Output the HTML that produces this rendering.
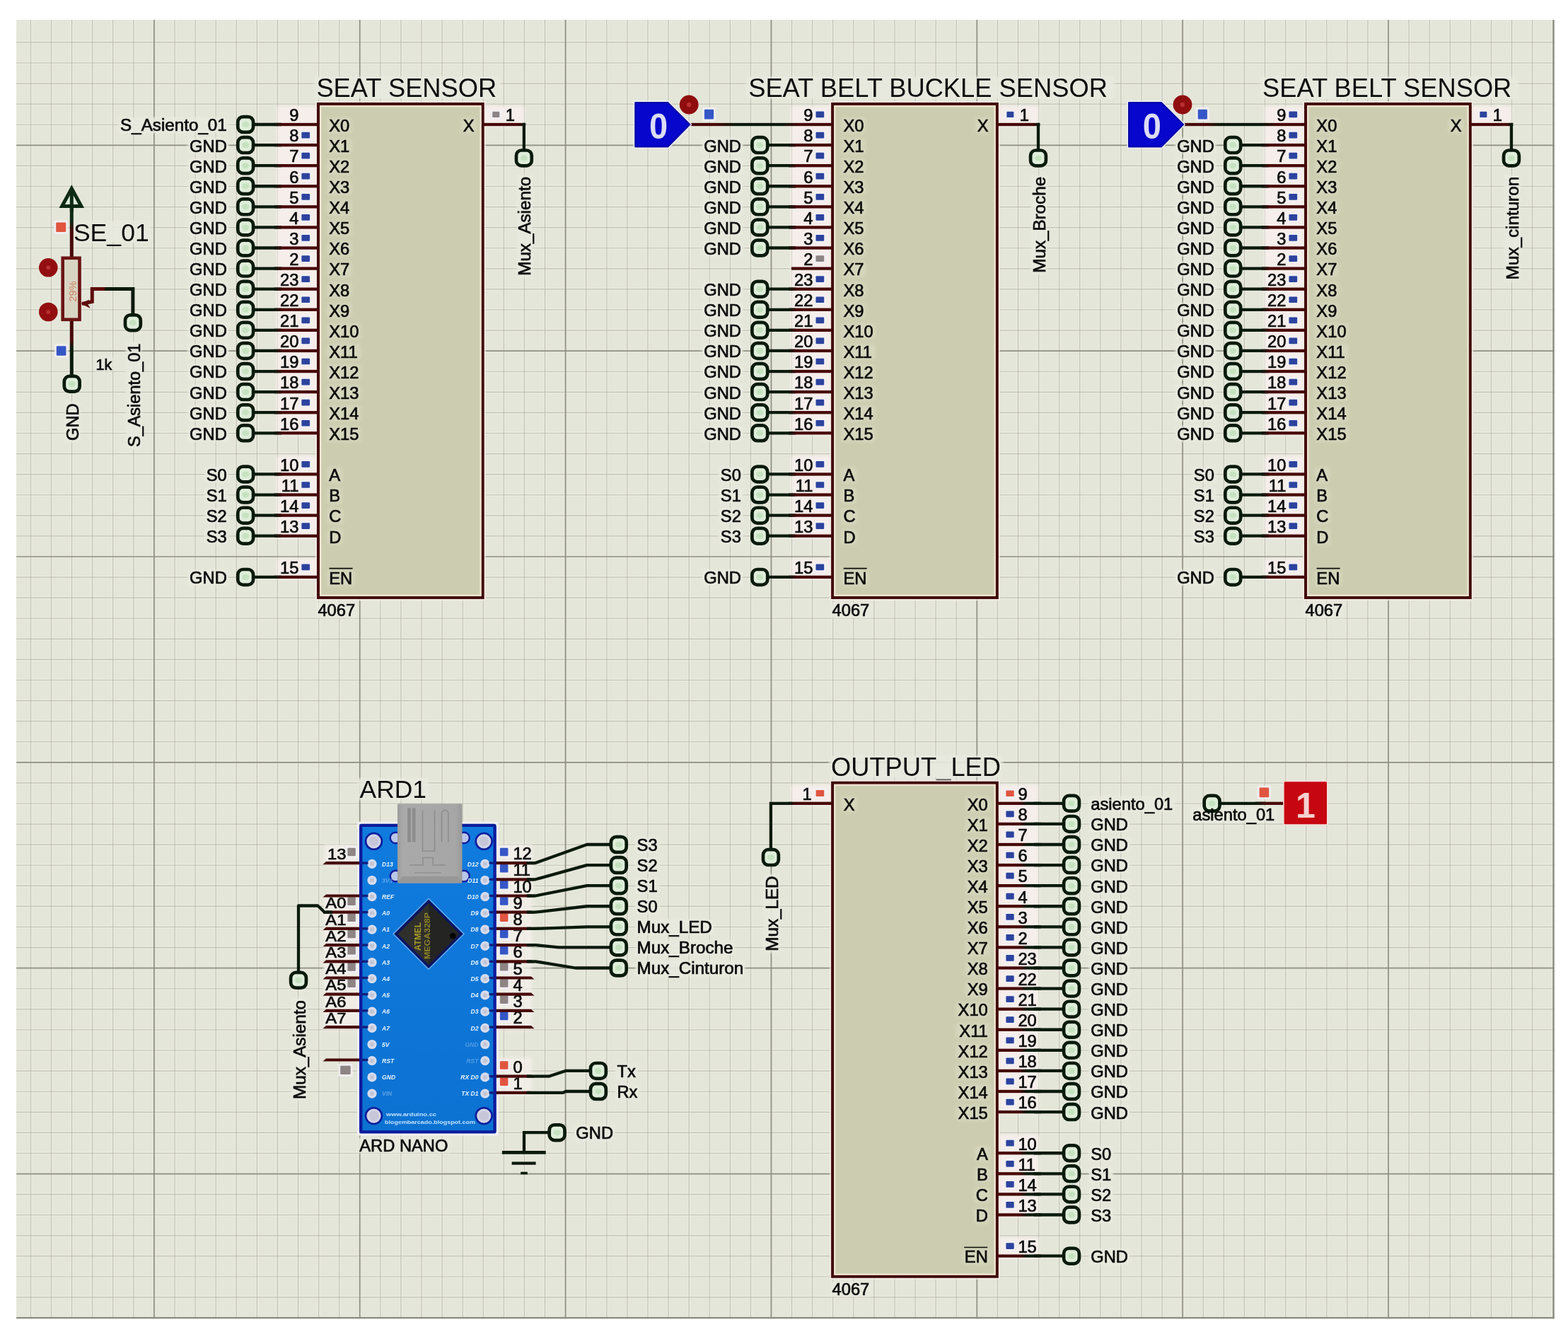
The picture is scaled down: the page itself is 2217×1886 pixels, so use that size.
<!DOCTYPE html>
<html lang="es">
<head>
<meta charset="utf-8">
<title>Esquema 4067 - ARD NANO</title>
<style>
html,body{margin:0;padding:0;background:#fff;}
body{width:2217px;height:1886px;overflow:hidden;}
svg{display:block;position:absolute;left:0;top:0;}
svg text{font-family:"Liberation Sans", Arial, sans-serif;white-space:pre;}
svg text.h{stroke:#0b0b0b;stroke-width:0.7px;}
svg text.t{stroke:none;}
</style>
</head>
<body>
<svg width="2217" height="1886" viewBox="0 0 2217 1886">
<defs>
<filter id="hb2" x="-30%" y="-30%" width="160%" height="160%"><feGaussianBlur stdDeviation="2"/></filter>
<filter id="hb3" x="0" y="0" width="100%" height="100%" filterUnits="userSpaceOnUse"><feGaussianBlur stdDeviation="1.6"/></filter>
<filter id="hb" x="-20%" y="-20%" width="140%" height="140%"><feGaussianBlur stdDeviation="2.2"/></filter>
<filter id="soft" x="0" y="0" width="100%" height="100%" filterUnits="userSpaceOnUse" color-interpolation-filters="sRGB"><feGaussianBlur stdDeviation="0.5"/></filter>
<linearGradient id="gpl" x1="0" x2="1" y1="0" y2="0"><stop offset="0" stop-color="#0a1a0c"/><stop offset="0.18" stop-color="#470909"/><stop offset="1" stop-color="#470909"/></linearGradient>
<linearGradient id="gpr" x1="0" x2="1" y1="0" y2="0"><stop offset="0" stop-color="#470909"/><stop offset="0.82" stop-color="#470909"/><stop offset="1" stop-color="#0a1a0c"/></linearGradient>
<linearGradient id="gpr4" x1="0" x2="1" y1="0" y2="0"><stop offset="0" stop-color="#470909"/><stop offset="0.5" stop-color="#470909"/><stop offset="0.68" stop-color="#0a1a0c"/><stop offset="1" stop-color="#0a1a0c"/></linearGradient>
<linearGradient id="gpl2" x1="0" x2="1" y1="0" y2="0"><stop offset="0" stop-color="#0a1a0c"/><stop offset="0.4" stop-color="#470909"/><stop offset="1" stop-color="#470909"/></linearGradient>
<linearGradient id="gls" x1="0" x2="1" y1="0" y2="0"><stop offset="0" stop-color="#470909"/><stop offset="0.22" stop-color="#470909"/><stop offset="0.34" stop-color="#0a1a0c"/><stop offset="0.66" stop-color="#0a1a0c"/><stop offset="0.78" stop-color="#470909"/><stop offset="1" stop-color="#470909"/></linearGradient>
<linearGradient id="gv1" x1="0" x2="0" y1="0" y2="1"><stop offset="0" stop-color="#0c2a14"/><stop offset="0.45" stop-color="#0c2a14"/><stop offset="0.6" stop-color="#470909"/><stop offset="1" stop-color="#470909"/></linearGradient>
<linearGradient id="gv2" x1="0" x2="0" y1="0" y2="1"><stop offset="0" stop-color="#470909"/><stop offset="0.35" stop-color="#470909"/><stop offset="0.5" stop-color="#0a1a0c"/><stop offset="1" stop-color="#0a1a0c"/></linearGradient>
<linearGradient id="gboard" x1="0" x2="0" y1="0" y2="1"><stop offset="0" stop-color="#107bde"/><stop offset="1" stop-color="#0c72d2"/></linearGradient>
<linearGradient id="gusb" x1="0" x2="1" y1="0" y2="0"><stop offset="0" stop-color="#9c9c9c"/><stop offset="0.08" stop-color="#a9a9a9"/><stop offset="0.9" stop-color="#a6a6a6"/><stop offset="1" stop-color="#999999"/></linearGradient>
</defs>
<g filter="url(#soft)">
<rect x="0" y="0" width="2217" height="1886" fill="#ffffff"/>
<rect x="23.1" y="27.9" width="2174.5" height="1836.3" rx="0" fill="#e5e6da" stroke="none" stroke-width="0" />
<path d="M43.39 27.9V1864.2M72.47 27.9V1864.2M101.56 27.9V1864.2M130.65 27.9V1864.2M159.73 27.9V1864.2M188.81 27.9V1864.2M246.99 27.9V1864.2M276.07 27.9V1864.2M305.16 27.9V1864.2M334.24 27.9V1864.2M363.33 27.9V1864.2M392.41 27.9V1864.2M421.5 27.9V1864.2M450.58 27.9V1864.2M479.67 27.9V1864.2M537.84 27.9V1864.2M566.92 27.9V1864.2M596 27.9V1864.2M625.09 27.9V1864.2M654.18 27.9V1864.2M683.26 27.9V1864.2M712.35 27.9V1864.2M741.43 27.9V1864.2M770.51 27.9V1864.2M828.69 27.9V1864.2M857.77 27.9V1864.2M886.86 27.9V1864.2M915.94 27.9V1864.2M945.02 27.9V1864.2M974.11 27.9V1864.2M1003.2 27.9V1864.2M1032.28 27.9V1864.2M1061.37 27.9V1864.2M1119.53 27.9V1864.2M1148.62 27.9V1864.2M1177.7 27.9V1864.2M1206.79 27.9V1864.2M1235.88 27.9V1864.2M1264.96 27.9V1864.2M1294.04 27.9V1864.2M1323.13 27.9V1864.2M1352.21 27.9V1864.2M1410.38 27.9V1864.2M1439.47 27.9V1864.2M1468.55 27.9V1864.2M1497.64 27.9V1864.2M1526.72 27.9V1864.2M1555.81 27.9V1864.2M1584.89 27.9V1864.2M1613.98 27.9V1864.2M1643.06 27.9V1864.2M1701.23 27.9V1864.2M1730.32 27.9V1864.2M1759.4 27.9V1864.2M1788.49 27.9V1864.2M1817.57 27.9V1864.2M1846.66 27.9V1864.2M1875.74 27.9V1864.2M1904.83 27.9V1864.2M1933.91 27.9V1864.2M1992.08 27.9V1864.2M2021.17 27.9V1864.2M2050.26 27.9V1864.2M2079.34 27.9V1864.2M2108.43 27.9V1864.2M2137.51 27.9V1864.2M2166.6 27.9V1864.2M2195.68 27.9V1864.2M23.1 59.87H2197.6M23.1 88.96H2197.6M23.1 118.05H2197.6M23.1 147.13H2197.6M23.1 176.21H2197.6M23.1 234.38H2197.6M23.1 263.47H2197.6M23.1 292.56H2197.6M23.1 321.64H2197.6M23.1 350.72H2197.6M23.1 379.81H2197.6M23.1 408.89H2197.6M23.1 437.98H2197.6M23.1 467.06H2197.6M23.1 525.24H2197.6M23.1 554.32H2197.6M23.1 583.41H2197.6M23.1 612.49H2197.6M23.1 641.58H2197.6M23.1 670.66H2197.6M23.1 699.75H2197.6M23.1 728.83H2197.6M23.1 757.92H2197.6M23.1 816.09H2197.6M23.1 845.17H2197.6M23.1 874.26H2197.6M23.1 903.34H2197.6M23.1 932.43H2197.6M23.1 961.51H2197.6M23.1 990.6H2197.6M23.1 1019.68H2197.6M23.1 1048.77H2197.6M23.1 1106.93H2197.6M23.1 1136.02H2197.6M23.1 1165.11H2197.6M23.1 1194.19H2197.6M23.1 1223.28H2197.6M23.1 1252.36H2197.6M23.1 1281.44H2197.6M23.1 1310.53H2197.6M23.1 1339.62H2197.6M23.1 1397.79H2197.6M23.1 1426.87H2197.6M23.1 1455.95H2197.6M23.1 1485.04H2197.6M23.1 1514.12H2197.6M23.1 1543.21H2197.6M23.1 1572.3H2197.6M23.1 1601.38H2197.6M23.1 1630.46H2197.6M23.1 1688.63H2197.6M23.1 1717.72H2197.6M23.1 1746.81H2197.6M23.1 1775.89H2197.6M23.1 1804.97H2197.6M23.1 1834.06H2197.6M23.1 1863.14H2197.6" stroke="#eeefe4" stroke-width="4.5" fill="none" opacity="0.45"/>
<path d="M43.39 27.9V1864.2M72.47 27.9V1864.2M101.56 27.9V1864.2M130.65 27.9V1864.2M159.73 27.9V1864.2M188.81 27.9V1864.2M246.99 27.9V1864.2M276.07 27.9V1864.2M305.16 27.9V1864.2M334.24 27.9V1864.2M363.33 27.9V1864.2M392.41 27.9V1864.2M421.5 27.9V1864.2M450.58 27.9V1864.2M479.67 27.9V1864.2M537.84 27.9V1864.2M566.92 27.9V1864.2M596 27.9V1864.2M625.09 27.9V1864.2M654.18 27.9V1864.2M683.26 27.9V1864.2M712.35 27.9V1864.2M741.43 27.9V1864.2M770.51 27.9V1864.2M828.69 27.9V1864.2M857.77 27.9V1864.2M886.86 27.9V1864.2M915.94 27.9V1864.2M945.02 27.9V1864.2M974.11 27.9V1864.2M1003.2 27.9V1864.2M1032.28 27.9V1864.2M1061.37 27.9V1864.2M1119.53 27.9V1864.2M1148.62 27.9V1864.2M1177.7 27.9V1864.2M1206.79 27.9V1864.2M1235.88 27.9V1864.2M1264.96 27.9V1864.2M1294.04 27.9V1864.2M1323.13 27.9V1864.2M1352.21 27.9V1864.2M1410.38 27.9V1864.2M1439.47 27.9V1864.2M1468.55 27.9V1864.2M1497.64 27.9V1864.2M1526.72 27.9V1864.2M1555.81 27.9V1864.2M1584.89 27.9V1864.2M1613.98 27.9V1864.2M1643.06 27.9V1864.2M1701.23 27.9V1864.2M1730.32 27.9V1864.2M1759.4 27.9V1864.2M1788.49 27.9V1864.2M1817.57 27.9V1864.2M1846.66 27.9V1864.2M1875.74 27.9V1864.2M1904.83 27.9V1864.2M1933.91 27.9V1864.2M1992.08 27.9V1864.2M2021.17 27.9V1864.2M2050.26 27.9V1864.2M2079.34 27.9V1864.2M2108.43 27.9V1864.2M2137.51 27.9V1864.2M2166.6 27.9V1864.2M2195.68 27.9V1864.2M23.1 59.87H2197.6M23.1 88.96H2197.6M23.1 118.05H2197.6M23.1 147.13H2197.6M23.1 176.21H2197.6M23.1 234.38H2197.6M23.1 263.47H2197.6M23.1 292.56H2197.6M23.1 321.64H2197.6M23.1 350.72H2197.6M23.1 379.81H2197.6M23.1 408.89H2197.6M23.1 437.98H2197.6M23.1 467.06H2197.6M23.1 525.24H2197.6M23.1 554.32H2197.6M23.1 583.41H2197.6M23.1 612.49H2197.6M23.1 641.58H2197.6M23.1 670.66H2197.6M23.1 699.75H2197.6M23.1 728.83H2197.6M23.1 757.92H2197.6M23.1 816.09H2197.6M23.1 845.17H2197.6M23.1 874.26H2197.6M23.1 903.34H2197.6M23.1 932.43H2197.6M23.1 961.51H2197.6M23.1 990.6H2197.6M23.1 1019.68H2197.6M23.1 1048.77H2197.6M23.1 1106.93H2197.6M23.1 1136.02H2197.6M23.1 1165.11H2197.6M23.1 1194.19H2197.6M23.1 1223.28H2197.6M23.1 1252.36H2197.6M23.1 1281.44H2197.6M23.1 1310.53H2197.6M23.1 1339.62H2197.6M23.1 1397.79H2197.6M23.1 1426.87H2197.6M23.1 1455.95H2197.6M23.1 1485.04H2197.6M23.1 1514.12H2197.6M23.1 1543.21H2197.6M23.1 1572.3H2197.6M23.1 1601.38H2197.6M23.1 1630.46H2197.6M23.1 1688.63H2197.6M23.1 1717.72H2197.6M23.1 1746.81H2197.6M23.1 1775.89H2197.6M23.1 1804.97H2197.6M23.1 1834.06H2197.6M23.1 1863.14H2197.6" stroke="#c0c1b3" stroke-width="1.15" fill="none"/>
<path d="M217.9 27.9V1864.2M508.75 27.9V1864.2M799.6 27.9V1864.2M1090.45 27.9V1864.2M1381.3 27.9V1864.2M1672.15 27.9V1864.2M1963 27.9V1864.2M23.1 205.3H2197.6M23.1 496.15H2197.6M23.1 787H2197.6M23.1 1077.85H2197.6M23.1 1368.7H2197.6M23.1 1659.55H2197.6" stroke="#8e8f82" stroke-width="1.7" fill="none"/>
<g filter="url(#hb3)" opacity="0.9"><rect x="167.87" y="166" width="155.41" height="21.92" rx="3" fill="#e9eadf"/><rect x="406.62" y="151.9" width="18.26" height="21.92" rx="3" fill="#e9eadf"/><rect x="265.28" y="195.08" width="58" height="21.92" rx="3" fill="#e9eadf"/><rect x="406.62" y="180.98" width="18.26" height="21.92" rx="3" fill="#e9eadf"/><rect x="265.28" y="224.17" width="58" height="21.92" rx="3" fill="#e9eadf"/><rect x="406.62" y="210.07" width="18.26" height="21.92" rx="3" fill="#e9eadf"/><rect x="265.28" y="253.25" width="58" height="21.92" rx="3" fill="#e9eadf"/><rect x="406.62" y="239.15" width="18.26" height="21.92" rx="3" fill="#e9eadf"/><rect x="265.28" y="282.33" width="58" height="21.92" rx="3" fill="#e9eadf"/><rect x="406.62" y="268.24" width="18.26" height="21.92" rx="3" fill="#e9eadf"/><rect x="265.28" y="311.42" width="58" height="21.92" rx="3" fill="#e9eadf"/><rect x="406.62" y="297.32" width="18.26" height="21.92" rx="3" fill="#e9eadf"/><rect x="265.28" y="340.5" width="58" height="21.92" rx="3" fill="#e9eadf"/><rect x="406.62" y="326.4" width="18.26" height="21.92" rx="3" fill="#e9eadf"/><rect x="265.28" y="369.59" width="58" height="21.92" rx="3" fill="#e9eadf"/><rect x="406.62" y="355.49" width="18.26" height="21.92" rx="3" fill="#e9eadf"/><rect x="265.28" y="398.67" width="58" height="21.92" rx="3" fill="#e9eadf"/><rect x="393.36" y="384.57" width="31.52" height="21.92" rx="3" fill="#e9eadf"/><rect x="265.28" y="427.76" width="58" height="21.92" rx="3" fill="#e9eadf"/><rect x="393.36" y="413.66" width="31.52" height="21.92" rx="3" fill="#e9eadf"/><rect x="265.28" y="456.84" width="58" height="21.92" rx="3" fill="#e9eadf"/><rect x="393.36" y="442.75" width="31.52" height="21.92" rx="3" fill="#e9eadf"/><rect x="265.28" y="485.93" width="58" height="21.92" rx="3" fill="#e9eadf"/><rect x="393.36" y="471.83" width="31.52" height="21.92" rx="3" fill="#e9eadf"/><rect x="265.28" y="515.01" width="58" height="21.92" rx="3" fill="#e9eadf"/><rect x="393.36" y="500.91" width="31.52" height="21.92" rx="3" fill="#e9eadf"/><rect x="265.28" y="544.1" width="58" height="21.92" rx="3" fill="#e9eadf"/><rect x="393.36" y="530" width="31.52" height="21.92" rx="3" fill="#e9eadf"/><rect x="265.28" y="573.19" width="58" height="21.92" rx="3" fill="#e9eadf"/><rect x="393.36" y="559.09" width="31.52" height="21.92" rx="3" fill="#e9eadf"/><rect x="265.28" y="602.27" width="58" height="21.92" rx="3" fill="#e9eadf"/><rect x="393.36" y="588.17" width="31.52" height="21.92" rx="3" fill="#e9eadf"/><rect x="289.11" y="660.44" width="34.17" height="21.92" rx="3" fill="#e9eadf"/><rect x="393.36" y="646.34" width="31.52" height="21.92" rx="3" fill="#e9eadf"/><rect x="289.11" y="689.52" width="34.17" height="21.92" rx="3" fill="#e9eadf"/><rect x="393.36" y="675.42" width="31.52" height="21.92" rx="3" fill="#e9eadf"/><rect x="289.11" y="718.61" width="34.17" height="21.92" rx="3" fill="#e9eadf"/><rect x="393.36" y="704.51" width="31.52" height="21.92" rx="3" fill="#e9eadf"/><rect x="289.11" y="747.7" width="34.17" height="21.92" rx="3" fill="#e9eadf"/><rect x="393.36" y="733.6" width="31.52" height="21.92" rx="3" fill="#e9eadf"/><rect x="265.28" y="805.87" width="58" height="21.92" rx="3" fill="#e9eadf"/><rect x="393.36" y="791.76" width="31.52" height="21.92" rx="3" fill="#e9eadf"/><rect x="712.16" y="151.9" width="18.26" height="21.92" rx="3" fill="#e9eadf"/><rect x="731.04" y="247.41" width="21.92" height="144.63" rx="3" fill="#e9eadf"/><rect x="444.9" y="108.59" width="263.2" height="31.14" rx="3" fill="#e9eadf"/><rect x="446.88" y="851.85" width="58.05" height="21.92" rx="3" fill="#e9eadf"/><rect x="1133.74" y="151.9" width="18.26" height="21.92" rx="3" fill="#e9eadf"/><rect x="992.4" y="195.08" width="58" height="21.92" rx="3" fill="#e9eadf"/><rect x="1133.74" y="180.98" width="18.26" height="21.92" rx="3" fill="#e9eadf"/><rect x="992.4" y="224.17" width="58" height="21.92" rx="3" fill="#e9eadf"/><rect x="1133.74" y="210.07" width="18.26" height="21.92" rx="3" fill="#e9eadf"/><rect x="992.4" y="253.25" width="58" height="21.92" rx="3" fill="#e9eadf"/><rect x="1133.74" y="239.15" width="18.26" height="21.92" rx="3" fill="#e9eadf"/><rect x="992.4" y="282.33" width="58" height="21.92" rx="3" fill="#e9eadf"/><rect x="1133.74" y="268.24" width="18.26" height="21.92" rx="3" fill="#e9eadf"/><rect x="992.4" y="311.42" width="58" height="21.92" rx="3" fill="#e9eadf"/><rect x="1133.74" y="297.32" width="18.26" height="21.92" rx="3" fill="#e9eadf"/><rect x="992.4" y="340.5" width="58" height="21.92" rx="3" fill="#e9eadf"/><rect x="1133.74" y="326.4" width="18.26" height="21.92" rx="3" fill="#e9eadf"/><rect x="1133.74" y="355.49" width="18.26" height="21.92" rx="3" fill="#e9eadf"/><rect x="992.4" y="398.67" width="58" height="21.92" rx="3" fill="#e9eadf"/><rect x="1120.48" y="384.57" width="31.52" height="21.92" rx="3" fill="#e9eadf"/><rect x="992.4" y="427.76" width="58" height="21.92" rx="3" fill="#e9eadf"/><rect x="1120.48" y="413.66" width="31.52" height="21.92" rx="3" fill="#e9eadf"/><rect x="992.4" y="456.84" width="58" height="21.92" rx="3" fill="#e9eadf"/><rect x="1120.48" y="442.75" width="31.52" height="21.92" rx="3" fill="#e9eadf"/><rect x="992.4" y="485.93" width="58" height="21.92" rx="3" fill="#e9eadf"/><rect x="1120.48" y="471.83" width="31.52" height="21.92" rx="3" fill="#e9eadf"/><rect x="992.4" y="515.01" width="58" height="21.92" rx="3" fill="#e9eadf"/><rect x="1120.48" y="500.91" width="31.52" height="21.92" rx="3" fill="#e9eadf"/><rect x="992.4" y="544.1" width="58" height="21.92" rx="3" fill="#e9eadf"/><rect x="1120.48" y="530" width="31.52" height="21.92" rx="3" fill="#e9eadf"/><rect x="992.4" y="573.19" width="58" height="21.92" rx="3" fill="#e9eadf"/><rect x="1120.48" y="559.09" width="31.52" height="21.92" rx="3" fill="#e9eadf"/><rect x="992.4" y="602.27" width="58" height="21.92" rx="3" fill="#e9eadf"/><rect x="1120.48" y="588.17" width="31.52" height="21.92" rx="3" fill="#e9eadf"/><rect x="1016.23" y="660.44" width="34.17" height="21.92" rx="3" fill="#e9eadf"/><rect x="1120.48" y="646.34" width="31.52" height="21.92" rx="3" fill="#e9eadf"/><rect x="1016.23" y="689.52" width="34.17" height="21.92" rx="3" fill="#e9eadf"/><rect x="1120.48" y="675.42" width="31.52" height="21.92" rx="3" fill="#e9eadf"/><rect x="1016.23" y="718.61" width="34.17" height="21.92" rx="3" fill="#e9eadf"/><rect x="1120.48" y="704.51" width="31.52" height="21.92" rx="3" fill="#e9eadf"/><rect x="1016.23" y="747.7" width="34.17" height="21.92" rx="3" fill="#e9eadf"/><rect x="1120.48" y="733.6" width="31.52" height="21.92" rx="3" fill="#e9eadf"/><rect x="992.4" y="805.87" width="58" height="21.92" rx="3" fill="#e9eadf"/><rect x="1120.48" y="791.76" width="31.52" height="21.92" rx="3" fill="#e9eadf"/><rect x="1439.29" y="151.9" width="18.26" height="21.92" rx="3" fill="#e9eadf"/><rect x="1458.16" y="247.41" width="21.92" height="140.6" rx="3" fill="#e9eadf"/><rect x="1055.7" y="108.59" width="519.41" height="31.14" rx="3" fill="#e9eadf"/><rect x="1174.01" y="851.85" width="58.05" height="21.92" rx="3" fill="#e9eadf"/><rect x="1802.7" y="151.9" width="18.26" height="21.92" rx="3" fill="#e9eadf"/><rect x="1661.36" y="195.08" width="58" height="21.92" rx="3" fill="#e9eadf"/><rect x="1802.7" y="180.98" width="18.26" height="21.92" rx="3" fill="#e9eadf"/><rect x="1661.36" y="224.17" width="58" height="21.92" rx="3" fill="#e9eadf"/><rect x="1802.7" y="210.07" width="18.26" height="21.92" rx="3" fill="#e9eadf"/><rect x="1661.36" y="253.25" width="58" height="21.92" rx="3" fill="#e9eadf"/><rect x="1802.7" y="239.15" width="18.26" height="21.92" rx="3" fill="#e9eadf"/><rect x="1661.36" y="282.33" width="58" height="21.92" rx="3" fill="#e9eadf"/><rect x="1802.7" y="268.24" width="18.26" height="21.92" rx="3" fill="#e9eadf"/><rect x="1661.36" y="311.42" width="58" height="21.92" rx="3" fill="#e9eadf"/><rect x="1802.7" y="297.32" width="18.26" height="21.92" rx="3" fill="#e9eadf"/><rect x="1661.36" y="340.5" width="58" height="21.92" rx="3" fill="#e9eadf"/><rect x="1802.7" y="326.4" width="18.26" height="21.92" rx="3" fill="#e9eadf"/><rect x="1661.36" y="369.59" width="58" height="21.92" rx="3" fill="#e9eadf"/><rect x="1802.7" y="355.49" width="18.26" height="21.92" rx="3" fill="#e9eadf"/><rect x="1661.36" y="398.67" width="58" height="21.92" rx="3" fill="#e9eadf"/><rect x="1789.44" y="384.57" width="31.52" height="21.92" rx="3" fill="#e9eadf"/><rect x="1661.36" y="427.76" width="58" height="21.92" rx="3" fill="#e9eadf"/><rect x="1789.44" y="413.66" width="31.52" height="21.92" rx="3" fill="#e9eadf"/><rect x="1661.36" y="456.84" width="58" height="21.92" rx="3" fill="#e9eadf"/><rect x="1789.44" y="442.75" width="31.52" height="21.92" rx="3" fill="#e9eadf"/><rect x="1661.36" y="485.93" width="58" height="21.92" rx="3" fill="#e9eadf"/><rect x="1789.44" y="471.83" width="31.52" height="21.92" rx="3" fill="#e9eadf"/><rect x="1661.36" y="515.01" width="58" height="21.92" rx="3" fill="#e9eadf"/><rect x="1789.44" y="500.91" width="31.52" height="21.92" rx="3" fill="#e9eadf"/><rect x="1661.36" y="544.1" width="58" height="21.92" rx="3" fill="#e9eadf"/><rect x="1789.44" y="530" width="31.52" height="21.92" rx="3" fill="#e9eadf"/><rect x="1661.36" y="573.19" width="58" height="21.92" rx="3" fill="#e9eadf"/><rect x="1789.44" y="559.09" width="31.52" height="21.92" rx="3" fill="#e9eadf"/><rect x="1661.36" y="602.27" width="58" height="21.92" rx="3" fill="#e9eadf"/><rect x="1789.44" y="588.17" width="31.52" height="21.92" rx="3" fill="#e9eadf"/><rect x="1685.19" y="660.44" width="34.17" height="21.92" rx="3" fill="#e9eadf"/><rect x="1789.44" y="646.34" width="31.52" height="21.92" rx="3" fill="#e9eadf"/><rect x="1685.19" y="689.52" width="34.17" height="21.92" rx="3" fill="#e9eadf"/><rect x="1789.44" y="675.42" width="31.52" height="21.92" rx="3" fill="#e9eadf"/><rect x="1685.19" y="718.61" width="34.17" height="21.92" rx="3" fill="#e9eadf"/><rect x="1789.44" y="704.51" width="31.52" height="21.92" rx="3" fill="#e9eadf"/><rect x="1685.19" y="747.7" width="34.17" height="21.92" rx="3" fill="#e9eadf"/><rect x="1789.44" y="733.6" width="31.52" height="21.92" rx="3" fill="#e9eadf"/><rect x="1661.36" y="805.87" width="58" height="21.92" rx="3" fill="#e9eadf"/><rect x="1789.44" y="791.76" width="31.52" height="21.92" rx="3" fill="#e9eadf"/><rect x="2108.24" y="151.9" width="18.26" height="21.92" rx="3" fill="#e9eadf"/><rect x="2127.12" y="247.41" width="21.92" height="150" rx="3" fill="#e9eadf"/><rect x="1782.5" y="108.59" width="364.08" height="31.14" rx="3" fill="#e9eadf"/><rect x="1842.96" y="851.85" width="58.05" height="21.92" rx="3" fill="#e9eadf"/><rect x="1172.5" y="1068.4" width="245.02" height="31.14" rx="3" fill="#e9eadf"/><rect x="1539.69" y="1125.8" width="121.69" height="21.92" rx="3" fill="#e9eadf"/><rect x="1436.88" y="1111.7" width="18.26" height="21.92" rx="3" fill="#e9eadf"/><rect x="1539.69" y="1154.88" width="58" height="21.92" rx="3" fill="#e9eadf"/><rect x="1436.88" y="1140.78" width="18.26" height="21.92" rx="3" fill="#e9eadf"/><rect x="1539.69" y="1183.97" width="58" height="21.92" rx="3" fill="#e9eadf"/><rect x="1436.88" y="1169.87" width="18.26" height="21.92" rx="3" fill="#e9eadf"/><rect x="1539.69" y="1213.06" width="58" height="21.92" rx="3" fill="#e9eadf"/><rect x="1436.88" y="1198.95" width="18.26" height="21.92" rx="3" fill="#e9eadf"/><rect x="1539.69" y="1242.14" width="58" height="21.92" rx="3" fill="#e9eadf"/><rect x="1436.88" y="1228.04" width="18.26" height="21.92" rx="3" fill="#e9eadf"/><rect x="1539.69" y="1271.22" width="58" height="21.92" rx="3" fill="#e9eadf"/><rect x="1436.88" y="1257.12" width="18.26" height="21.92" rx="3" fill="#e9eadf"/><rect x="1539.69" y="1300.31" width="58" height="21.92" rx="3" fill="#e9eadf"/><rect x="1436.88" y="1286.21" width="18.26" height="21.92" rx="3" fill="#e9eadf"/><rect x="1539.69" y="1329.39" width="58" height="21.92" rx="3" fill="#e9eadf"/><rect x="1436.88" y="1315.29" width="18.26" height="21.92" rx="3" fill="#e9eadf"/><rect x="1539.69" y="1358.48" width="58" height="21.92" rx="3" fill="#e9eadf"/><rect x="1436.88" y="1344.38" width="31.52" height="21.92" rx="3" fill="#e9eadf"/><rect x="1539.69" y="1387.57" width="58" height="21.92" rx="3" fill="#e9eadf"/><rect x="1436.88" y="1373.46" width="31.52" height="21.92" rx="3" fill="#e9eadf"/><rect x="1539.69" y="1416.65" width="58" height="21.92" rx="3" fill="#e9eadf"/><rect x="1436.88" y="1402.55" width="31.52" height="21.92" rx="3" fill="#e9eadf"/><rect x="1539.69" y="1445.73" width="58" height="21.92" rx="3" fill="#e9eadf"/><rect x="1436.88" y="1431.63" width="31.52" height="21.92" rx="3" fill="#e9eadf"/><rect x="1539.69" y="1474.82" width="58" height="21.92" rx="3" fill="#e9eadf"/><rect x="1436.88" y="1460.72" width="31.52" height="21.92" rx="3" fill="#e9eadf"/><rect x="1539.69" y="1503.9" width="58" height="21.92" rx="3" fill="#e9eadf"/><rect x="1436.88" y="1489.8" width="31.52" height="21.92" rx="3" fill="#e9eadf"/><rect x="1539.69" y="1532.99" width="58" height="21.92" rx="3" fill="#e9eadf"/><rect x="1436.88" y="1518.89" width="31.52" height="21.92" rx="3" fill="#e9eadf"/><rect x="1539.69" y="1562.08" width="58" height="21.92" rx="3" fill="#e9eadf"/><rect x="1436.88" y="1547.97" width="31.52" height="21.92" rx="3" fill="#e9eadf"/><rect x="1539.69" y="1620.24" width="34.17" height="21.92" rx="3" fill="#e9eadf"/><rect x="1436.88" y="1606.14" width="31.52" height="21.92" rx="3" fill="#e9eadf"/><rect x="1539.69" y="1649.33" width="34.17" height="21.92" rx="3" fill="#e9eadf"/><rect x="1436.88" y="1635.23" width="31.52" height="21.92" rx="3" fill="#e9eadf"/><rect x="1539.69" y="1678.41" width="34.17" height="21.92" rx="3" fill="#e9eadf"/><rect x="1436.88" y="1664.31" width="31.52" height="21.92" rx="3" fill="#e9eadf"/><rect x="1539.69" y="1707.5" width="34.17" height="21.92" rx="3" fill="#e9eadf"/><rect x="1436.88" y="1693.4" width="31.52" height="21.92" rx="3" fill="#e9eadf"/><rect x="1539.69" y="1765.67" width="58" height="21.92" rx="3" fill="#e9eadf"/><rect x="1436.88" y="1751.57" width="31.52" height="21.92" rx="3" fill="#e9eadf"/><rect x="1131.84" y="1111.7" width="18.26" height="21.92" rx="3" fill="#e9eadf"/><rect x="1080.08" y="1235.92" width="21.92" height="111.05" rx="3" fill="#e9eadf"/><rect x="1174.01" y="1811.65" width="58.05" height="21.92" rx="3" fill="#e9eadf"/><rect x="91.48" y="567.8" width="21.92" height="58" rx="3" fill="#e9eadf"/><rect x="178.08" y="483.2" width="21.92" height="152.04" rx="3" fill="#e9eadf"/><rect x="101.4" y="312.37" width="111.87" height="30.63" rx="3" fill="#e9eadf"/><rect x="133.1" y="504.62" width="27.7" height="20.48" rx="3" fill="#e9eadf"/><rect x="1683.7" y="1140.58" width="121.69" height="21.92" rx="3" fill="#e9eadf"/><rect x="506.1" y="1100.31" width="99.41" height="30.49" rx="3" fill="#e9eadf"/><rect x="505.7" y="1608.48" width="130.89" height="21.92" rx="3" fill="#e9eadf"/><rect x="460.48" y="1196.36" width="31.42" height="20.84" rx="3" fill="#e9eadf"/><rect x="457.84" y="1265.96" width="34.06" height="20.84" rx="3" fill="#e9eadf"/><rect x="457.84" y="1289.16" width="34.06" height="20.84" rx="3" fill="#e9eadf"/><rect x="457.84" y="1312.36" width="34.06" height="20.84" rx="3" fill="#e9eadf"/><rect x="457.84" y="1335.56" width="34.06" height="20.84" rx="3" fill="#e9eadf"/><rect x="457.84" y="1358.76" width="34.06" height="20.84" rx="3" fill="#e9eadf"/><rect x="457.84" y="1381.96" width="34.06" height="20.84" rx="3" fill="#e9eadf"/><rect x="457.84" y="1405.16" width="34.06" height="20.84" rx="3" fill="#e9eadf"/><rect x="457.84" y="1428.36" width="34.06" height="20.84" rx="3" fill="#e9eadf"/><rect x="722.9" y="1195.68" width="31.52" height="21.92" rx="3" fill="#e9eadf"/><rect x="722.9" y="1218.88" width="31.52" height="21.92" rx="3" fill="#e9eadf"/><rect x="722.9" y="1242.08" width="31.52" height="21.92" rx="3" fill="#e9eadf"/><rect x="722.9" y="1265.28" width="18.26" height="21.92" rx="3" fill="#e9eadf"/><rect x="722.9" y="1288.48" width="18.26" height="21.92" rx="3" fill="#e9eadf"/><rect x="722.9" y="1311.68" width="18.26" height="21.92" rx="3" fill="#e9eadf"/><rect x="722.9" y="1334.88" width="18.26" height="21.92" rx="3" fill="#e9eadf"/><rect x="722.9" y="1358.08" width="18.26" height="21.92" rx="3" fill="#e9eadf"/><rect x="722.9" y="1381.28" width="18.26" height="21.92" rx="3" fill="#e9eadf"/><rect x="722.9" y="1404.48" width="18.26" height="21.92" rx="3" fill="#e9eadf"/><rect x="722.9" y="1427.68" width="18.26" height="21.92" rx="3" fill="#e9eadf"/><rect x="722.9" y="1497.28" width="18.26" height="21.92" rx="3" fill="#e9eadf"/><rect x="722.9" y="1520.48" width="18.26" height="21.92" rx="3" fill="#e9eadf"/><rect x="898.1" y="1183.47" width="34.17" height="21.92" rx="3" fill="#e9eadf"/><rect x="898.1" y="1212.56" width="34.17" height="21.92" rx="3" fill="#e9eadf"/><rect x="898.1" y="1241.64" width="34.17" height="21.92" rx="3" fill="#e9eadf"/><rect x="898.1" y="1270.72" width="34.17" height="21.92" rx="3" fill="#e9eadf"/><rect x="898.1" y="1299.81" width="111.05" height="21.92" rx="3" fill="#e9eadf"/><rect x="898.1" y="1328.89" width="140.6" height="21.92" rx="3" fill="#e9eadf"/><rect x="898.1" y="1357.98" width="155.36" height="21.92" rx="3" fill="#e9eadf"/><rect x="869.9" y="1503.4" width="31.5" height="21.92" rx="3" fill="#e9eadf"/><rect x="869.9" y="1532.49" width="34.15" height="21.92" rx="3" fill="#e9eadf"/><rect x="412.18" y="1411.6" width="21.92" height="144.63" rx="3" fill="#e9eadf"/><rect x="811.8" y="1590.66" width="58" height="21.92" rx="3" fill="#e9eadf"/></g>
<line x1="2196.6" y1="27.9" x2="2196.6" y2="1864.2" stroke="#8b8c80" stroke-width="2.2" stroke-linecap="butt"/>
<line x1="23.1" y1="1863.2" x2="2197.6" y2="1863.2" stroke="#8b8c80" stroke-width="2.2" stroke-linecap="butt"/>
<g id="ics">
<rect x="391.98" y="150.01" width="57" height="465.27" rx="0" fill="#f8efed" stroke="none" stroke-width="0" opacity="0.9" filter="url(#hb)"/>
<rect x="391.98" y="644.46" width="57" height="116.25" rx="0" fill="#f8efed" stroke="none" stroke-width="0" opacity="0.9" filter="url(#hb)"/>
<rect x="391.98" y="789.88" width="57" height="29" rx="0" fill="#f8efed" stroke="none" stroke-width="0" opacity="0.9" filter="url(#hb)"/>
<rect x="683.66" y="150.01" width="57" height="29" rx="0" fill="#f8efed" stroke="none" stroke-width="0" opacity="0.9" filter="url(#hb)"/>
<rect x="446.98" y="143.93" width="238.68" height="704.04" fill="none" stroke="#f3ebe6" stroke-width="2.4" opacity="0.8"/>
<rect x="449.98" y="146.93" width="232.68" height="698.04" rx="0" fill="#cccdb0" stroke="#400908" stroke-width="4" />
<rect x="453.18" y="150.13" width="226.28" height="691.64" fill="none" stroke="#f3e6d6" stroke-width="2.4" opacity="0.85"/>
<line x1="359.18" y1="176.01" x2="397.98" y2="176.01" stroke="#0a1a0c" stroke-width="4.3" stroke-linecap="butt"/>
<rect x="387.98" y="173.86" width="61" height="4.3" fill="url(#gpl)"/>
<rect x="336.28" y="165.11" width="21.8" height="21.8" rx="7.4" ry="7.4" fill="#deeeda" stroke="#0a1a0c" stroke-width="4.7"/>
<ellipse cx="347.18" cy="176.01" rx="5" ry="4" fill="#bfddb7" opacity="0.75"/>
<text x="0" y="0" font-size="23.5" text-anchor="end" fill="#0b0b0b" font-weight="normal" font-style="normal" transform="translate(320.78 185.41) scale(1.03 1)" class="h" >S_Asiento_01</text>
<text x="0" y="0" font-size="23.5" text-anchor="end" fill="#0b0b0b" font-weight="normal" font-style="normal" transform="translate(422.38 171.31) scale(1.01 1)" class="h" >9</text>
<rect x="462.78" y="166.4" width="34.17" height="21.92" rx="4" fill="#d6d6bd" filter="url(#hb2)"/>
<text x="0" y="0" font-size="23.5" text-anchor="start" fill="#0b0b0b" font-weight="normal" font-style="normal" transform="translate(465.28 185.81) scale(1.01 1)" class="h" >X0</text>
<line x1="359.18" y1="205.1" x2="397.98" y2="205.1" stroke="#0a1a0c" stroke-width="4.3" stroke-linecap="butt"/>
<rect x="387.98" y="202.95" width="61" height="4.3" fill="url(#gpl)"/>
<rect x="336.28" y="194.2" width="21.8" height="21.8" rx="7.4" ry="7.4" fill="#deeeda" stroke="#0a1a0c" stroke-width="4.7"/>
<ellipse cx="347.18" cy="205.1" rx="5" ry="4" fill="#bfddb7" opacity="0.75"/>
<text x="0" y="0" font-size="23.5" text-anchor="end" fill="#0b0b0b" font-weight="normal" font-style="normal" transform="translate(320.78 214.5) scale(1.01 1)" class="h" >GND</text>
<rect x="423.38" y="183.7" width="17.7" height="14.7" rx="2" fill="#f1eef2" stroke="none" stroke-width="0" opacity="0.85"/>
<rect x="426.38" y="186.7" width="11.7" height="8.7" rx="1.2" fill="#2c439e" stroke="none" stroke-width="0" />
<text x="0" y="0" font-size="23.5" text-anchor="end" fill="#0b0b0b" font-weight="normal" font-style="normal" transform="translate(422.38 200.4) scale(1.01 1)" class="h" >8</text>
<rect x="462.78" y="195.48" width="34.17" height="21.92" rx="4" fill="#d6d6bd" filter="url(#hb2)"/>
<text x="0" y="0" font-size="23.5" text-anchor="start" fill="#0b0b0b" font-weight="normal" font-style="normal" transform="translate(465.28 214.9) scale(1.01 1)" class="h" >X1</text>
<line x1="359.18" y1="234.19" x2="397.98" y2="234.19" stroke="#0a1a0c" stroke-width="4.3" stroke-linecap="butt"/>
<rect x="387.98" y="232.03" width="61" height="4.3" fill="url(#gpl)"/>
<rect x="336.28" y="223.28" width="21.8" height="21.8" rx="7.4" ry="7.4" fill="#deeeda" stroke="#0a1a0c" stroke-width="4.7"/>
<ellipse cx="347.18" cy="234.19" rx="5" ry="4" fill="#bfddb7" opacity="0.75"/>
<text x="0" y="0" font-size="23.5" text-anchor="end" fill="#0b0b0b" font-weight="normal" font-style="normal" transform="translate(320.78 243.59) scale(1.01 1)" class="h" >GND</text>
<rect x="423.38" y="212.78" width="17.7" height="14.7" rx="2" fill="#f1eef2" stroke="none" stroke-width="0" opacity="0.85"/>
<rect x="426.38" y="215.78" width="11.7" height="8.7" rx="1.2" fill="#2c439e" stroke="none" stroke-width="0" />
<text x="0" y="0" font-size="23.5" text-anchor="end" fill="#0b0b0b" font-weight="normal" font-style="normal" transform="translate(422.38 229.49) scale(1.01 1)" class="h" >7</text>
<rect x="462.78" y="224.57" width="34.17" height="21.92" rx="4" fill="#d6d6bd" filter="url(#hb2)"/>
<text x="0" y="0" font-size="23.5" text-anchor="start" fill="#0b0b0b" font-weight="normal" font-style="normal" transform="translate(465.28 243.99) scale(1.01 1)" class="h" >X2</text>
<line x1="359.18" y1="263.27" x2="397.98" y2="263.27" stroke="#0a1a0c" stroke-width="4.3" stroke-linecap="butt"/>
<rect x="387.98" y="261.12" width="61" height="4.3" fill="url(#gpl)"/>
<rect x="336.28" y="252.37" width="21.8" height="21.8" rx="7.4" ry="7.4" fill="#deeeda" stroke="#0a1a0c" stroke-width="4.7"/>
<ellipse cx="347.18" cy="263.27" rx="5" ry="4" fill="#bfddb7" opacity="0.75"/>
<text x="0" y="0" font-size="23.5" text-anchor="end" fill="#0b0b0b" font-weight="normal" font-style="normal" transform="translate(320.78 272.67) scale(1.01 1)" class="h" >GND</text>
<rect x="423.38" y="241.87" width="17.7" height="14.7" rx="2" fill="#f1eef2" stroke="none" stroke-width="0" opacity="0.85"/>
<rect x="426.38" y="244.87" width="11.7" height="8.7" rx="1.2" fill="#2c439e" stroke="none" stroke-width="0" />
<text x="0" y="0" font-size="23.5" text-anchor="end" fill="#0b0b0b" font-weight="normal" font-style="normal" transform="translate(422.38 258.57) scale(1.01 1)" class="h" >6</text>
<rect x="462.78" y="253.65" width="34.17" height="21.92" rx="4" fill="#d6d6bd" filter="url(#hb2)"/>
<text x="0" y="0" font-size="23.5" text-anchor="start" fill="#0b0b0b" font-weight="normal" font-style="normal" transform="translate(465.28 273.07) scale(1.01 1)" class="h" >X3</text>
<line x1="359.18" y1="292.36" x2="397.98" y2="292.36" stroke="#0a1a0c" stroke-width="4.3" stroke-linecap="butt"/>
<rect x="387.98" y="290.21" width="61" height="4.3" fill="url(#gpl)"/>
<rect x="336.28" y="281.46" width="21.8" height="21.8" rx="7.4" ry="7.4" fill="#deeeda" stroke="#0a1a0c" stroke-width="4.7"/>
<ellipse cx="347.18" cy="292.36" rx="5" ry="4" fill="#bfddb7" opacity="0.75"/>
<text x="0" y="0" font-size="23.5" text-anchor="end" fill="#0b0b0b" font-weight="normal" font-style="normal" transform="translate(320.78 301.75) scale(1.01 1)" class="h" >GND</text>
<rect x="423.38" y="270.96" width="17.7" height="14.7" rx="2" fill="#f1eef2" stroke="none" stroke-width="0" opacity="0.85"/>
<rect x="426.38" y="273.96" width="11.7" height="8.7" rx="1.2" fill="#2c439e" stroke="none" stroke-width="0" />
<text x="0" y="0" font-size="23.5" text-anchor="end" fill="#0b0b0b" font-weight="normal" font-style="normal" transform="translate(422.38 287.66) scale(1.01 1)" class="h" >5</text>
<rect x="462.78" y="282.74" width="34.17" height="21.92" rx="4" fill="#d6d6bd" filter="url(#hb2)"/>
<text x="0" y="0" font-size="23.5" text-anchor="start" fill="#0b0b0b" font-weight="normal" font-style="normal" transform="translate(465.28 302.16) scale(1.01 1)" class="h" >X4</text>
<line x1="359.18" y1="321.44" x2="397.98" y2="321.44" stroke="#0a1a0c" stroke-width="4.3" stroke-linecap="butt"/>
<rect x="387.98" y="319.29" width="61" height="4.3" fill="url(#gpl)"/>
<rect x="336.28" y="310.54" width="21.8" height="21.8" rx="7.4" ry="7.4" fill="#deeeda" stroke="#0a1a0c" stroke-width="4.7"/>
<ellipse cx="347.18" cy="321.44" rx="5" ry="4" fill="#bfddb7" opacity="0.75"/>
<text x="0" y="0" font-size="23.5" text-anchor="end" fill="#0b0b0b" font-weight="normal" font-style="normal" transform="translate(320.78 330.84) scale(1.01 1)" class="h" >GND</text>
<rect x="423.38" y="300.04" width="17.7" height="14.7" rx="2" fill="#f1eef2" stroke="none" stroke-width="0" opacity="0.85"/>
<rect x="426.38" y="303.04" width="11.7" height="8.7" rx="1.2" fill="#2c439e" stroke="none" stroke-width="0" />
<text x="0" y="0" font-size="23.5" text-anchor="end" fill="#0b0b0b" font-weight="normal" font-style="normal" transform="translate(422.38 316.74) scale(1.01 1)" class="h" >4</text>
<rect x="462.78" y="311.82" width="34.17" height="21.92" rx="4" fill="#d6d6bd" filter="url(#hb2)"/>
<text x="0" y="0" font-size="23.5" text-anchor="start" fill="#0b0b0b" font-weight="normal" font-style="normal" transform="translate(465.28 331.24) scale(1.01 1)" class="h" >X5</text>
<line x1="359.18" y1="350.52" x2="397.98" y2="350.52" stroke="#0a1a0c" stroke-width="4.3" stroke-linecap="butt"/>
<rect x="387.98" y="348.38" width="61" height="4.3" fill="url(#gpl)"/>
<rect x="336.28" y="339.62" width="21.8" height="21.8" rx="7.4" ry="7.4" fill="#deeeda" stroke="#0a1a0c" stroke-width="4.7"/>
<ellipse cx="347.18" cy="350.52" rx="5" ry="4" fill="#bfddb7" opacity="0.75"/>
<text x="0" y="0" font-size="23.5" text-anchor="end" fill="#0b0b0b" font-weight="normal" font-style="normal" transform="translate(320.78 359.92) scale(1.01 1)" class="h" >GND</text>
<rect x="423.38" y="329.12" width="17.7" height="14.7" rx="2" fill="#f1eef2" stroke="none" stroke-width="0" opacity="0.85"/>
<rect x="426.38" y="332.12" width="11.7" height="8.7" rx="1.2" fill="#2c439e" stroke="none" stroke-width="0" />
<text x="0" y="0" font-size="23.5" text-anchor="end" fill="#0b0b0b" font-weight="normal" font-style="normal" transform="translate(422.38 345.82) scale(1.01 1)" class="h" >3</text>
<rect x="462.78" y="340.9" width="34.17" height="21.92" rx="4" fill="#d6d6bd" filter="url(#hb2)"/>
<text x="0" y="0" font-size="23.5" text-anchor="start" fill="#0b0b0b" font-weight="normal" font-style="normal" transform="translate(465.28 360.32) scale(1.01 1)" class="h" >X6</text>
<line x1="359.18" y1="379.61" x2="397.98" y2="379.61" stroke="#0a1a0c" stroke-width="4.3" stroke-linecap="butt"/>
<rect x="387.98" y="377.46" width="61" height="4.3" fill="url(#gpl)"/>
<rect x="336.28" y="368.71" width="21.8" height="21.8" rx="7.4" ry="7.4" fill="#deeeda" stroke="#0a1a0c" stroke-width="4.7"/>
<ellipse cx="347.18" cy="379.61" rx="5" ry="4" fill="#bfddb7" opacity="0.75"/>
<text x="0" y="0" font-size="23.5" text-anchor="end" fill="#0b0b0b" font-weight="normal" font-style="normal" transform="translate(320.78 389.01) scale(1.01 1)" class="h" >GND</text>
<rect x="423.38" y="358.21" width="17.7" height="14.7" rx="2" fill="#f1eef2" stroke="none" stroke-width="0" opacity="0.85"/>
<rect x="426.38" y="361.21" width="11.7" height="8.7" rx="1.2" fill="#2c439e" stroke="none" stroke-width="0" />
<text x="0" y="0" font-size="23.5" text-anchor="end" fill="#0b0b0b" font-weight="normal" font-style="normal" transform="translate(422.38 374.91) scale(1.01 1)" class="h" >2</text>
<rect x="462.78" y="369.99" width="34.17" height="21.92" rx="4" fill="#d6d6bd" filter="url(#hb2)"/>
<text x="0" y="0" font-size="23.5" text-anchor="start" fill="#0b0b0b" font-weight="normal" font-style="normal" transform="translate(465.28 389.41) scale(1.01 1)" class="h" >X7</text>
<line x1="359.18" y1="408.69" x2="397.98" y2="408.69" stroke="#0a1a0c" stroke-width="4.3" stroke-linecap="butt"/>
<rect x="387.98" y="406.55" width="61" height="4.3" fill="url(#gpl)"/>
<rect x="336.28" y="397.8" width="21.8" height="21.8" rx="7.4" ry="7.4" fill="#deeeda" stroke="#0a1a0c" stroke-width="4.7"/>
<ellipse cx="347.18" cy="408.69" rx="5" ry="4" fill="#bfddb7" opacity="0.75"/>
<text x="0" y="0" font-size="23.5" text-anchor="end" fill="#0b0b0b" font-weight="normal" font-style="normal" transform="translate(320.78 418.09) scale(1.01 1)" class="h" >GND</text>
<rect x="423.38" y="387.3" width="17.7" height="14.7" rx="2" fill="#f1eef2" stroke="none" stroke-width="0" opacity="0.85"/>
<rect x="426.38" y="390.3" width="11.7" height="8.7" rx="1.2" fill="#2c439e" stroke="none" stroke-width="0" />
<text x="0" y="0" font-size="23.5" text-anchor="end" fill="#0b0b0b" font-weight="normal" font-style="normal" transform="translate(422.38 404) scale(1.01 1)" class="h" >23</text>
<rect x="462.78" y="399.07" width="34.17" height="21.92" rx="4" fill="#d6d6bd" filter="url(#hb2)"/>
<text x="0" y="0" font-size="23.5" text-anchor="start" fill="#0b0b0b" font-weight="normal" font-style="normal" transform="translate(465.28 418.5) scale(1.01 1)" class="h" >X8</text>
<line x1="359.18" y1="437.78" x2="397.98" y2="437.78" stroke="#0a1a0c" stroke-width="4.3" stroke-linecap="butt"/>
<rect x="387.98" y="435.63" width="61" height="4.3" fill="url(#gpl)"/>
<rect x="336.28" y="426.88" width="21.8" height="21.8" rx="7.4" ry="7.4" fill="#deeeda" stroke="#0a1a0c" stroke-width="4.7"/>
<ellipse cx="347.18" cy="437.78" rx="5" ry="4" fill="#bfddb7" opacity="0.75"/>
<text x="0" y="0" font-size="23.5" text-anchor="end" fill="#0b0b0b" font-weight="normal" font-style="normal" transform="translate(320.78 447.18) scale(1.01 1)" class="h" >GND</text>
<rect x="423.38" y="416.38" width="17.7" height="14.7" rx="2" fill="#f1eef2" stroke="none" stroke-width="0" opacity="0.85"/>
<rect x="426.38" y="419.38" width="11.7" height="8.7" rx="1.2" fill="#2c439e" stroke="none" stroke-width="0" />
<text x="0" y="0" font-size="23.5" text-anchor="end" fill="#0b0b0b" font-weight="normal" font-style="normal" transform="translate(422.38 433.08) scale(1.01 1)" class="h" >22</text>
<rect x="462.78" y="428.16" width="34.17" height="21.92" rx="4" fill="#d6d6bd" filter="url(#hb2)"/>
<text x="0" y="0" font-size="23.5" text-anchor="start" fill="#0b0b0b" font-weight="normal" font-style="normal" transform="translate(465.28 447.58) scale(1.01 1)" class="h" >X9</text>
<line x1="359.18" y1="466.87" x2="397.98" y2="466.87" stroke="#0a1a0c" stroke-width="4.3" stroke-linecap="butt"/>
<rect x="387.98" y="464.72" width="61" height="4.3" fill="url(#gpl)"/>
<rect x="336.28" y="455.97" width="21.8" height="21.8" rx="7.4" ry="7.4" fill="#deeeda" stroke="#0a1a0c" stroke-width="4.7"/>
<ellipse cx="347.18" cy="466.87" rx="5" ry="4" fill="#bfddb7" opacity="0.75"/>
<text x="0" y="0" font-size="23.5" text-anchor="end" fill="#0b0b0b" font-weight="normal" font-style="normal" transform="translate(320.78 476.26) scale(1.01 1)" class="h" >GND</text>
<rect x="423.38" y="445.47" width="17.7" height="14.7" rx="2" fill="#f1eef2" stroke="none" stroke-width="0" opacity="0.85"/>
<rect x="426.38" y="448.47" width="11.7" height="8.7" rx="1.2" fill="#2c439e" stroke="none" stroke-width="0" />
<text x="0" y="0" font-size="23.5" text-anchor="end" fill="#0b0b0b" font-weight="normal" font-style="normal" transform="translate(422.38 462.17) scale(1.01 1)" class="h" >21</text>
<rect x="462.78" y="457.25" width="47.43" height="21.92" rx="4" fill="#d6d6bd" filter="url(#hb2)"/>
<text x="0" y="0" font-size="23.5" text-anchor="start" fill="#0b0b0b" font-weight="normal" font-style="normal" transform="translate(465.28 476.67) scale(1.01 1)" class="h" >X10</text>
<line x1="359.18" y1="495.95" x2="397.98" y2="495.95" stroke="#0a1a0c" stroke-width="4.3" stroke-linecap="butt"/>
<rect x="387.98" y="493.8" width="61" height="4.3" fill="url(#gpl)"/>
<rect x="336.28" y="485.05" width="21.8" height="21.8" rx="7.4" ry="7.4" fill="#deeeda" stroke="#0a1a0c" stroke-width="4.7"/>
<ellipse cx="347.18" cy="495.95" rx="5" ry="4" fill="#bfddb7" opacity="0.75"/>
<text x="0" y="0" font-size="23.5" text-anchor="end" fill="#0b0b0b" font-weight="normal" font-style="normal" transform="translate(320.78 505.35) scale(1.01 1)" class="h" >GND</text>
<rect x="423.38" y="474.55" width="17.7" height="14.7" rx="2" fill="#f1eef2" stroke="none" stroke-width="0" opacity="0.85"/>
<rect x="426.38" y="477.55" width="11.7" height="8.7" rx="1.2" fill="#2c439e" stroke="none" stroke-width="0" />
<text x="0" y="0" font-size="23.5" text-anchor="end" fill="#0b0b0b" font-weight="normal" font-style="normal" transform="translate(422.38 491.25) scale(1.01 1)" class="h" >20</text>
<rect x="462.78" y="486.33" width="47.43" height="21.92" rx="4" fill="#d6d6bd" filter="url(#hb2)"/>
<text x="0" y="0" font-size="23.5" text-anchor="start" fill="#0b0b0b" font-weight="normal" font-style="normal" transform="translate(465.28 505.75) scale(1.01 1)" class="h" >X11</text>
<line x1="359.18" y1="525.03" x2="397.98" y2="525.03" stroke="#0a1a0c" stroke-width="4.3" stroke-linecap="butt"/>
<rect x="387.98" y="522.88" width="61" height="4.3" fill="url(#gpl)"/>
<rect x="336.28" y="514.13" width="21.8" height="21.8" rx="7.4" ry="7.4" fill="#deeeda" stroke="#0a1a0c" stroke-width="4.7"/>
<ellipse cx="347.18" cy="525.03" rx="5" ry="4" fill="#bfddb7" opacity="0.75"/>
<text x="0" y="0" font-size="23.5" text-anchor="end" fill="#0b0b0b" font-weight="normal" font-style="normal" transform="translate(320.78 534.43) scale(1.01 1)" class="h" >GND</text>
<rect x="423.38" y="503.63" width="17.7" height="14.7" rx="2" fill="#f1eef2" stroke="none" stroke-width="0" opacity="0.85"/>
<rect x="426.38" y="506.63" width="11.7" height="8.7" rx="1.2" fill="#2c439e" stroke="none" stroke-width="0" />
<text x="0" y="0" font-size="23.5" text-anchor="end" fill="#0b0b0b" font-weight="normal" font-style="normal" transform="translate(422.38 520.33) scale(1.01 1)" class="h" >19</text>
<rect x="462.78" y="515.41" width="47.43" height="21.92" rx="4" fill="#d6d6bd" filter="url(#hb2)"/>
<text x="0" y="0" font-size="23.5" text-anchor="start" fill="#0b0b0b" font-weight="normal" font-style="normal" transform="translate(465.28 534.83) scale(1.01 1)" class="h" >X12</text>
<line x1="359.18" y1="554.12" x2="397.98" y2="554.12" stroke="#0a1a0c" stroke-width="4.3" stroke-linecap="butt"/>
<rect x="387.98" y="551.97" width="61" height="4.3" fill="url(#gpl)"/>
<rect x="336.28" y="543.22" width="21.8" height="21.8" rx="7.4" ry="7.4" fill="#deeeda" stroke="#0a1a0c" stroke-width="4.7"/>
<ellipse cx="347.18" cy="554.12" rx="5" ry="4" fill="#bfddb7" opacity="0.75"/>
<text x="0" y="0" font-size="23.5" text-anchor="end" fill="#0b0b0b" font-weight="normal" font-style="normal" transform="translate(320.78 563.52) scale(1.01 1)" class="h" >GND</text>
<rect x="423.38" y="532.72" width="17.7" height="14.7" rx="2" fill="#f1eef2" stroke="none" stroke-width="0" opacity="0.85"/>
<rect x="426.38" y="535.72" width="11.7" height="8.7" rx="1.2" fill="#2c439e" stroke="none" stroke-width="0" />
<text x="0" y="0" font-size="23.5" text-anchor="end" fill="#0b0b0b" font-weight="normal" font-style="normal" transform="translate(422.38 549.42) scale(1.01 1)" class="h" >18</text>
<rect x="462.78" y="544.5" width="47.43" height="21.92" rx="4" fill="#d6d6bd" filter="url(#hb2)"/>
<text x="0" y="0" font-size="23.5" text-anchor="start" fill="#0b0b0b" font-weight="normal" font-style="normal" transform="translate(465.28 563.92) scale(1.01 1)" class="h" >X13</text>
<line x1="359.18" y1="583.21" x2="397.98" y2="583.21" stroke="#0a1a0c" stroke-width="4.3" stroke-linecap="butt"/>
<rect x="387.98" y="581.06" width="61" height="4.3" fill="url(#gpl)"/>
<rect x="336.28" y="572.31" width="21.8" height="21.8" rx="7.4" ry="7.4" fill="#deeeda" stroke="#0a1a0c" stroke-width="4.7"/>
<ellipse cx="347.18" cy="583.21" rx="5" ry="4" fill="#bfddb7" opacity="0.75"/>
<text x="0" y="0" font-size="23.5" text-anchor="end" fill="#0b0b0b" font-weight="normal" font-style="normal" transform="translate(320.78 592.61) scale(1.01 1)" class="h" >GND</text>
<rect x="423.38" y="561.81" width="17.7" height="14.7" rx="2" fill="#f1eef2" stroke="none" stroke-width="0" opacity="0.85"/>
<rect x="426.38" y="564.81" width="11.7" height="8.7" rx="1.2" fill="#2c439e" stroke="none" stroke-width="0" />
<text x="0" y="0" font-size="23.5" text-anchor="end" fill="#0b0b0b" font-weight="normal" font-style="normal" transform="translate(422.38 578.5) scale(1.01 1)" class="h" >17</text>
<rect x="462.78" y="573.59" width="47.43" height="21.92" rx="4" fill="#d6d6bd" filter="url(#hb2)"/>
<text x="0" y="0" font-size="23.5" text-anchor="start" fill="#0b0b0b" font-weight="normal" font-style="normal" transform="translate(465.28 593) scale(1.01 1)" class="h" >X14</text>
<line x1="359.18" y1="612.29" x2="397.98" y2="612.29" stroke="#0a1a0c" stroke-width="4.3" stroke-linecap="butt"/>
<rect x="387.98" y="610.14" width="61" height="4.3" fill="url(#gpl)"/>
<rect x="336.28" y="601.39" width="21.8" height="21.8" rx="7.4" ry="7.4" fill="#deeeda" stroke="#0a1a0c" stroke-width="4.7"/>
<ellipse cx="347.18" cy="612.29" rx="5" ry="4" fill="#bfddb7" opacity="0.75"/>
<text x="0" y="0" font-size="23.5" text-anchor="end" fill="#0b0b0b" font-weight="normal" font-style="normal" transform="translate(320.78 621.69) scale(1.01 1)" class="h" >GND</text>
<rect x="423.38" y="590.89" width="17.7" height="14.7" rx="2" fill="#f1eef2" stroke="none" stroke-width="0" opacity="0.85"/>
<rect x="426.38" y="593.89" width="11.7" height="8.7" rx="1.2" fill="#2c439e" stroke="none" stroke-width="0" />
<text x="0" y="0" font-size="23.5" text-anchor="end" fill="#0b0b0b" font-weight="normal" font-style="normal" transform="translate(422.38 607.59) scale(1.01 1)" class="h" >16</text>
<rect x="462.78" y="602.67" width="47.43" height="21.92" rx="4" fill="#d6d6bd" filter="url(#hb2)"/>
<text x="0" y="0" font-size="23.5" text-anchor="start" fill="#0b0b0b" font-weight="normal" font-style="normal" transform="translate(465.28 622.09) scale(1.01 1)" class="h" >X15</text>
<line x1="359.18" y1="670.46" x2="397.98" y2="670.46" stroke="#0a1a0c" stroke-width="4.3" stroke-linecap="butt"/>
<rect x="387.98" y="668.31" width="61" height="4.3" fill="url(#gpl)"/>
<rect x="336.28" y="659.56" width="21.8" height="21.8" rx="7.4" ry="7.4" fill="#deeeda" stroke="#0a1a0c" stroke-width="4.7"/>
<ellipse cx="347.18" cy="670.46" rx="5" ry="4" fill="#bfddb7" opacity="0.75"/>
<text x="0" y="0" font-size="23.5" text-anchor="end" fill="#0b0b0b" font-weight="normal" font-style="normal" transform="translate(320.78 679.86) scale(1.01 1)" class="h" >S0</text>
<rect x="423.38" y="649.06" width="17.7" height="14.7" rx="2" fill="#f1eef2" stroke="none" stroke-width="0" opacity="0.85"/>
<rect x="426.38" y="652.06" width="11.7" height="8.7" rx="1.2" fill="#2c439e" stroke="none" stroke-width="0" />
<text x="0" y="0" font-size="23.5" text-anchor="end" fill="#0b0b0b" font-weight="normal" font-style="normal" transform="translate(422.38 665.76) scale(1.01 1)" class="h" >10</text>
<rect x="462.78" y="660.84" width="20.91" height="21.92" rx="4" fill="#d6d6bd" filter="url(#hb2)"/>
<text x="0" y="0" font-size="23.5" text-anchor="start" fill="#0b0b0b" font-weight="normal" font-style="normal" transform="translate(465.28 680.26) scale(1.01 1)" class="h" >A</text>
<line x1="359.18" y1="699.54" x2="397.98" y2="699.54" stroke="#0a1a0c" stroke-width="4.3" stroke-linecap="butt"/>
<rect x="387.98" y="697.39" width="61" height="4.3" fill="url(#gpl)"/>
<rect x="336.28" y="688.64" width="21.8" height="21.8" rx="7.4" ry="7.4" fill="#deeeda" stroke="#0a1a0c" stroke-width="4.7"/>
<ellipse cx="347.18" cy="699.54" rx="5" ry="4" fill="#bfddb7" opacity="0.75"/>
<text x="0" y="0" font-size="23.5" text-anchor="end" fill="#0b0b0b" font-weight="normal" font-style="normal" transform="translate(320.78 708.94) scale(1.01 1)" class="h" >S1</text>
<rect x="423.38" y="678.14" width="17.7" height="14.7" rx="2" fill="#f1eef2" stroke="none" stroke-width="0" opacity="0.85"/>
<rect x="426.38" y="681.14" width="11.7" height="8.7" rx="1.2" fill="#2c439e" stroke="none" stroke-width="0" />
<text x="0" y="0" font-size="23.5" text-anchor="end" fill="#0b0b0b" font-weight="normal" font-style="normal" transform="translate(422.38 694.84) scale(1.01 1)" class="h" >11</text>
<rect x="462.78" y="689.92" width="20.91" height="21.92" rx="4" fill="#d6d6bd" filter="url(#hb2)"/>
<text x="0" y="0" font-size="23.5" text-anchor="start" fill="#0b0b0b" font-weight="normal" font-style="normal" transform="translate(465.28 709.34) scale(1.01 1)" class="h" >B</text>
<line x1="359.18" y1="728.63" x2="397.98" y2="728.63" stroke="#0a1a0c" stroke-width="4.3" stroke-linecap="butt"/>
<rect x="387.98" y="726.48" width="61" height="4.3" fill="url(#gpl)"/>
<rect x="336.28" y="717.73" width="21.8" height="21.8" rx="7.4" ry="7.4" fill="#deeeda" stroke="#0a1a0c" stroke-width="4.7"/>
<ellipse cx="347.18" cy="728.63" rx="5" ry="4" fill="#bfddb7" opacity="0.75"/>
<text x="0" y="0" font-size="23.5" text-anchor="end" fill="#0b0b0b" font-weight="normal" font-style="normal" transform="translate(320.78 738.03) scale(1.01 1)" class="h" >S2</text>
<rect x="423.38" y="707.23" width="17.7" height="14.7" rx="2" fill="#f1eef2" stroke="none" stroke-width="0" opacity="0.85"/>
<rect x="426.38" y="710.23" width="11.7" height="8.7" rx="1.2" fill="#2c439e" stroke="none" stroke-width="0" />
<text x="0" y="0" font-size="23.5" text-anchor="end" fill="#0b0b0b" font-weight="normal" font-style="normal" transform="translate(422.38 723.93) scale(1.01 1)" class="h" >14</text>
<rect x="462.78" y="719.01" width="22.22" height="21.92" rx="4" fill="#d6d6bd" filter="url(#hb2)"/>
<text x="0" y="0" font-size="23.5" text-anchor="start" fill="#0b0b0b" font-weight="normal" font-style="normal" transform="translate(465.28 738.43) scale(1.01 1)" class="h" >C</text>
<line x1="359.18" y1="757.72" x2="397.98" y2="757.72" stroke="#0a1a0c" stroke-width="4.3" stroke-linecap="butt"/>
<rect x="387.98" y="755.57" width="61" height="4.3" fill="url(#gpl)"/>
<rect x="336.28" y="746.82" width="21.8" height="21.8" rx="7.4" ry="7.4" fill="#deeeda" stroke="#0a1a0c" stroke-width="4.7"/>
<ellipse cx="347.18" cy="757.72" rx="5" ry="4" fill="#bfddb7" opacity="0.75"/>
<text x="0" y="0" font-size="23.5" text-anchor="end" fill="#0b0b0b" font-weight="normal" font-style="normal" transform="translate(320.78 767.12) scale(1.01 1)" class="h" >S3</text>
<rect x="423.38" y="736.32" width="17.7" height="14.7" rx="2" fill="#f1eef2" stroke="none" stroke-width="0" opacity="0.85"/>
<rect x="426.38" y="739.32" width="11.7" height="8.7" rx="1.2" fill="#2c439e" stroke="none" stroke-width="0" />
<text x="0" y="0" font-size="23.5" text-anchor="end" fill="#0b0b0b" font-weight="normal" font-style="normal" transform="translate(422.38 753.01) scale(1.01 1)" class="h" >13</text>
<rect x="462.78" y="748.1" width="22.22" height="21.92" rx="4" fill="#d6d6bd" filter="url(#hb2)"/>
<text x="0" y="0" font-size="23.5" text-anchor="start" fill="#0b0b0b" font-weight="normal" font-style="normal" transform="translate(465.28 767.51) scale(1.01 1)" class="h" >D</text>
<line x1="359.18" y1="815.88" x2="397.98" y2="815.88" stroke="#0a1a0c" stroke-width="4.3" stroke-linecap="butt"/>
<rect x="387.98" y="813.74" width="61" height="4.3" fill="url(#gpl)"/>
<rect x="336.28" y="804.99" width="21.8" height="21.8" rx="7.4" ry="7.4" fill="#deeeda" stroke="#0a1a0c" stroke-width="4.7"/>
<ellipse cx="347.18" cy="815.88" rx="5" ry="4" fill="#bfddb7" opacity="0.75"/>
<text x="0" y="0" font-size="23.5" text-anchor="end" fill="#0b0b0b" font-weight="normal" font-style="normal" transform="translate(320.78 825.28) scale(1.01 1)" class="h" >GND</text>
<rect x="423.38" y="794.49" width="17.7" height="14.7" rx="2" fill="#f1eef2" stroke="none" stroke-width="0" opacity="0.85"/>
<rect x="426.38" y="797.49" width="11.7" height="8.7" rx="1.2" fill="#2c439e" stroke="none" stroke-width="0" />
<text x="0" y="0" font-size="23.5" text-anchor="end" fill="#0b0b0b" font-weight="normal" font-style="normal" transform="translate(422.38 811.18) scale(1.01 1)" class="h" >15</text>
<rect x="462.78" y="806.26" width="38.13" height="21.92" rx="4" fill="#d6d6bd" filter="url(#hb2)"/>
<text x="0" y="0" font-size="23.5" text-anchor="start" fill="#0b0b0b" font-weight="normal" font-style="normal" transform="translate(465.28 825.68) scale(1.01 1)" class="h" >EN</text>
<line x1="465.58" y1="803.68" x2="498.58" y2="803.68" stroke="#0b0b0b" stroke-width="1.7" stroke-linecap="butt"/>
<rect x="652.05" y="166.4" width="20.91" height="21.92" rx="4" fill="#d6d6bd" filter="url(#hb2)"/>
<text x="0" y="0" font-size="23.5" text-anchor="end" fill="#0b0b0b" font-weight="normal" font-style="normal" transform="translate(670.46 185.81) scale(1.01 1)" class="h" >X</text>
<rect x="683.66" y="173.86" width="59.6" height="4.3" fill="url(#gpr)"/>
<line x1="740.86" y1="173.86" x2="740.86" y2="212.01" stroke="#0a1a0c" stroke-width="4.3" stroke-linecap="butt"/>
<rect x="729.96" y="212.51" width="21.8" height="21.8" rx="7.4" ry="7.4" fill="#deeeda" stroke="#0a1a0c" stroke-width="4.7"/>
<ellipse cx="740.86" cy="223.41" rx="5" ry="4" fill="#bfddb7" opacity="0.75"/>
<rect x="693.26" y="154.71" width="16" height="14.4" rx="2" fill="#f1eef2" stroke="none" stroke-width="0" opacity="0.85"/>
<rect x="696.26" y="157.71" width="10" height="8.4" rx="1.2" fill="#8d8484" stroke="none" stroke-width="0" />
<text x="0" y="0" font-size="23.5" text-anchor="start" fill="#0b0b0b" font-weight="normal" font-style="normal" transform="translate(714.66 171.31) scale(1.01 1)" class="h" >1</text>
<text x="0" y="0" font-size="23.5" text-anchor="end" fill="#0b0b0b" font-weight="normal" font-style="normal" transform="translate(750.46 249.91) rotate(-90) scale(1.03 1)" class="h" >Mux_Asiento</text>
<text x="447.4" y="137.23" font-size="36.3" text-anchor="start" fill="#0b0b0b" font-weight="normal" font-style="normal" >SEAT SENSOR</text>
<text x="0" y="0" font-size="23.5" text-anchor="start" fill="#0b0b0b" font-weight="normal" font-style="normal" transform="translate(449.38 871.27) scale(1.01 1)" class="h" >4067</text>
<rect x="1119.11" y="150.01" width="57" height="465.27" rx="0" fill="#f8efed" stroke="none" stroke-width="0" opacity="0.9" filter="url(#hb)"/>
<rect x="1119.11" y="644.46" width="57" height="116.25" rx="0" fill="#f8efed" stroke="none" stroke-width="0" opacity="0.9" filter="url(#hb)"/>
<rect x="1119.11" y="789.88" width="57" height="29" rx="0" fill="#f8efed" stroke="none" stroke-width="0" opacity="0.9" filter="url(#hb)"/>
<rect x="1410.79" y="150.01" width="57" height="29" rx="0" fill="#f8efed" stroke="none" stroke-width="0" opacity="0.9" filter="url(#hb)"/>
<rect x="1174.11" y="143.93" width="238.68" height="704.04" fill="none" stroke="#f3ebe6" stroke-width="2.4" opacity="0.8"/>
<rect x="1177.11" y="146.93" width="232.68" height="698.04" rx="0" fill="#cccdb0" stroke="#400908" stroke-width="4" />
<rect x="1180.31" y="150.13" width="226.28" height="691.64" fill="none" stroke="#f3e6d6" stroke-width="2.4" opacity="0.85"/>
<rect x="1150.51" y="154.61" width="17.7" height="14.7" rx="2" fill="#f1eef2" stroke="none" stroke-width="0" opacity="0.85"/>
<rect x="1153.51" y="157.61" width="11.7" height="8.7" rx="1.2" fill="#2c439e" stroke="none" stroke-width="0" />
<text x="0" y="0" font-size="23.5" text-anchor="end" fill="#0b0b0b" font-weight="normal" font-style="normal" transform="translate(1149.51 171.31) scale(1.01 1)" class="h" >9</text>
<rect x="1189.9" y="166.4" width="34.17" height="21.92" rx="4" fill="#d6d6bd" filter="url(#hb2)"/>
<text x="0" y="0" font-size="23.5" text-anchor="start" fill="#0b0b0b" font-weight="normal" font-style="normal" transform="translate(1192.4 185.81) scale(1.01 1)" class="h" >X0</text>
<line x1="1086.31" y1="205.1" x2="1125.11" y2="205.1" stroke="#0a1a0c" stroke-width="4.3" stroke-linecap="butt"/>
<rect x="1115.11" y="202.95" width="61" height="4.3" fill="url(#gpl)"/>
<rect x="1063.4" y="194.2" width="21.8" height="21.8" rx="7.4" ry="7.4" fill="#deeeda" stroke="#0a1a0c" stroke-width="4.7"/>
<ellipse cx="1074.31" cy="205.1" rx="5" ry="4" fill="#bfddb7" opacity="0.75"/>
<text x="0" y="0" font-size="23.5" text-anchor="end" fill="#0b0b0b" font-weight="normal" font-style="normal" transform="translate(1047.9 214.5) scale(1.01 1)" class="h" >GND</text>
<rect x="1150.51" y="183.7" width="17.7" height="14.7" rx="2" fill="#f1eef2" stroke="none" stroke-width="0" opacity="0.85"/>
<rect x="1153.51" y="186.7" width="11.7" height="8.7" rx="1.2" fill="#2c439e" stroke="none" stroke-width="0" />
<text x="0" y="0" font-size="23.5" text-anchor="end" fill="#0b0b0b" font-weight="normal" font-style="normal" transform="translate(1149.51 200.4) scale(1.01 1)" class="h" >8</text>
<rect x="1189.9" y="195.48" width="34.17" height="21.92" rx="4" fill="#d6d6bd" filter="url(#hb2)"/>
<text x="0" y="0" font-size="23.5" text-anchor="start" fill="#0b0b0b" font-weight="normal" font-style="normal" transform="translate(1192.4 214.9) scale(1.01 1)" class="h" >X1</text>
<line x1="1086.31" y1="234.19" x2="1125.11" y2="234.19" stroke="#0a1a0c" stroke-width="4.3" stroke-linecap="butt"/>
<rect x="1115.11" y="232.03" width="61" height="4.3" fill="url(#gpl)"/>
<rect x="1063.4" y="223.28" width="21.8" height="21.8" rx="7.4" ry="7.4" fill="#deeeda" stroke="#0a1a0c" stroke-width="4.7"/>
<ellipse cx="1074.31" cy="234.19" rx="5" ry="4" fill="#bfddb7" opacity="0.75"/>
<text x="0" y="0" font-size="23.5" text-anchor="end" fill="#0b0b0b" font-weight="normal" font-style="normal" transform="translate(1047.9 243.59) scale(1.01 1)" class="h" >GND</text>
<rect x="1150.51" y="212.78" width="17.7" height="14.7" rx="2" fill="#f1eef2" stroke="none" stroke-width="0" opacity="0.85"/>
<rect x="1153.51" y="215.78" width="11.7" height="8.7" rx="1.2" fill="#2c439e" stroke="none" stroke-width="0" />
<text x="0" y="0" font-size="23.5" text-anchor="end" fill="#0b0b0b" font-weight="normal" font-style="normal" transform="translate(1149.51 229.49) scale(1.01 1)" class="h" >7</text>
<rect x="1189.9" y="224.57" width="34.17" height="21.92" rx="4" fill="#d6d6bd" filter="url(#hb2)"/>
<text x="0" y="0" font-size="23.5" text-anchor="start" fill="#0b0b0b" font-weight="normal" font-style="normal" transform="translate(1192.4 243.99) scale(1.01 1)" class="h" >X2</text>
<line x1="1086.31" y1="263.27" x2="1125.11" y2="263.27" stroke="#0a1a0c" stroke-width="4.3" stroke-linecap="butt"/>
<rect x="1115.11" y="261.12" width="61" height="4.3" fill="url(#gpl)"/>
<rect x="1063.4" y="252.37" width="21.8" height="21.8" rx="7.4" ry="7.4" fill="#deeeda" stroke="#0a1a0c" stroke-width="4.7"/>
<ellipse cx="1074.31" cy="263.27" rx="5" ry="4" fill="#bfddb7" opacity="0.75"/>
<text x="0" y="0" font-size="23.5" text-anchor="end" fill="#0b0b0b" font-weight="normal" font-style="normal" transform="translate(1047.9 272.67) scale(1.01 1)" class="h" >GND</text>
<rect x="1150.51" y="241.87" width="17.7" height="14.7" rx="2" fill="#f1eef2" stroke="none" stroke-width="0" opacity="0.85"/>
<rect x="1153.51" y="244.87" width="11.7" height="8.7" rx="1.2" fill="#2c439e" stroke="none" stroke-width="0" />
<text x="0" y="0" font-size="23.5" text-anchor="end" fill="#0b0b0b" font-weight="normal" font-style="normal" transform="translate(1149.51 258.57) scale(1.01 1)" class="h" >6</text>
<rect x="1189.9" y="253.65" width="34.17" height="21.92" rx="4" fill="#d6d6bd" filter="url(#hb2)"/>
<text x="0" y="0" font-size="23.5" text-anchor="start" fill="#0b0b0b" font-weight="normal" font-style="normal" transform="translate(1192.4 273.07) scale(1.01 1)" class="h" >X3</text>
<line x1="1086.31" y1="292.36" x2="1125.11" y2="292.36" stroke="#0a1a0c" stroke-width="4.3" stroke-linecap="butt"/>
<rect x="1115.11" y="290.21" width="61" height="4.3" fill="url(#gpl)"/>
<rect x="1063.4" y="281.46" width="21.8" height="21.8" rx="7.4" ry="7.4" fill="#deeeda" stroke="#0a1a0c" stroke-width="4.7"/>
<ellipse cx="1074.31" cy="292.36" rx="5" ry="4" fill="#bfddb7" opacity="0.75"/>
<text x="0" y="0" font-size="23.5" text-anchor="end" fill="#0b0b0b" font-weight="normal" font-style="normal" transform="translate(1047.9 301.75) scale(1.01 1)" class="h" >GND</text>
<rect x="1150.51" y="270.96" width="17.7" height="14.7" rx="2" fill="#f1eef2" stroke="none" stroke-width="0" opacity="0.85"/>
<rect x="1153.51" y="273.96" width="11.7" height="8.7" rx="1.2" fill="#2c439e" stroke="none" stroke-width="0" />
<text x="0" y="0" font-size="23.5" text-anchor="end" fill="#0b0b0b" font-weight="normal" font-style="normal" transform="translate(1149.51 287.66) scale(1.01 1)" class="h" >5</text>
<rect x="1189.9" y="282.74" width="34.17" height="21.92" rx="4" fill="#d6d6bd" filter="url(#hb2)"/>
<text x="0" y="0" font-size="23.5" text-anchor="start" fill="#0b0b0b" font-weight="normal" font-style="normal" transform="translate(1192.4 302.16) scale(1.01 1)" class="h" >X4</text>
<line x1="1086.31" y1="321.44" x2="1125.11" y2="321.44" stroke="#0a1a0c" stroke-width="4.3" stroke-linecap="butt"/>
<rect x="1115.11" y="319.29" width="61" height="4.3" fill="url(#gpl)"/>
<rect x="1063.4" y="310.54" width="21.8" height="21.8" rx="7.4" ry="7.4" fill="#deeeda" stroke="#0a1a0c" stroke-width="4.7"/>
<ellipse cx="1074.31" cy="321.44" rx="5" ry="4" fill="#bfddb7" opacity="0.75"/>
<text x="0" y="0" font-size="23.5" text-anchor="end" fill="#0b0b0b" font-weight="normal" font-style="normal" transform="translate(1047.9 330.84) scale(1.01 1)" class="h" >GND</text>
<rect x="1150.51" y="300.04" width="17.7" height="14.7" rx="2" fill="#f1eef2" stroke="none" stroke-width="0" opacity="0.85"/>
<rect x="1153.51" y="303.04" width="11.7" height="8.7" rx="1.2" fill="#2c439e" stroke="none" stroke-width="0" />
<text x="0" y="0" font-size="23.5" text-anchor="end" fill="#0b0b0b" font-weight="normal" font-style="normal" transform="translate(1149.51 316.74) scale(1.01 1)" class="h" >4</text>
<rect x="1189.9" y="311.82" width="34.17" height="21.92" rx="4" fill="#d6d6bd" filter="url(#hb2)"/>
<text x="0" y="0" font-size="23.5" text-anchor="start" fill="#0b0b0b" font-weight="normal" font-style="normal" transform="translate(1192.4 331.24) scale(1.01 1)" class="h" >X5</text>
<line x1="1086.31" y1="350.52" x2="1125.11" y2="350.52" stroke="#0a1a0c" stroke-width="4.3" stroke-linecap="butt"/>
<rect x="1115.11" y="348.38" width="61" height="4.3" fill="url(#gpl)"/>
<rect x="1063.4" y="339.62" width="21.8" height="21.8" rx="7.4" ry="7.4" fill="#deeeda" stroke="#0a1a0c" stroke-width="4.7"/>
<ellipse cx="1074.31" cy="350.52" rx="5" ry="4" fill="#bfddb7" opacity="0.75"/>
<text x="0" y="0" font-size="23.5" text-anchor="end" fill="#0b0b0b" font-weight="normal" font-style="normal" transform="translate(1047.9 359.92) scale(1.01 1)" class="h" >GND</text>
<rect x="1150.51" y="329.12" width="17.7" height="14.7" rx="2" fill="#f1eef2" stroke="none" stroke-width="0" opacity="0.85"/>
<rect x="1153.51" y="332.12" width="11.7" height="8.7" rx="1.2" fill="#2c439e" stroke="none" stroke-width="0" />
<text x="0" y="0" font-size="23.5" text-anchor="end" fill="#0b0b0b" font-weight="normal" font-style="normal" transform="translate(1149.51 345.82) scale(1.01 1)" class="h" >3</text>
<rect x="1189.9" y="340.9" width="34.17" height="21.92" rx="4" fill="#d6d6bd" filter="url(#hb2)"/>
<text x="0" y="0" font-size="23.5" text-anchor="start" fill="#0b0b0b" font-weight="normal" font-style="normal" transform="translate(1192.4 360.32) scale(1.01 1)" class="h" >X6</text>
<line x1="1118.9" y1="379.61" x2="1176.11" y2="379.61" stroke="#470909" stroke-width="4.3" stroke-linecap="butt"/>
<rect x="1150.51" y="358.21" width="17.7" height="14.7" rx="2" fill="#f1eef2" stroke="none" stroke-width="0" opacity="0.85"/>
<rect x="1153.51" y="361.21" width="11.7" height="8.7" rx="1.2" fill="#8d8484" stroke="none" stroke-width="0" />
<text x="0" y="0" font-size="23.5" text-anchor="end" fill="#0b0b0b" font-weight="normal" font-style="normal" transform="translate(1149.51 374.91) scale(1.01 1)" class="h" >2</text>
<rect x="1189.9" y="369.99" width="34.17" height="21.92" rx="4" fill="#d6d6bd" filter="url(#hb2)"/>
<text x="0" y="0" font-size="23.5" text-anchor="start" fill="#0b0b0b" font-weight="normal" font-style="normal" transform="translate(1192.4 389.41) scale(1.01 1)" class="h" >X7</text>
<line x1="1086.31" y1="408.69" x2="1125.11" y2="408.69" stroke="#0a1a0c" stroke-width="4.3" stroke-linecap="butt"/>
<rect x="1115.11" y="406.55" width="61" height="4.3" fill="url(#gpl)"/>
<rect x="1063.4" y="397.8" width="21.8" height="21.8" rx="7.4" ry="7.4" fill="#deeeda" stroke="#0a1a0c" stroke-width="4.7"/>
<ellipse cx="1074.31" cy="408.69" rx="5" ry="4" fill="#bfddb7" opacity="0.75"/>
<text x="0" y="0" font-size="23.5" text-anchor="end" fill="#0b0b0b" font-weight="normal" font-style="normal" transform="translate(1047.9 418.09) scale(1.01 1)" class="h" >GND</text>
<rect x="1150.51" y="387.3" width="17.7" height="14.7" rx="2" fill="#f1eef2" stroke="none" stroke-width="0" opacity="0.85"/>
<rect x="1153.51" y="390.3" width="11.7" height="8.7" rx="1.2" fill="#2c439e" stroke="none" stroke-width="0" />
<text x="0" y="0" font-size="23.5" text-anchor="end" fill="#0b0b0b" font-weight="normal" font-style="normal" transform="translate(1149.51 404) scale(1.01 1)" class="h" >23</text>
<rect x="1189.9" y="399.07" width="34.17" height="21.92" rx="4" fill="#d6d6bd" filter="url(#hb2)"/>
<text x="0" y="0" font-size="23.5" text-anchor="start" fill="#0b0b0b" font-weight="normal" font-style="normal" transform="translate(1192.4 418.5) scale(1.01 1)" class="h" >X8</text>
<line x1="1086.31" y1="437.78" x2="1125.11" y2="437.78" stroke="#0a1a0c" stroke-width="4.3" stroke-linecap="butt"/>
<rect x="1115.11" y="435.63" width="61" height="4.3" fill="url(#gpl)"/>
<rect x="1063.4" y="426.88" width="21.8" height="21.8" rx="7.4" ry="7.4" fill="#deeeda" stroke="#0a1a0c" stroke-width="4.7"/>
<ellipse cx="1074.31" cy="437.78" rx="5" ry="4" fill="#bfddb7" opacity="0.75"/>
<text x="0" y="0" font-size="23.5" text-anchor="end" fill="#0b0b0b" font-weight="normal" font-style="normal" transform="translate(1047.9 447.18) scale(1.01 1)" class="h" >GND</text>
<rect x="1150.51" y="416.38" width="17.7" height="14.7" rx="2" fill="#f1eef2" stroke="none" stroke-width="0" opacity="0.85"/>
<rect x="1153.51" y="419.38" width="11.7" height="8.7" rx="1.2" fill="#2c439e" stroke="none" stroke-width="0" />
<text x="0" y="0" font-size="23.5" text-anchor="end" fill="#0b0b0b" font-weight="normal" font-style="normal" transform="translate(1149.51 433.08) scale(1.01 1)" class="h" >22</text>
<rect x="1189.9" y="428.16" width="34.17" height="21.92" rx="4" fill="#d6d6bd" filter="url(#hb2)"/>
<text x="0" y="0" font-size="23.5" text-anchor="start" fill="#0b0b0b" font-weight="normal" font-style="normal" transform="translate(1192.4 447.58) scale(1.01 1)" class="h" >X9</text>
<line x1="1086.31" y1="466.87" x2="1125.11" y2="466.87" stroke="#0a1a0c" stroke-width="4.3" stroke-linecap="butt"/>
<rect x="1115.11" y="464.72" width="61" height="4.3" fill="url(#gpl)"/>
<rect x="1063.4" y="455.97" width="21.8" height="21.8" rx="7.4" ry="7.4" fill="#deeeda" stroke="#0a1a0c" stroke-width="4.7"/>
<ellipse cx="1074.31" cy="466.87" rx="5" ry="4" fill="#bfddb7" opacity="0.75"/>
<text x="0" y="0" font-size="23.5" text-anchor="end" fill="#0b0b0b" font-weight="normal" font-style="normal" transform="translate(1047.9 476.26) scale(1.01 1)" class="h" >GND</text>
<rect x="1150.51" y="445.47" width="17.7" height="14.7" rx="2" fill="#f1eef2" stroke="none" stroke-width="0" opacity="0.85"/>
<rect x="1153.51" y="448.47" width="11.7" height="8.7" rx="1.2" fill="#2c439e" stroke="none" stroke-width="0" />
<text x="0" y="0" font-size="23.5" text-anchor="end" fill="#0b0b0b" font-weight="normal" font-style="normal" transform="translate(1149.51 462.17) scale(1.01 1)" class="h" >21</text>
<rect x="1189.9" y="457.25" width="47.43" height="21.92" rx="4" fill="#d6d6bd" filter="url(#hb2)"/>
<text x="0" y="0" font-size="23.5" text-anchor="start" fill="#0b0b0b" font-weight="normal" font-style="normal" transform="translate(1192.4 476.67) scale(1.01 1)" class="h" >X10</text>
<line x1="1086.31" y1="495.95" x2="1125.11" y2="495.95" stroke="#0a1a0c" stroke-width="4.3" stroke-linecap="butt"/>
<rect x="1115.11" y="493.8" width="61" height="4.3" fill="url(#gpl)"/>
<rect x="1063.4" y="485.05" width="21.8" height="21.8" rx="7.4" ry="7.4" fill="#deeeda" stroke="#0a1a0c" stroke-width="4.7"/>
<ellipse cx="1074.31" cy="495.95" rx="5" ry="4" fill="#bfddb7" opacity="0.75"/>
<text x="0" y="0" font-size="23.5" text-anchor="end" fill="#0b0b0b" font-weight="normal" font-style="normal" transform="translate(1047.9 505.35) scale(1.01 1)" class="h" >GND</text>
<rect x="1150.51" y="474.55" width="17.7" height="14.7" rx="2" fill="#f1eef2" stroke="none" stroke-width="0" opacity="0.85"/>
<rect x="1153.51" y="477.55" width="11.7" height="8.7" rx="1.2" fill="#2c439e" stroke="none" stroke-width="0" />
<text x="0" y="0" font-size="23.5" text-anchor="end" fill="#0b0b0b" font-weight="normal" font-style="normal" transform="translate(1149.51 491.25) scale(1.01 1)" class="h" >20</text>
<rect x="1189.9" y="486.33" width="47.43" height="21.92" rx="4" fill="#d6d6bd" filter="url(#hb2)"/>
<text x="0" y="0" font-size="23.5" text-anchor="start" fill="#0b0b0b" font-weight="normal" font-style="normal" transform="translate(1192.4 505.75) scale(1.01 1)" class="h" >X11</text>
<line x1="1086.31" y1="525.03" x2="1125.11" y2="525.03" stroke="#0a1a0c" stroke-width="4.3" stroke-linecap="butt"/>
<rect x="1115.11" y="522.88" width="61" height="4.3" fill="url(#gpl)"/>
<rect x="1063.4" y="514.13" width="21.8" height="21.8" rx="7.4" ry="7.4" fill="#deeeda" stroke="#0a1a0c" stroke-width="4.7"/>
<ellipse cx="1074.31" cy="525.03" rx="5" ry="4" fill="#bfddb7" opacity="0.75"/>
<text x="0" y="0" font-size="23.5" text-anchor="end" fill="#0b0b0b" font-weight="normal" font-style="normal" transform="translate(1047.9 534.43) scale(1.01 1)" class="h" >GND</text>
<rect x="1150.51" y="503.63" width="17.7" height="14.7" rx="2" fill="#f1eef2" stroke="none" stroke-width="0" opacity="0.85"/>
<rect x="1153.51" y="506.63" width="11.7" height="8.7" rx="1.2" fill="#2c439e" stroke="none" stroke-width="0" />
<text x="0" y="0" font-size="23.5" text-anchor="end" fill="#0b0b0b" font-weight="normal" font-style="normal" transform="translate(1149.51 520.33) scale(1.01 1)" class="h" >19</text>
<rect x="1189.9" y="515.41" width="47.43" height="21.92" rx="4" fill="#d6d6bd" filter="url(#hb2)"/>
<text x="0" y="0" font-size="23.5" text-anchor="start" fill="#0b0b0b" font-weight="normal" font-style="normal" transform="translate(1192.4 534.83) scale(1.01 1)" class="h" >X12</text>
<line x1="1086.31" y1="554.12" x2="1125.11" y2="554.12" stroke="#0a1a0c" stroke-width="4.3" stroke-linecap="butt"/>
<rect x="1115.11" y="551.97" width="61" height="4.3" fill="url(#gpl)"/>
<rect x="1063.4" y="543.22" width="21.8" height="21.8" rx="7.4" ry="7.4" fill="#deeeda" stroke="#0a1a0c" stroke-width="4.7"/>
<ellipse cx="1074.31" cy="554.12" rx="5" ry="4" fill="#bfddb7" opacity="0.75"/>
<text x="0" y="0" font-size="23.5" text-anchor="end" fill="#0b0b0b" font-weight="normal" font-style="normal" transform="translate(1047.9 563.52) scale(1.01 1)" class="h" >GND</text>
<rect x="1150.51" y="532.72" width="17.7" height="14.7" rx="2" fill="#f1eef2" stroke="none" stroke-width="0" opacity="0.85"/>
<rect x="1153.51" y="535.72" width="11.7" height="8.7" rx="1.2" fill="#2c439e" stroke="none" stroke-width="0" />
<text x="0" y="0" font-size="23.5" text-anchor="end" fill="#0b0b0b" font-weight="normal" font-style="normal" transform="translate(1149.51 549.42) scale(1.01 1)" class="h" >18</text>
<rect x="1189.9" y="544.5" width="47.43" height="21.92" rx="4" fill="#d6d6bd" filter="url(#hb2)"/>
<text x="0" y="0" font-size="23.5" text-anchor="start" fill="#0b0b0b" font-weight="normal" font-style="normal" transform="translate(1192.4 563.92) scale(1.01 1)" class="h" >X13</text>
<line x1="1086.31" y1="583.21" x2="1125.11" y2="583.21" stroke="#0a1a0c" stroke-width="4.3" stroke-linecap="butt"/>
<rect x="1115.11" y="581.06" width="61" height="4.3" fill="url(#gpl)"/>
<rect x="1063.4" y="572.31" width="21.8" height="21.8" rx="7.4" ry="7.4" fill="#deeeda" stroke="#0a1a0c" stroke-width="4.7"/>
<ellipse cx="1074.31" cy="583.21" rx="5" ry="4" fill="#bfddb7" opacity="0.75"/>
<text x="0" y="0" font-size="23.5" text-anchor="end" fill="#0b0b0b" font-weight="normal" font-style="normal" transform="translate(1047.9 592.61) scale(1.01 1)" class="h" >GND</text>
<rect x="1150.51" y="561.81" width="17.7" height="14.7" rx="2" fill="#f1eef2" stroke="none" stroke-width="0" opacity="0.85"/>
<rect x="1153.51" y="564.81" width="11.7" height="8.7" rx="1.2" fill="#2c439e" stroke="none" stroke-width="0" />
<text x="0" y="0" font-size="23.5" text-anchor="end" fill="#0b0b0b" font-weight="normal" font-style="normal" transform="translate(1149.51 578.5) scale(1.01 1)" class="h" >17</text>
<rect x="1189.9" y="573.59" width="47.43" height="21.92" rx="4" fill="#d6d6bd" filter="url(#hb2)"/>
<text x="0" y="0" font-size="23.5" text-anchor="start" fill="#0b0b0b" font-weight="normal" font-style="normal" transform="translate(1192.4 593) scale(1.01 1)" class="h" >X14</text>
<line x1="1086.31" y1="612.29" x2="1125.11" y2="612.29" stroke="#0a1a0c" stroke-width="4.3" stroke-linecap="butt"/>
<rect x="1115.11" y="610.14" width="61" height="4.3" fill="url(#gpl)"/>
<rect x="1063.4" y="601.39" width="21.8" height="21.8" rx="7.4" ry="7.4" fill="#deeeda" stroke="#0a1a0c" stroke-width="4.7"/>
<ellipse cx="1074.31" cy="612.29" rx="5" ry="4" fill="#bfddb7" opacity="0.75"/>
<text x="0" y="0" font-size="23.5" text-anchor="end" fill="#0b0b0b" font-weight="normal" font-style="normal" transform="translate(1047.9 621.69) scale(1.01 1)" class="h" >GND</text>
<rect x="1150.51" y="590.89" width="17.7" height="14.7" rx="2" fill="#f1eef2" stroke="none" stroke-width="0" opacity="0.85"/>
<rect x="1153.51" y="593.89" width="11.7" height="8.7" rx="1.2" fill="#2c439e" stroke="none" stroke-width="0" />
<text x="0" y="0" font-size="23.5" text-anchor="end" fill="#0b0b0b" font-weight="normal" font-style="normal" transform="translate(1149.51 607.59) scale(1.01 1)" class="h" >16</text>
<rect x="1189.9" y="602.67" width="47.43" height="21.92" rx="4" fill="#d6d6bd" filter="url(#hb2)"/>
<text x="0" y="0" font-size="23.5" text-anchor="start" fill="#0b0b0b" font-weight="normal" font-style="normal" transform="translate(1192.4 622.09) scale(1.01 1)" class="h" >X15</text>
<line x1="1086.31" y1="670.46" x2="1125.11" y2="670.46" stroke="#0a1a0c" stroke-width="4.3" stroke-linecap="butt"/>
<rect x="1115.11" y="668.31" width="61" height="4.3" fill="url(#gpl)"/>
<rect x="1063.4" y="659.56" width="21.8" height="21.8" rx="7.4" ry="7.4" fill="#deeeda" stroke="#0a1a0c" stroke-width="4.7"/>
<ellipse cx="1074.31" cy="670.46" rx="5" ry="4" fill="#bfddb7" opacity="0.75"/>
<text x="0" y="0" font-size="23.5" text-anchor="end" fill="#0b0b0b" font-weight="normal" font-style="normal" transform="translate(1047.9 679.86) scale(1.01 1)" class="h" >S0</text>
<rect x="1150.51" y="649.06" width="17.7" height="14.7" rx="2" fill="#f1eef2" stroke="none" stroke-width="0" opacity="0.85"/>
<rect x="1153.51" y="652.06" width="11.7" height="8.7" rx="1.2" fill="#2c439e" stroke="none" stroke-width="0" />
<text x="0" y="0" font-size="23.5" text-anchor="end" fill="#0b0b0b" font-weight="normal" font-style="normal" transform="translate(1149.51 665.76) scale(1.01 1)" class="h" >10</text>
<rect x="1189.9" y="660.84" width="20.91" height="21.92" rx="4" fill="#d6d6bd" filter="url(#hb2)"/>
<text x="0" y="0" font-size="23.5" text-anchor="start" fill="#0b0b0b" font-weight="normal" font-style="normal" transform="translate(1192.4 680.26) scale(1.01 1)" class="h" >A</text>
<line x1="1086.31" y1="699.54" x2="1125.11" y2="699.54" stroke="#0a1a0c" stroke-width="4.3" stroke-linecap="butt"/>
<rect x="1115.11" y="697.39" width="61" height="4.3" fill="url(#gpl)"/>
<rect x="1063.4" y="688.64" width="21.8" height="21.8" rx="7.4" ry="7.4" fill="#deeeda" stroke="#0a1a0c" stroke-width="4.7"/>
<ellipse cx="1074.31" cy="699.54" rx="5" ry="4" fill="#bfddb7" opacity="0.75"/>
<text x="0" y="0" font-size="23.5" text-anchor="end" fill="#0b0b0b" font-weight="normal" font-style="normal" transform="translate(1047.9 708.94) scale(1.01 1)" class="h" >S1</text>
<rect x="1150.51" y="678.14" width="17.7" height="14.7" rx="2" fill="#f1eef2" stroke="none" stroke-width="0" opacity="0.85"/>
<rect x="1153.51" y="681.14" width="11.7" height="8.7" rx="1.2" fill="#2c439e" stroke="none" stroke-width="0" />
<text x="0" y="0" font-size="23.5" text-anchor="end" fill="#0b0b0b" font-weight="normal" font-style="normal" transform="translate(1149.51 694.84) scale(1.01 1)" class="h" >11</text>
<rect x="1189.9" y="689.92" width="20.91" height="21.92" rx="4" fill="#d6d6bd" filter="url(#hb2)"/>
<text x="0" y="0" font-size="23.5" text-anchor="start" fill="#0b0b0b" font-weight="normal" font-style="normal" transform="translate(1192.4 709.34) scale(1.01 1)" class="h" >B</text>
<line x1="1086.31" y1="728.63" x2="1125.11" y2="728.63" stroke="#0a1a0c" stroke-width="4.3" stroke-linecap="butt"/>
<rect x="1115.11" y="726.48" width="61" height="4.3" fill="url(#gpl)"/>
<rect x="1063.4" y="717.73" width="21.8" height="21.8" rx="7.4" ry="7.4" fill="#deeeda" stroke="#0a1a0c" stroke-width="4.7"/>
<ellipse cx="1074.31" cy="728.63" rx="5" ry="4" fill="#bfddb7" opacity="0.75"/>
<text x="0" y="0" font-size="23.5" text-anchor="end" fill="#0b0b0b" font-weight="normal" font-style="normal" transform="translate(1047.9 738.03) scale(1.01 1)" class="h" >S2</text>
<rect x="1150.51" y="707.23" width="17.7" height="14.7" rx="2" fill="#f1eef2" stroke="none" stroke-width="0" opacity="0.85"/>
<rect x="1153.51" y="710.23" width="11.7" height="8.7" rx="1.2" fill="#2c439e" stroke="none" stroke-width="0" />
<text x="0" y="0" font-size="23.5" text-anchor="end" fill="#0b0b0b" font-weight="normal" font-style="normal" transform="translate(1149.51 723.93) scale(1.01 1)" class="h" >14</text>
<rect x="1189.9" y="719.01" width="22.22" height="21.92" rx="4" fill="#d6d6bd" filter="url(#hb2)"/>
<text x="0" y="0" font-size="23.5" text-anchor="start" fill="#0b0b0b" font-weight="normal" font-style="normal" transform="translate(1192.4 738.43) scale(1.01 1)" class="h" >C</text>
<line x1="1086.31" y1="757.72" x2="1125.11" y2="757.72" stroke="#0a1a0c" stroke-width="4.3" stroke-linecap="butt"/>
<rect x="1115.11" y="755.57" width="61" height="4.3" fill="url(#gpl)"/>
<rect x="1063.4" y="746.82" width="21.8" height="21.8" rx="7.4" ry="7.4" fill="#deeeda" stroke="#0a1a0c" stroke-width="4.7"/>
<ellipse cx="1074.31" cy="757.72" rx="5" ry="4" fill="#bfddb7" opacity="0.75"/>
<text x="0" y="0" font-size="23.5" text-anchor="end" fill="#0b0b0b" font-weight="normal" font-style="normal" transform="translate(1047.9 767.12) scale(1.01 1)" class="h" >S3</text>
<rect x="1150.51" y="736.32" width="17.7" height="14.7" rx="2" fill="#f1eef2" stroke="none" stroke-width="0" opacity="0.85"/>
<rect x="1153.51" y="739.32" width="11.7" height="8.7" rx="1.2" fill="#2c439e" stroke="none" stroke-width="0" />
<text x="0" y="0" font-size="23.5" text-anchor="end" fill="#0b0b0b" font-weight="normal" font-style="normal" transform="translate(1149.51 753.01) scale(1.01 1)" class="h" >13</text>
<rect x="1189.9" y="748.1" width="22.22" height="21.92" rx="4" fill="#d6d6bd" filter="url(#hb2)"/>
<text x="0" y="0" font-size="23.5" text-anchor="start" fill="#0b0b0b" font-weight="normal" font-style="normal" transform="translate(1192.4 767.51) scale(1.01 1)" class="h" >D</text>
<line x1="1086.31" y1="815.88" x2="1125.11" y2="815.88" stroke="#0a1a0c" stroke-width="4.3" stroke-linecap="butt"/>
<rect x="1115.11" y="813.74" width="61" height="4.3" fill="url(#gpl)"/>
<rect x="1063.4" y="804.99" width="21.8" height="21.8" rx="7.4" ry="7.4" fill="#deeeda" stroke="#0a1a0c" stroke-width="4.7"/>
<ellipse cx="1074.31" cy="815.88" rx="5" ry="4" fill="#bfddb7" opacity="0.75"/>
<text x="0" y="0" font-size="23.5" text-anchor="end" fill="#0b0b0b" font-weight="normal" font-style="normal" transform="translate(1047.9 825.28) scale(1.01 1)" class="h" >GND</text>
<rect x="1150.51" y="794.49" width="17.7" height="14.7" rx="2" fill="#f1eef2" stroke="none" stroke-width="0" opacity="0.85"/>
<rect x="1153.51" y="797.49" width="11.7" height="8.7" rx="1.2" fill="#2c439e" stroke="none" stroke-width="0" />
<text x="0" y="0" font-size="23.5" text-anchor="end" fill="#0b0b0b" font-weight="normal" font-style="normal" transform="translate(1149.51 811.18) scale(1.01 1)" class="h" >15</text>
<rect x="1189.9" y="806.26" width="38.13" height="21.92" rx="4" fill="#d6d6bd" filter="url(#hb2)"/>
<text x="0" y="0" font-size="23.5" text-anchor="start" fill="#0b0b0b" font-weight="normal" font-style="normal" transform="translate(1192.4 825.68) scale(1.01 1)" class="h" >EN</text>
<line x1="1192.7" y1="803.68" x2="1225.7" y2="803.68" stroke="#0b0b0b" stroke-width="1.7" stroke-linecap="butt"/>
<rect x="1379.18" y="166.4" width="20.91" height="21.92" rx="4" fill="#d6d6bd" filter="url(#hb2)"/>
<text x="0" y="0" font-size="23.5" text-anchor="end" fill="#0b0b0b" font-weight="normal" font-style="normal" transform="translate(1397.59 185.81) scale(1.01 1)" class="h" >X</text>
<rect x="1410.79" y="173.86" width="59.6" height="4.3" fill="url(#gpr)"/>
<line x1="1467.99" y1="173.86" x2="1467.99" y2="212.01" stroke="#0a1a0c" stroke-width="4.3" stroke-linecap="butt"/>
<rect x="1457.09" y="212.51" width="21.8" height="21.8" rx="7.4" ry="7.4" fill="#deeeda" stroke="#0a1a0c" stroke-width="4.7"/>
<ellipse cx="1467.99" cy="223.41" rx="5" ry="4" fill="#bfddb7" opacity="0.75"/>
<rect x="1420.38" y="154.71" width="16" height="14.4" rx="2" fill="#f1eef2" stroke="none" stroke-width="0" opacity="0.85"/>
<rect x="1423.38" y="157.71" width="10" height="8.4" rx="1.2" fill="#2c439e" stroke="none" stroke-width="0" />
<text x="0" y="0" font-size="23.5" text-anchor="start" fill="#0b0b0b" font-weight="normal" font-style="normal" transform="translate(1441.79 171.31) scale(1.01 1)" class="h" >1</text>
<text x="0" y="0" font-size="23.5" text-anchor="end" fill="#0b0b0b" font-weight="normal" font-style="normal" transform="translate(1477.59 249.91) rotate(-90) scale(1.03 1)" class="h" >Mux_Broche</text>
<text x="1058.2" y="137.23" font-size="36.3" text-anchor="start" fill="#0b0b0b" font-weight="normal" font-style="normal" >SEAT BELT BUCKLE SENSOR</text>
<text x="0" y="0" font-size="23.5" text-anchor="start" fill="#0b0b0b" font-weight="normal" font-style="normal" transform="translate(1176.51 871.27) scale(1.01 1)" class="h" >4067</text>
<rect x="1788.06" y="150.01" width="57" height="465.27" rx="0" fill="#f8efed" stroke="none" stroke-width="0" opacity="0.9" filter="url(#hb)"/>
<rect x="1788.06" y="644.46" width="57" height="116.25" rx="0" fill="#f8efed" stroke="none" stroke-width="0" opacity="0.9" filter="url(#hb)"/>
<rect x="1788.06" y="789.88" width="57" height="29" rx="0" fill="#f8efed" stroke="none" stroke-width="0" opacity="0.9" filter="url(#hb)"/>
<rect x="2079.74" y="150.01" width="57" height="29" rx="0" fill="#f8efed" stroke="none" stroke-width="0" opacity="0.9" filter="url(#hb)"/>
<rect x="1843.06" y="143.93" width="238.68" height="704.04" fill="none" stroke="#f3ebe6" stroke-width="2.4" opacity="0.8"/>
<rect x="1846.06" y="146.93" width="232.68" height="698.04" rx="0" fill="#cccdb0" stroke="#400908" stroke-width="4" />
<rect x="1849.26" y="150.13" width="226.28" height="691.64" fill="none" stroke="#f3e6d6" stroke-width="2.4" opacity="0.85"/>
<rect x="1819.46" y="154.61" width="17.7" height="14.7" rx="2" fill="#f1eef2" stroke="none" stroke-width="0" opacity="0.85"/>
<rect x="1822.46" y="157.61" width="11.7" height="8.7" rx="1.2" fill="#2c439e" stroke="none" stroke-width="0" />
<text x="0" y="0" font-size="23.5" text-anchor="end" fill="#0b0b0b" font-weight="normal" font-style="normal" transform="translate(1818.46 171.31) scale(1.01 1)" class="h" >9</text>
<rect x="1858.86" y="166.4" width="34.17" height="21.92" rx="4" fill="#d6d6bd" filter="url(#hb2)"/>
<text x="0" y="0" font-size="23.5" text-anchor="start" fill="#0b0b0b" font-weight="normal" font-style="normal" transform="translate(1861.36 185.81) scale(1.01 1)" class="h" >X0</text>
<line x1="1755.26" y1="205.1" x2="1794.06" y2="205.1" stroke="#0a1a0c" stroke-width="4.3" stroke-linecap="butt"/>
<rect x="1784.06" y="202.95" width="61" height="4.3" fill="url(#gpl)"/>
<rect x="1732.36" y="194.2" width="21.8" height="21.8" rx="7.4" ry="7.4" fill="#deeeda" stroke="#0a1a0c" stroke-width="4.7"/>
<ellipse cx="1743.26" cy="205.1" rx="5" ry="4" fill="#bfddb7" opacity="0.75"/>
<text x="0" y="0" font-size="23.5" text-anchor="end" fill="#0b0b0b" font-weight="normal" font-style="normal" transform="translate(1716.86 214.5) scale(1.01 1)" class="h" >GND</text>
<rect x="1819.46" y="183.7" width="17.7" height="14.7" rx="2" fill="#f1eef2" stroke="none" stroke-width="0" opacity="0.85"/>
<rect x="1822.46" y="186.7" width="11.7" height="8.7" rx="1.2" fill="#2c439e" stroke="none" stroke-width="0" />
<text x="0" y="0" font-size="23.5" text-anchor="end" fill="#0b0b0b" font-weight="normal" font-style="normal" transform="translate(1818.46 200.4) scale(1.01 1)" class="h" >8</text>
<rect x="1858.86" y="195.48" width="34.17" height="21.92" rx="4" fill="#d6d6bd" filter="url(#hb2)"/>
<text x="0" y="0" font-size="23.5" text-anchor="start" fill="#0b0b0b" font-weight="normal" font-style="normal" transform="translate(1861.36 214.9) scale(1.01 1)" class="h" >X1</text>
<line x1="1755.26" y1="234.19" x2="1794.06" y2="234.19" stroke="#0a1a0c" stroke-width="4.3" stroke-linecap="butt"/>
<rect x="1784.06" y="232.03" width="61" height="4.3" fill="url(#gpl)"/>
<rect x="1732.36" y="223.28" width="21.8" height="21.8" rx="7.4" ry="7.4" fill="#deeeda" stroke="#0a1a0c" stroke-width="4.7"/>
<ellipse cx="1743.26" cy="234.19" rx="5" ry="4" fill="#bfddb7" opacity="0.75"/>
<text x="0" y="0" font-size="23.5" text-anchor="end" fill="#0b0b0b" font-weight="normal" font-style="normal" transform="translate(1716.86 243.59) scale(1.01 1)" class="h" >GND</text>
<rect x="1819.46" y="212.78" width="17.7" height="14.7" rx="2" fill="#f1eef2" stroke="none" stroke-width="0" opacity="0.85"/>
<rect x="1822.46" y="215.78" width="11.7" height="8.7" rx="1.2" fill="#2c439e" stroke="none" stroke-width="0" />
<text x="0" y="0" font-size="23.5" text-anchor="end" fill="#0b0b0b" font-weight="normal" font-style="normal" transform="translate(1818.46 229.49) scale(1.01 1)" class="h" >7</text>
<rect x="1858.86" y="224.57" width="34.17" height="21.92" rx="4" fill="#d6d6bd" filter="url(#hb2)"/>
<text x="0" y="0" font-size="23.5" text-anchor="start" fill="#0b0b0b" font-weight="normal" font-style="normal" transform="translate(1861.36 243.99) scale(1.01 1)" class="h" >X2</text>
<line x1="1755.26" y1="263.27" x2="1794.06" y2="263.27" stroke="#0a1a0c" stroke-width="4.3" stroke-linecap="butt"/>
<rect x="1784.06" y="261.12" width="61" height="4.3" fill="url(#gpl)"/>
<rect x="1732.36" y="252.37" width="21.8" height="21.8" rx="7.4" ry="7.4" fill="#deeeda" stroke="#0a1a0c" stroke-width="4.7"/>
<ellipse cx="1743.26" cy="263.27" rx="5" ry="4" fill="#bfddb7" opacity="0.75"/>
<text x="0" y="0" font-size="23.5" text-anchor="end" fill="#0b0b0b" font-weight="normal" font-style="normal" transform="translate(1716.86 272.67) scale(1.01 1)" class="h" >GND</text>
<rect x="1819.46" y="241.87" width="17.7" height="14.7" rx="2" fill="#f1eef2" stroke="none" stroke-width="0" opacity="0.85"/>
<rect x="1822.46" y="244.87" width="11.7" height="8.7" rx="1.2" fill="#2c439e" stroke="none" stroke-width="0" />
<text x="0" y="0" font-size="23.5" text-anchor="end" fill="#0b0b0b" font-weight="normal" font-style="normal" transform="translate(1818.46 258.57) scale(1.01 1)" class="h" >6</text>
<rect x="1858.86" y="253.65" width="34.17" height="21.92" rx="4" fill="#d6d6bd" filter="url(#hb2)"/>
<text x="0" y="0" font-size="23.5" text-anchor="start" fill="#0b0b0b" font-weight="normal" font-style="normal" transform="translate(1861.36 273.07) scale(1.01 1)" class="h" >X3</text>
<line x1="1755.26" y1="292.36" x2="1794.06" y2="292.36" stroke="#0a1a0c" stroke-width="4.3" stroke-linecap="butt"/>
<rect x="1784.06" y="290.21" width="61" height="4.3" fill="url(#gpl)"/>
<rect x="1732.36" y="281.46" width="21.8" height="21.8" rx="7.4" ry="7.4" fill="#deeeda" stroke="#0a1a0c" stroke-width="4.7"/>
<ellipse cx="1743.26" cy="292.36" rx="5" ry="4" fill="#bfddb7" opacity="0.75"/>
<text x="0" y="0" font-size="23.5" text-anchor="end" fill="#0b0b0b" font-weight="normal" font-style="normal" transform="translate(1716.86 301.75) scale(1.01 1)" class="h" >GND</text>
<rect x="1819.46" y="270.96" width="17.7" height="14.7" rx="2" fill="#f1eef2" stroke="none" stroke-width="0" opacity="0.85"/>
<rect x="1822.46" y="273.96" width="11.7" height="8.7" rx="1.2" fill="#2c439e" stroke="none" stroke-width="0" />
<text x="0" y="0" font-size="23.5" text-anchor="end" fill="#0b0b0b" font-weight="normal" font-style="normal" transform="translate(1818.46 287.66) scale(1.01 1)" class="h" >5</text>
<rect x="1858.86" y="282.74" width="34.17" height="21.92" rx="4" fill="#d6d6bd" filter="url(#hb2)"/>
<text x="0" y="0" font-size="23.5" text-anchor="start" fill="#0b0b0b" font-weight="normal" font-style="normal" transform="translate(1861.36 302.16) scale(1.01 1)" class="h" >X4</text>
<line x1="1755.26" y1="321.44" x2="1794.06" y2="321.44" stroke="#0a1a0c" stroke-width="4.3" stroke-linecap="butt"/>
<rect x="1784.06" y="319.29" width="61" height="4.3" fill="url(#gpl)"/>
<rect x="1732.36" y="310.54" width="21.8" height="21.8" rx="7.4" ry="7.4" fill="#deeeda" stroke="#0a1a0c" stroke-width="4.7"/>
<ellipse cx="1743.26" cy="321.44" rx="5" ry="4" fill="#bfddb7" opacity="0.75"/>
<text x="0" y="0" font-size="23.5" text-anchor="end" fill="#0b0b0b" font-weight="normal" font-style="normal" transform="translate(1716.86 330.84) scale(1.01 1)" class="h" >GND</text>
<rect x="1819.46" y="300.04" width="17.7" height="14.7" rx="2" fill="#f1eef2" stroke="none" stroke-width="0" opacity="0.85"/>
<rect x="1822.46" y="303.04" width="11.7" height="8.7" rx="1.2" fill="#2c439e" stroke="none" stroke-width="0" />
<text x="0" y="0" font-size="23.5" text-anchor="end" fill="#0b0b0b" font-weight="normal" font-style="normal" transform="translate(1818.46 316.74) scale(1.01 1)" class="h" >4</text>
<rect x="1858.86" y="311.82" width="34.17" height="21.92" rx="4" fill="#d6d6bd" filter="url(#hb2)"/>
<text x="0" y="0" font-size="23.5" text-anchor="start" fill="#0b0b0b" font-weight="normal" font-style="normal" transform="translate(1861.36 331.24) scale(1.01 1)" class="h" >X5</text>
<line x1="1755.26" y1="350.52" x2="1794.06" y2="350.52" stroke="#0a1a0c" stroke-width="4.3" stroke-linecap="butt"/>
<rect x="1784.06" y="348.38" width="61" height="4.3" fill="url(#gpl)"/>
<rect x="1732.36" y="339.62" width="21.8" height="21.8" rx="7.4" ry="7.4" fill="#deeeda" stroke="#0a1a0c" stroke-width="4.7"/>
<ellipse cx="1743.26" cy="350.52" rx="5" ry="4" fill="#bfddb7" opacity="0.75"/>
<text x="0" y="0" font-size="23.5" text-anchor="end" fill="#0b0b0b" font-weight="normal" font-style="normal" transform="translate(1716.86 359.92) scale(1.01 1)" class="h" >GND</text>
<rect x="1819.46" y="329.12" width="17.7" height="14.7" rx="2" fill="#f1eef2" stroke="none" stroke-width="0" opacity="0.85"/>
<rect x="1822.46" y="332.12" width="11.7" height="8.7" rx="1.2" fill="#2c439e" stroke="none" stroke-width="0" />
<text x="0" y="0" font-size="23.5" text-anchor="end" fill="#0b0b0b" font-weight="normal" font-style="normal" transform="translate(1818.46 345.82) scale(1.01 1)" class="h" >3</text>
<rect x="1858.86" y="340.9" width="34.17" height="21.92" rx="4" fill="#d6d6bd" filter="url(#hb2)"/>
<text x="0" y="0" font-size="23.5" text-anchor="start" fill="#0b0b0b" font-weight="normal" font-style="normal" transform="translate(1861.36 360.32) scale(1.01 1)" class="h" >X6</text>
<line x1="1755.26" y1="379.61" x2="1794.06" y2="379.61" stroke="#0a1a0c" stroke-width="4.3" stroke-linecap="butt"/>
<rect x="1784.06" y="377.46" width="61" height="4.3" fill="url(#gpl)"/>
<rect x="1732.36" y="368.71" width="21.8" height="21.8" rx="7.4" ry="7.4" fill="#deeeda" stroke="#0a1a0c" stroke-width="4.7"/>
<ellipse cx="1743.26" cy="379.61" rx="5" ry="4" fill="#bfddb7" opacity="0.75"/>
<text x="0" y="0" font-size="23.5" text-anchor="end" fill="#0b0b0b" font-weight="normal" font-style="normal" transform="translate(1716.86 389.01) scale(1.01 1)" class="h" >GND</text>
<rect x="1819.46" y="358.21" width="17.7" height="14.7" rx="2" fill="#f1eef2" stroke="none" stroke-width="0" opacity="0.85"/>
<rect x="1822.46" y="361.21" width="11.7" height="8.7" rx="1.2" fill="#2c439e" stroke="none" stroke-width="0" />
<text x="0" y="0" font-size="23.5" text-anchor="end" fill="#0b0b0b" font-weight="normal" font-style="normal" transform="translate(1818.46 374.91) scale(1.01 1)" class="h" >2</text>
<rect x="1858.86" y="369.99" width="34.17" height="21.92" rx="4" fill="#d6d6bd" filter="url(#hb2)"/>
<text x="0" y="0" font-size="23.5" text-anchor="start" fill="#0b0b0b" font-weight="normal" font-style="normal" transform="translate(1861.36 389.41) scale(1.01 1)" class="h" >X7</text>
<line x1="1755.26" y1="408.69" x2="1794.06" y2="408.69" stroke="#0a1a0c" stroke-width="4.3" stroke-linecap="butt"/>
<rect x="1784.06" y="406.55" width="61" height="4.3" fill="url(#gpl)"/>
<rect x="1732.36" y="397.8" width="21.8" height="21.8" rx="7.4" ry="7.4" fill="#deeeda" stroke="#0a1a0c" stroke-width="4.7"/>
<ellipse cx="1743.26" cy="408.69" rx="5" ry="4" fill="#bfddb7" opacity="0.75"/>
<text x="0" y="0" font-size="23.5" text-anchor="end" fill="#0b0b0b" font-weight="normal" font-style="normal" transform="translate(1716.86 418.09) scale(1.01 1)" class="h" >GND</text>
<rect x="1819.46" y="387.3" width="17.7" height="14.7" rx="2" fill="#f1eef2" stroke="none" stroke-width="0" opacity="0.85"/>
<rect x="1822.46" y="390.3" width="11.7" height="8.7" rx="1.2" fill="#2c439e" stroke="none" stroke-width="0" />
<text x="0" y="0" font-size="23.5" text-anchor="end" fill="#0b0b0b" font-weight="normal" font-style="normal" transform="translate(1818.46 404) scale(1.01 1)" class="h" >23</text>
<rect x="1858.86" y="399.07" width="34.17" height="21.92" rx="4" fill="#d6d6bd" filter="url(#hb2)"/>
<text x="0" y="0" font-size="23.5" text-anchor="start" fill="#0b0b0b" font-weight="normal" font-style="normal" transform="translate(1861.36 418.5) scale(1.01 1)" class="h" >X8</text>
<line x1="1755.26" y1="437.78" x2="1794.06" y2="437.78" stroke="#0a1a0c" stroke-width="4.3" stroke-linecap="butt"/>
<rect x="1784.06" y="435.63" width="61" height="4.3" fill="url(#gpl)"/>
<rect x="1732.36" y="426.88" width="21.8" height="21.8" rx="7.4" ry="7.4" fill="#deeeda" stroke="#0a1a0c" stroke-width="4.7"/>
<ellipse cx="1743.26" cy="437.78" rx="5" ry="4" fill="#bfddb7" opacity="0.75"/>
<text x="0" y="0" font-size="23.5" text-anchor="end" fill="#0b0b0b" font-weight="normal" font-style="normal" transform="translate(1716.86 447.18) scale(1.01 1)" class="h" >GND</text>
<rect x="1819.46" y="416.38" width="17.7" height="14.7" rx="2" fill="#f1eef2" stroke="none" stroke-width="0" opacity="0.85"/>
<rect x="1822.46" y="419.38" width="11.7" height="8.7" rx="1.2" fill="#2c439e" stroke="none" stroke-width="0" />
<text x="0" y="0" font-size="23.5" text-anchor="end" fill="#0b0b0b" font-weight="normal" font-style="normal" transform="translate(1818.46 433.08) scale(1.01 1)" class="h" >22</text>
<rect x="1858.86" y="428.16" width="34.17" height="21.92" rx="4" fill="#d6d6bd" filter="url(#hb2)"/>
<text x="0" y="0" font-size="23.5" text-anchor="start" fill="#0b0b0b" font-weight="normal" font-style="normal" transform="translate(1861.36 447.58) scale(1.01 1)" class="h" >X9</text>
<line x1="1755.26" y1="466.87" x2="1794.06" y2="466.87" stroke="#0a1a0c" stroke-width="4.3" stroke-linecap="butt"/>
<rect x="1784.06" y="464.72" width="61" height="4.3" fill="url(#gpl)"/>
<rect x="1732.36" y="455.97" width="21.8" height="21.8" rx="7.4" ry="7.4" fill="#deeeda" stroke="#0a1a0c" stroke-width="4.7"/>
<ellipse cx="1743.26" cy="466.87" rx="5" ry="4" fill="#bfddb7" opacity="0.75"/>
<text x="0" y="0" font-size="23.5" text-anchor="end" fill="#0b0b0b" font-weight="normal" font-style="normal" transform="translate(1716.86 476.26) scale(1.01 1)" class="h" >GND</text>
<rect x="1819.46" y="445.47" width="17.7" height="14.7" rx="2" fill="#f1eef2" stroke="none" stroke-width="0" opacity="0.85"/>
<rect x="1822.46" y="448.47" width="11.7" height="8.7" rx="1.2" fill="#2c439e" stroke="none" stroke-width="0" />
<text x="0" y="0" font-size="23.5" text-anchor="end" fill="#0b0b0b" font-weight="normal" font-style="normal" transform="translate(1818.46 462.17) scale(1.01 1)" class="h" >21</text>
<rect x="1858.86" y="457.25" width="47.43" height="21.92" rx="4" fill="#d6d6bd" filter="url(#hb2)"/>
<text x="0" y="0" font-size="23.5" text-anchor="start" fill="#0b0b0b" font-weight="normal" font-style="normal" transform="translate(1861.36 476.67) scale(1.01 1)" class="h" >X10</text>
<line x1="1755.26" y1="495.95" x2="1794.06" y2="495.95" stroke="#0a1a0c" stroke-width="4.3" stroke-linecap="butt"/>
<rect x="1784.06" y="493.8" width="61" height="4.3" fill="url(#gpl)"/>
<rect x="1732.36" y="485.05" width="21.8" height="21.8" rx="7.4" ry="7.4" fill="#deeeda" stroke="#0a1a0c" stroke-width="4.7"/>
<ellipse cx="1743.26" cy="495.95" rx="5" ry="4" fill="#bfddb7" opacity="0.75"/>
<text x="0" y="0" font-size="23.5" text-anchor="end" fill="#0b0b0b" font-weight="normal" font-style="normal" transform="translate(1716.86 505.35) scale(1.01 1)" class="h" >GND</text>
<rect x="1819.46" y="474.55" width="17.7" height="14.7" rx="2" fill="#f1eef2" stroke="none" stroke-width="0" opacity="0.85"/>
<rect x="1822.46" y="477.55" width="11.7" height="8.7" rx="1.2" fill="#2c439e" stroke="none" stroke-width="0" />
<text x="0" y="0" font-size="23.5" text-anchor="end" fill="#0b0b0b" font-weight="normal" font-style="normal" transform="translate(1818.46 491.25) scale(1.01 1)" class="h" >20</text>
<rect x="1858.86" y="486.33" width="47.43" height="21.92" rx="4" fill="#d6d6bd" filter="url(#hb2)"/>
<text x="0" y="0" font-size="23.5" text-anchor="start" fill="#0b0b0b" font-weight="normal" font-style="normal" transform="translate(1861.36 505.75) scale(1.01 1)" class="h" >X11</text>
<line x1="1755.26" y1="525.03" x2="1794.06" y2="525.03" stroke="#0a1a0c" stroke-width="4.3" stroke-linecap="butt"/>
<rect x="1784.06" y="522.88" width="61" height="4.3" fill="url(#gpl)"/>
<rect x="1732.36" y="514.13" width="21.8" height="21.8" rx="7.4" ry="7.4" fill="#deeeda" stroke="#0a1a0c" stroke-width="4.7"/>
<ellipse cx="1743.26" cy="525.03" rx="5" ry="4" fill="#bfddb7" opacity="0.75"/>
<text x="0" y="0" font-size="23.5" text-anchor="end" fill="#0b0b0b" font-weight="normal" font-style="normal" transform="translate(1716.86 534.43) scale(1.01 1)" class="h" >GND</text>
<rect x="1819.46" y="503.63" width="17.7" height="14.7" rx="2" fill="#f1eef2" stroke="none" stroke-width="0" opacity="0.85"/>
<rect x="1822.46" y="506.63" width="11.7" height="8.7" rx="1.2" fill="#2c439e" stroke="none" stroke-width="0" />
<text x="0" y="0" font-size="23.5" text-anchor="end" fill="#0b0b0b" font-weight="normal" font-style="normal" transform="translate(1818.46 520.33) scale(1.01 1)" class="h" >19</text>
<rect x="1858.86" y="515.41" width="47.43" height="21.92" rx="4" fill="#d6d6bd" filter="url(#hb2)"/>
<text x="0" y="0" font-size="23.5" text-anchor="start" fill="#0b0b0b" font-weight="normal" font-style="normal" transform="translate(1861.36 534.83) scale(1.01 1)" class="h" >X12</text>
<line x1="1755.26" y1="554.12" x2="1794.06" y2="554.12" stroke="#0a1a0c" stroke-width="4.3" stroke-linecap="butt"/>
<rect x="1784.06" y="551.97" width="61" height="4.3" fill="url(#gpl)"/>
<rect x="1732.36" y="543.22" width="21.8" height="21.8" rx="7.4" ry="7.4" fill="#deeeda" stroke="#0a1a0c" stroke-width="4.7"/>
<ellipse cx="1743.26" cy="554.12" rx="5" ry="4" fill="#bfddb7" opacity="0.75"/>
<text x="0" y="0" font-size="23.5" text-anchor="end" fill="#0b0b0b" font-weight="normal" font-style="normal" transform="translate(1716.86 563.52) scale(1.01 1)" class="h" >GND</text>
<rect x="1819.46" y="532.72" width="17.7" height="14.7" rx="2" fill="#f1eef2" stroke="none" stroke-width="0" opacity="0.85"/>
<rect x="1822.46" y="535.72" width="11.7" height="8.7" rx="1.2" fill="#2c439e" stroke="none" stroke-width="0" />
<text x="0" y="0" font-size="23.5" text-anchor="end" fill="#0b0b0b" font-weight="normal" font-style="normal" transform="translate(1818.46 549.42) scale(1.01 1)" class="h" >18</text>
<rect x="1858.86" y="544.5" width="47.43" height="21.92" rx="4" fill="#d6d6bd" filter="url(#hb2)"/>
<text x="0" y="0" font-size="23.5" text-anchor="start" fill="#0b0b0b" font-weight="normal" font-style="normal" transform="translate(1861.36 563.92) scale(1.01 1)" class="h" >X13</text>
<line x1="1755.26" y1="583.21" x2="1794.06" y2="583.21" stroke="#0a1a0c" stroke-width="4.3" stroke-linecap="butt"/>
<rect x="1784.06" y="581.06" width="61" height="4.3" fill="url(#gpl)"/>
<rect x="1732.36" y="572.31" width="21.8" height="21.8" rx="7.4" ry="7.4" fill="#deeeda" stroke="#0a1a0c" stroke-width="4.7"/>
<ellipse cx="1743.26" cy="583.21" rx="5" ry="4" fill="#bfddb7" opacity="0.75"/>
<text x="0" y="0" font-size="23.5" text-anchor="end" fill="#0b0b0b" font-weight="normal" font-style="normal" transform="translate(1716.86 592.61) scale(1.01 1)" class="h" >GND</text>
<rect x="1819.46" y="561.81" width="17.7" height="14.7" rx="2" fill="#f1eef2" stroke="none" stroke-width="0" opacity="0.85"/>
<rect x="1822.46" y="564.81" width="11.7" height="8.7" rx="1.2" fill="#2c439e" stroke="none" stroke-width="0" />
<text x="0" y="0" font-size="23.5" text-anchor="end" fill="#0b0b0b" font-weight="normal" font-style="normal" transform="translate(1818.46 578.5) scale(1.01 1)" class="h" >17</text>
<rect x="1858.86" y="573.59" width="47.43" height="21.92" rx="4" fill="#d6d6bd" filter="url(#hb2)"/>
<text x="0" y="0" font-size="23.5" text-anchor="start" fill="#0b0b0b" font-weight="normal" font-style="normal" transform="translate(1861.36 593) scale(1.01 1)" class="h" >X14</text>
<line x1="1755.26" y1="612.29" x2="1794.06" y2="612.29" stroke="#0a1a0c" stroke-width="4.3" stroke-linecap="butt"/>
<rect x="1784.06" y="610.14" width="61" height="4.3" fill="url(#gpl)"/>
<rect x="1732.36" y="601.39" width="21.8" height="21.8" rx="7.4" ry="7.4" fill="#deeeda" stroke="#0a1a0c" stroke-width="4.7"/>
<ellipse cx="1743.26" cy="612.29" rx="5" ry="4" fill="#bfddb7" opacity="0.75"/>
<text x="0" y="0" font-size="23.5" text-anchor="end" fill="#0b0b0b" font-weight="normal" font-style="normal" transform="translate(1716.86 621.69) scale(1.01 1)" class="h" >GND</text>
<rect x="1819.46" y="590.89" width="17.7" height="14.7" rx="2" fill="#f1eef2" stroke="none" stroke-width="0" opacity="0.85"/>
<rect x="1822.46" y="593.89" width="11.7" height="8.7" rx="1.2" fill="#2c439e" stroke="none" stroke-width="0" />
<text x="0" y="0" font-size="23.5" text-anchor="end" fill="#0b0b0b" font-weight="normal" font-style="normal" transform="translate(1818.46 607.59) scale(1.01 1)" class="h" >16</text>
<rect x="1858.86" y="602.67" width="47.43" height="21.92" rx="4" fill="#d6d6bd" filter="url(#hb2)"/>
<text x="0" y="0" font-size="23.5" text-anchor="start" fill="#0b0b0b" font-weight="normal" font-style="normal" transform="translate(1861.36 622.09) scale(1.01 1)" class="h" >X15</text>
<line x1="1755.26" y1="670.46" x2="1794.06" y2="670.46" stroke="#0a1a0c" stroke-width="4.3" stroke-linecap="butt"/>
<rect x="1784.06" y="668.31" width="61" height="4.3" fill="url(#gpl)"/>
<rect x="1732.36" y="659.56" width="21.8" height="21.8" rx="7.4" ry="7.4" fill="#deeeda" stroke="#0a1a0c" stroke-width="4.7"/>
<ellipse cx="1743.26" cy="670.46" rx="5" ry="4" fill="#bfddb7" opacity="0.75"/>
<text x="0" y="0" font-size="23.5" text-anchor="end" fill="#0b0b0b" font-weight="normal" font-style="normal" transform="translate(1716.86 679.86) scale(1.01 1)" class="h" >S0</text>
<rect x="1819.46" y="649.06" width="17.7" height="14.7" rx="2" fill="#f1eef2" stroke="none" stroke-width="0" opacity="0.85"/>
<rect x="1822.46" y="652.06" width="11.7" height="8.7" rx="1.2" fill="#2c439e" stroke="none" stroke-width="0" />
<text x="0" y="0" font-size="23.5" text-anchor="end" fill="#0b0b0b" font-weight="normal" font-style="normal" transform="translate(1818.46 665.76) scale(1.01 1)" class="h" >10</text>
<rect x="1858.86" y="660.84" width="20.91" height="21.92" rx="4" fill="#d6d6bd" filter="url(#hb2)"/>
<text x="0" y="0" font-size="23.5" text-anchor="start" fill="#0b0b0b" font-weight="normal" font-style="normal" transform="translate(1861.36 680.26) scale(1.01 1)" class="h" >A</text>
<line x1="1755.26" y1="699.54" x2="1794.06" y2="699.54" stroke="#0a1a0c" stroke-width="4.3" stroke-linecap="butt"/>
<rect x="1784.06" y="697.39" width="61" height="4.3" fill="url(#gpl)"/>
<rect x="1732.36" y="688.64" width="21.8" height="21.8" rx="7.4" ry="7.4" fill="#deeeda" stroke="#0a1a0c" stroke-width="4.7"/>
<ellipse cx="1743.26" cy="699.54" rx="5" ry="4" fill="#bfddb7" opacity="0.75"/>
<text x="0" y="0" font-size="23.5" text-anchor="end" fill="#0b0b0b" font-weight="normal" font-style="normal" transform="translate(1716.86 708.94) scale(1.01 1)" class="h" >S1</text>
<rect x="1819.46" y="678.14" width="17.7" height="14.7" rx="2" fill="#f1eef2" stroke="none" stroke-width="0" opacity="0.85"/>
<rect x="1822.46" y="681.14" width="11.7" height="8.7" rx="1.2" fill="#2c439e" stroke="none" stroke-width="0" />
<text x="0" y="0" font-size="23.5" text-anchor="end" fill="#0b0b0b" font-weight="normal" font-style="normal" transform="translate(1818.46 694.84) scale(1.01 1)" class="h" >11</text>
<rect x="1858.86" y="689.92" width="20.91" height="21.92" rx="4" fill="#d6d6bd" filter="url(#hb2)"/>
<text x="0" y="0" font-size="23.5" text-anchor="start" fill="#0b0b0b" font-weight="normal" font-style="normal" transform="translate(1861.36 709.34) scale(1.01 1)" class="h" >B</text>
<line x1="1755.26" y1="728.63" x2="1794.06" y2="728.63" stroke="#0a1a0c" stroke-width="4.3" stroke-linecap="butt"/>
<rect x="1784.06" y="726.48" width="61" height="4.3" fill="url(#gpl)"/>
<rect x="1732.36" y="717.73" width="21.8" height="21.8" rx="7.4" ry="7.4" fill="#deeeda" stroke="#0a1a0c" stroke-width="4.7"/>
<ellipse cx="1743.26" cy="728.63" rx="5" ry="4" fill="#bfddb7" opacity="0.75"/>
<text x="0" y="0" font-size="23.5" text-anchor="end" fill="#0b0b0b" font-weight="normal" font-style="normal" transform="translate(1716.86 738.03) scale(1.01 1)" class="h" >S2</text>
<rect x="1819.46" y="707.23" width="17.7" height="14.7" rx="2" fill="#f1eef2" stroke="none" stroke-width="0" opacity="0.85"/>
<rect x="1822.46" y="710.23" width="11.7" height="8.7" rx="1.2" fill="#2c439e" stroke="none" stroke-width="0" />
<text x="0" y="0" font-size="23.5" text-anchor="end" fill="#0b0b0b" font-weight="normal" font-style="normal" transform="translate(1818.46 723.93) scale(1.01 1)" class="h" >14</text>
<rect x="1858.86" y="719.01" width="22.22" height="21.92" rx="4" fill="#d6d6bd" filter="url(#hb2)"/>
<text x="0" y="0" font-size="23.5" text-anchor="start" fill="#0b0b0b" font-weight="normal" font-style="normal" transform="translate(1861.36 738.43) scale(1.01 1)" class="h" >C</text>
<line x1="1755.26" y1="757.72" x2="1794.06" y2="757.72" stroke="#0a1a0c" stroke-width="4.3" stroke-linecap="butt"/>
<rect x="1784.06" y="755.57" width="61" height="4.3" fill="url(#gpl)"/>
<rect x="1732.36" y="746.82" width="21.8" height="21.8" rx="7.4" ry="7.4" fill="#deeeda" stroke="#0a1a0c" stroke-width="4.7"/>
<ellipse cx="1743.26" cy="757.72" rx="5" ry="4" fill="#bfddb7" opacity="0.75"/>
<text x="0" y="0" font-size="23.5" text-anchor="end" fill="#0b0b0b" font-weight="normal" font-style="normal" transform="translate(1716.86 767.12) scale(1.01 1)" class="h" >S3</text>
<rect x="1819.46" y="736.32" width="17.7" height="14.7" rx="2" fill="#f1eef2" stroke="none" stroke-width="0" opacity="0.85"/>
<rect x="1822.46" y="739.32" width="11.7" height="8.7" rx="1.2" fill="#2c439e" stroke="none" stroke-width="0" />
<text x="0" y="0" font-size="23.5" text-anchor="end" fill="#0b0b0b" font-weight="normal" font-style="normal" transform="translate(1818.46 753.01) scale(1.01 1)" class="h" >13</text>
<rect x="1858.86" y="748.1" width="22.22" height="21.92" rx="4" fill="#d6d6bd" filter="url(#hb2)"/>
<text x="0" y="0" font-size="23.5" text-anchor="start" fill="#0b0b0b" font-weight="normal" font-style="normal" transform="translate(1861.36 767.51) scale(1.01 1)" class="h" >D</text>
<line x1="1755.26" y1="815.88" x2="1794.06" y2="815.88" stroke="#0a1a0c" stroke-width="4.3" stroke-linecap="butt"/>
<rect x="1784.06" y="813.74" width="61" height="4.3" fill="url(#gpl)"/>
<rect x="1732.36" y="804.99" width="21.8" height="21.8" rx="7.4" ry="7.4" fill="#deeeda" stroke="#0a1a0c" stroke-width="4.7"/>
<ellipse cx="1743.26" cy="815.88" rx="5" ry="4" fill="#bfddb7" opacity="0.75"/>
<text x="0" y="0" font-size="23.5" text-anchor="end" fill="#0b0b0b" font-weight="normal" font-style="normal" transform="translate(1716.86 825.28) scale(1.01 1)" class="h" >GND</text>
<rect x="1819.46" y="794.49" width="17.7" height="14.7" rx="2" fill="#f1eef2" stroke="none" stroke-width="0" opacity="0.85"/>
<rect x="1822.46" y="797.49" width="11.7" height="8.7" rx="1.2" fill="#2c439e" stroke="none" stroke-width="0" />
<text x="0" y="0" font-size="23.5" text-anchor="end" fill="#0b0b0b" font-weight="normal" font-style="normal" transform="translate(1818.46 811.18) scale(1.01 1)" class="h" >15</text>
<rect x="1858.86" y="806.26" width="38.13" height="21.92" rx="4" fill="#d6d6bd" filter="url(#hb2)"/>
<text x="0" y="0" font-size="23.5" text-anchor="start" fill="#0b0b0b" font-weight="normal" font-style="normal" transform="translate(1861.36 825.68) scale(1.01 1)" class="h" >EN</text>
<line x1="1861.66" y1="803.68" x2="1894.66" y2="803.68" stroke="#0b0b0b" stroke-width="1.7" stroke-linecap="butt"/>
<rect x="2048.13" y="166.4" width="20.91" height="21.92" rx="4" fill="#d6d6bd" filter="url(#hb2)"/>
<text x="0" y="0" font-size="23.5" text-anchor="end" fill="#0b0b0b" font-weight="normal" font-style="normal" transform="translate(2066.54 185.81) scale(1.01 1)" class="h" >X</text>
<rect x="2079.74" y="173.86" width="59.6" height="4.3" fill="url(#gpr)"/>
<line x1="2136.94" y1="173.86" x2="2136.94" y2="212.01" stroke="#0a1a0c" stroke-width="4.3" stroke-linecap="butt"/>
<rect x="2126.04" y="212.51" width="21.8" height="21.8" rx="7.4" ry="7.4" fill="#deeeda" stroke="#0a1a0c" stroke-width="4.7"/>
<ellipse cx="2136.94" cy="223.41" rx="5" ry="4" fill="#bfddb7" opacity="0.75"/>
<rect x="2089.34" y="154.71" width="16" height="14.4" rx="2" fill="#f1eef2" stroke="none" stroke-width="0" opacity="0.85"/>
<rect x="2092.34" y="157.71" width="10" height="8.4" rx="1.2" fill="#2c439e" stroke="none" stroke-width="0" />
<text x="0" y="0" font-size="23.5" text-anchor="start" fill="#0b0b0b" font-weight="normal" font-style="normal" transform="translate(2110.74 171.31) scale(1.01 1)" class="h" >1</text>
<text x="0" y="0" font-size="23.5" text-anchor="end" fill="#0b0b0b" font-weight="normal" font-style="normal" transform="translate(2146.54 249.91) rotate(-90) scale(1.03 1)" class="h" >Mux_cinturon</text>
<text x="1785" y="137.23" font-size="36.3" text-anchor="start" fill="#0b0b0b" font-weight="normal" font-style="normal" >SEAT BELT SENSOR</text>
<text x="0" y="0" font-size="23.5" text-anchor="start" fill="#0b0b0b" font-weight="normal" font-style="normal" transform="translate(1845.46 871.27) scale(1.01 1)" class="h" >4067</text>
<rect x="1410.79" y="1109.82" width="57" height="465.28" rx="0" fill="#f8efed" stroke="none" stroke-width="0" opacity="0.9" filter="url(#hb)"/>
<rect x="1410.79" y="1604.26" width="57" height="116.26" rx="0" fill="#f8efed" stroke="none" stroke-width="0" opacity="0.9" filter="url(#hb)"/>
<rect x="1410.79" y="1749.69" width="57" height="29" rx="0" fill="#f8efed" stroke="none" stroke-width="0" opacity="0.9" filter="url(#hb)"/>
<rect x="1119.11" y="1109.82" width="57" height="29" rx="0" fill="#f8efed" stroke="none" stroke-width="0" opacity="0.9" filter="url(#hb)"/>
<text x="1175" y="1097.03" font-size="36.3" text-anchor="start" fill="#0b0b0b" font-weight="normal" font-style="normal" >OUTPUT_LED</text>
<rect x="1174.11" y="1103.73" width="238.68" height="704.04" fill="none" stroke="#f3ebe6" stroke-width="2.4" opacity="0.8"/>
<rect x="1177.11" y="1106.73" width="232.68" height="698.04" rx="0" fill="#cccdb0" stroke="#400908" stroke-width="4" />
<rect x="1180.31" y="1109.93" width="226.28" height="691.64" fill="none" stroke="#f3e6d6" stroke-width="2.4" opacity="0.85"/>
<line x1="1461.79" y1="1135.82" x2="1502.99" y2="1135.82" stroke="#0a1a0c" stroke-width="4.3" stroke-linecap="butt"/>
<rect x="1410.79" y="1133.67" width="61" height="4.3" fill="url(#gpr4)"/>
<rect x="1504.09" y="1124.92" width="21.8" height="21.8" rx="7.4" ry="7.4" fill="#deeeda" stroke="#0a1a0c" stroke-width="4.7"/>
<ellipse cx="1514.99" cy="1135.82" rx="5" ry="4" fill="#bfddb7" opacity="0.75"/>
<text x="0" y="0" font-size="23.5" text-anchor="start" fill="#0b0b0b" font-weight="normal" font-style="normal" transform="translate(1542.19 1145.22) scale(1.01 1)" class="h" >asiento_01</text>
<rect x="1419.38" y="1114.42" width="17.3" height="14.7" rx="2" fill="#f1eef2" stroke="none" stroke-width="0" opacity="0.85"/>
<rect x="1422.38" y="1117.42" width="11.3" height="8.7" rx="1.2" fill="#e0553f" stroke="none" stroke-width="0" />
<text x="0" y="0" font-size="23.5" text-anchor="start" fill="#0b0b0b" font-weight="normal" font-style="normal" transform="translate(1439.38 1131.12) scale(1.01 1)" class="h" >9</text>
<rect x="1365.11" y="1126.2" width="34.17" height="21.92" rx="4" fill="#d6d6bd" filter="url(#hb2)"/>
<text x="0" y="0" font-size="23.5" text-anchor="end" fill="#0b0b0b" font-weight="normal" font-style="normal" transform="translate(1396.79 1145.62) scale(1.01 1)" class="h" >X0</text>
<line x1="1461.79" y1="1164.9" x2="1502.99" y2="1164.9" stroke="#0a1a0c" stroke-width="4.3" stroke-linecap="butt"/>
<rect x="1410.79" y="1162.75" width="61" height="4.3" fill="url(#gpr4)"/>
<rect x="1504.09" y="1154" width="21.8" height="21.8" rx="7.4" ry="7.4" fill="#deeeda" stroke="#0a1a0c" stroke-width="4.7"/>
<ellipse cx="1514.99" cy="1164.9" rx="5" ry="4" fill="#bfddb7" opacity="0.75"/>
<text x="0" y="0" font-size="23.5" text-anchor="start" fill="#0b0b0b" font-weight="normal" font-style="normal" transform="translate(1542.19 1174.31) scale(1.01 1)" class="h" >GND</text>
<rect x="1419.38" y="1143.5" width="17.3" height="14.7" rx="2" fill="#f1eef2" stroke="none" stroke-width="0" opacity="0.85"/>
<rect x="1422.38" y="1146.5" width="11.3" height="8.7" rx="1.2" fill="#2c439e" stroke="none" stroke-width="0" />
<text x="0" y="0" font-size="23.5" text-anchor="start" fill="#0b0b0b" font-weight="normal" font-style="normal" transform="translate(1439.38 1160.2) scale(1.01 1)" class="h" >8</text>
<rect x="1365.11" y="1155.28" width="34.17" height="21.92" rx="4" fill="#d6d6bd" filter="url(#hb2)"/>
<text x="0" y="0" font-size="23.5" text-anchor="end" fill="#0b0b0b" font-weight="normal" font-style="normal" transform="translate(1396.79 1174.7) scale(1.01 1)" class="h" >X1</text>
<line x1="1461.79" y1="1193.99" x2="1502.99" y2="1193.99" stroke="#0a1a0c" stroke-width="4.3" stroke-linecap="butt"/>
<rect x="1410.79" y="1191.84" width="61" height="4.3" fill="url(#gpr4)"/>
<rect x="1504.09" y="1183.09" width="21.8" height="21.8" rx="7.4" ry="7.4" fill="#deeeda" stroke="#0a1a0c" stroke-width="4.7"/>
<ellipse cx="1514.99" cy="1193.99" rx="5" ry="4" fill="#bfddb7" opacity="0.75"/>
<text x="0" y="0" font-size="23.5" text-anchor="start" fill="#0b0b0b" font-weight="normal" font-style="normal" transform="translate(1542.19 1203.39) scale(1.01 1)" class="h" >GND</text>
<rect x="1419.38" y="1172.59" width="17.3" height="14.7" rx="2" fill="#f1eef2" stroke="none" stroke-width="0" opacity="0.85"/>
<rect x="1422.38" y="1175.59" width="11.3" height="8.7" rx="1.2" fill="#2c439e" stroke="none" stroke-width="0" />
<text x="0" y="0" font-size="23.5" text-anchor="start" fill="#0b0b0b" font-weight="normal" font-style="normal" transform="translate(1439.38 1189.29) scale(1.01 1)" class="h" >7</text>
<rect x="1365.11" y="1184.37" width="34.17" height="21.92" rx="4" fill="#d6d6bd" filter="url(#hb2)"/>
<text x="0" y="0" font-size="23.5" text-anchor="end" fill="#0b0b0b" font-weight="normal" font-style="normal" transform="translate(1396.79 1203.79) scale(1.01 1)" class="h" >X2</text>
<line x1="1461.79" y1="1223.08" x2="1502.99" y2="1223.08" stroke="#0a1a0c" stroke-width="4.3" stroke-linecap="butt"/>
<rect x="1410.79" y="1220.92" width="61" height="4.3" fill="url(#gpr4)"/>
<rect x="1504.09" y="1212.17" width="21.8" height="21.8" rx="7.4" ry="7.4" fill="#deeeda" stroke="#0a1a0c" stroke-width="4.7"/>
<ellipse cx="1514.99" cy="1223.08" rx="5" ry="4" fill="#bfddb7" opacity="0.75"/>
<text x="0" y="0" font-size="23.5" text-anchor="start" fill="#0b0b0b" font-weight="normal" font-style="normal" transform="translate(1542.19 1232.48) scale(1.01 1)" class="h" >GND</text>
<rect x="1419.38" y="1201.67" width="17.3" height="14.7" rx="2" fill="#f1eef2" stroke="none" stroke-width="0" opacity="0.85"/>
<rect x="1422.38" y="1204.67" width="11.3" height="8.7" rx="1.2" fill="#2c439e" stroke="none" stroke-width="0" />
<text x="0" y="0" font-size="23.5" text-anchor="start" fill="#0b0b0b" font-weight="normal" font-style="normal" transform="translate(1439.38 1218.38) scale(1.01 1)" class="h" >6</text>
<rect x="1365.11" y="1213.45" width="34.17" height="21.92" rx="4" fill="#d6d6bd" filter="url(#hb2)"/>
<text x="0" y="0" font-size="23.5" text-anchor="end" fill="#0b0b0b" font-weight="normal" font-style="normal" transform="translate(1396.79 1232.88) scale(1.01 1)" class="h" >X3</text>
<line x1="1461.79" y1="1252.16" x2="1502.99" y2="1252.16" stroke="#0a1a0c" stroke-width="4.3" stroke-linecap="butt"/>
<rect x="1410.79" y="1250.01" width="61" height="4.3" fill="url(#gpr4)"/>
<rect x="1504.09" y="1241.26" width="21.8" height="21.8" rx="7.4" ry="7.4" fill="#deeeda" stroke="#0a1a0c" stroke-width="4.7"/>
<ellipse cx="1514.99" cy="1252.16" rx="5" ry="4" fill="#bfddb7" opacity="0.75"/>
<text x="0" y="0" font-size="23.5" text-anchor="start" fill="#0b0b0b" font-weight="normal" font-style="normal" transform="translate(1542.19 1261.56) scale(1.01 1)" class="h" >GND</text>
<rect x="1419.38" y="1230.76" width="17.3" height="14.7" rx="2" fill="#f1eef2" stroke="none" stroke-width="0" opacity="0.85"/>
<rect x="1422.38" y="1233.76" width="11.3" height="8.7" rx="1.2" fill="#2c439e" stroke="none" stroke-width="0" />
<text x="0" y="0" font-size="23.5" text-anchor="start" fill="#0b0b0b" font-weight="normal" font-style="normal" transform="translate(1439.38 1247.46) scale(1.01 1)" class="h" >5</text>
<rect x="1365.11" y="1242.54" width="34.17" height="21.92" rx="4" fill="#d6d6bd" filter="url(#hb2)"/>
<text x="0" y="0" font-size="23.5" text-anchor="end" fill="#0b0b0b" font-weight="normal" font-style="normal" transform="translate(1396.79 1261.96) scale(1.01 1)" class="h" >X4</text>
<line x1="1461.79" y1="1281.24" x2="1502.99" y2="1281.24" stroke="#0a1a0c" stroke-width="4.3" stroke-linecap="butt"/>
<rect x="1410.79" y="1279.09" width="61" height="4.3" fill="url(#gpr4)"/>
<rect x="1504.09" y="1270.34" width="21.8" height="21.8" rx="7.4" ry="7.4" fill="#deeeda" stroke="#0a1a0c" stroke-width="4.7"/>
<ellipse cx="1514.99" cy="1281.24" rx="5" ry="4" fill="#bfddb7" opacity="0.75"/>
<text x="0" y="0" font-size="23.5" text-anchor="start" fill="#0b0b0b" font-weight="normal" font-style="normal" transform="translate(1542.19 1290.64) scale(1.01 1)" class="h" >GND</text>
<rect x="1419.38" y="1259.84" width="17.3" height="14.7" rx="2" fill="#f1eef2" stroke="none" stroke-width="0" opacity="0.85"/>
<rect x="1422.38" y="1262.84" width="11.3" height="8.7" rx="1.2" fill="#2c439e" stroke="none" stroke-width="0" />
<text x="0" y="0" font-size="23.5" text-anchor="start" fill="#0b0b0b" font-weight="normal" font-style="normal" transform="translate(1439.38 1276.54) scale(1.01 1)" class="h" >4</text>
<rect x="1365.11" y="1271.62" width="34.17" height="21.92" rx="4" fill="#d6d6bd" filter="url(#hb2)"/>
<text x="0" y="0" font-size="23.5" text-anchor="end" fill="#0b0b0b" font-weight="normal" font-style="normal" transform="translate(1396.79 1291.04) scale(1.01 1)" class="h" >X5</text>
<line x1="1461.79" y1="1310.33" x2="1502.99" y2="1310.33" stroke="#0a1a0c" stroke-width="4.3" stroke-linecap="butt"/>
<rect x="1410.79" y="1308.18" width="61" height="4.3" fill="url(#gpr4)"/>
<rect x="1504.09" y="1299.43" width="21.8" height="21.8" rx="7.4" ry="7.4" fill="#deeeda" stroke="#0a1a0c" stroke-width="4.7"/>
<ellipse cx="1514.99" cy="1310.33" rx="5" ry="4" fill="#bfddb7" opacity="0.75"/>
<text x="0" y="0" font-size="23.5" text-anchor="start" fill="#0b0b0b" font-weight="normal" font-style="normal" transform="translate(1542.19 1319.73) scale(1.01 1)" class="h" >GND</text>
<rect x="1419.38" y="1288.93" width="17.3" height="14.7" rx="2" fill="#f1eef2" stroke="none" stroke-width="0" opacity="0.85"/>
<rect x="1422.38" y="1291.93" width="11.3" height="8.7" rx="1.2" fill="#2c439e" stroke="none" stroke-width="0" />
<text x="0" y="0" font-size="23.5" text-anchor="start" fill="#0b0b0b" font-weight="normal" font-style="normal" transform="translate(1439.38 1305.63) scale(1.01 1)" class="h" >3</text>
<rect x="1365.11" y="1300.71" width="34.17" height="21.92" rx="4" fill="#d6d6bd" filter="url(#hb2)"/>
<text x="0" y="0" font-size="23.5" text-anchor="end" fill="#0b0b0b" font-weight="normal" font-style="normal" transform="translate(1396.79 1320.13) scale(1.01 1)" class="h" >X6</text>
<line x1="1461.79" y1="1339.41" x2="1502.99" y2="1339.41" stroke="#0a1a0c" stroke-width="4.3" stroke-linecap="butt"/>
<rect x="1410.79" y="1337.26" width="61" height="4.3" fill="url(#gpr4)"/>
<rect x="1504.09" y="1328.51" width="21.8" height="21.8" rx="7.4" ry="7.4" fill="#deeeda" stroke="#0a1a0c" stroke-width="4.7"/>
<ellipse cx="1514.99" cy="1339.41" rx="5" ry="4" fill="#bfddb7" opacity="0.75"/>
<text x="0" y="0" font-size="23.5" text-anchor="start" fill="#0b0b0b" font-weight="normal" font-style="normal" transform="translate(1542.19 1348.82) scale(1.01 1)" class="h" >GND</text>
<rect x="1419.38" y="1318.01" width="17.3" height="14.7" rx="2" fill="#f1eef2" stroke="none" stroke-width="0" opacity="0.85"/>
<rect x="1422.38" y="1321.01" width="11.3" height="8.7" rx="1.2" fill="#2c439e" stroke="none" stroke-width="0" />
<text x="0" y="0" font-size="23.5" text-anchor="start" fill="#0b0b0b" font-weight="normal" font-style="normal" transform="translate(1439.38 1334.71) scale(1.01 1)" class="h" >2</text>
<rect x="1365.11" y="1329.79" width="34.17" height="21.92" rx="4" fill="#d6d6bd" filter="url(#hb2)"/>
<text x="0" y="0" font-size="23.5" text-anchor="end" fill="#0b0b0b" font-weight="normal" font-style="normal" transform="translate(1396.79 1349.21) scale(1.01 1)" class="h" >X7</text>
<line x1="1461.79" y1="1368.5" x2="1502.99" y2="1368.5" stroke="#0a1a0c" stroke-width="4.3" stroke-linecap="butt"/>
<rect x="1410.79" y="1366.35" width="61" height="4.3" fill="url(#gpr4)"/>
<rect x="1504.09" y="1357.6" width="21.8" height="21.8" rx="7.4" ry="7.4" fill="#deeeda" stroke="#0a1a0c" stroke-width="4.7"/>
<ellipse cx="1514.99" cy="1368.5" rx="5" ry="4" fill="#bfddb7" opacity="0.75"/>
<text x="0" y="0" font-size="23.5" text-anchor="start" fill="#0b0b0b" font-weight="normal" font-style="normal" transform="translate(1542.19 1377.9) scale(1.01 1)" class="h" >GND</text>
<rect x="1419.38" y="1347.1" width="17.3" height="14.7" rx="2" fill="#f1eef2" stroke="none" stroke-width="0" opacity="0.85"/>
<rect x="1422.38" y="1350.1" width="11.3" height="8.7" rx="1.2" fill="#2c439e" stroke="none" stroke-width="0" />
<text x="0" y="0" font-size="23.5" text-anchor="start" fill="#0b0b0b" font-weight="normal" font-style="normal" transform="translate(1439.38 1363.8) scale(1.01 1)" class="h" >23</text>
<rect x="1365.11" y="1358.88" width="34.17" height="21.92" rx="4" fill="#d6d6bd" filter="url(#hb2)"/>
<text x="0" y="0" font-size="23.5" text-anchor="end" fill="#0b0b0b" font-weight="normal" font-style="normal" transform="translate(1396.79 1378.3) scale(1.01 1)" class="h" >X8</text>
<line x1="1461.79" y1="1397.59" x2="1502.99" y2="1397.59" stroke="#0a1a0c" stroke-width="4.3" stroke-linecap="butt"/>
<rect x="1410.79" y="1395.43" width="61" height="4.3" fill="url(#gpr4)"/>
<rect x="1504.09" y="1386.68" width="21.8" height="21.8" rx="7.4" ry="7.4" fill="#deeeda" stroke="#0a1a0c" stroke-width="4.7"/>
<ellipse cx="1514.99" cy="1397.59" rx="5" ry="4" fill="#bfddb7" opacity="0.75"/>
<text x="0" y="0" font-size="23.5" text-anchor="start" fill="#0b0b0b" font-weight="normal" font-style="normal" transform="translate(1542.19 1406.99) scale(1.01 1)" class="h" >GND</text>
<rect x="1419.38" y="1376.18" width="17.3" height="14.7" rx="2" fill="#f1eef2" stroke="none" stroke-width="0" opacity="0.85"/>
<rect x="1422.38" y="1379.18" width="11.3" height="8.7" rx="1.2" fill="#2c439e" stroke="none" stroke-width="0" />
<text x="0" y="0" font-size="23.5" text-anchor="start" fill="#0b0b0b" font-weight="normal" font-style="normal" transform="translate(1439.38 1392.88) scale(1.01 1)" class="h" >22</text>
<rect x="1365.11" y="1387.96" width="34.17" height="21.92" rx="4" fill="#d6d6bd" filter="url(#hb2)"/>
<text x="0" y="0" font-size="23.5" text-anchor="end" fill="#0b0b0b" font-weight="normal" font-style="normal" transform="translate(1396.79 1407.38) scale(1.01 1)" class="h" >X9</text>
<line x1="1461.79" y1="1426.67" x2="1502.99" y2="1426.67" stroke="#0a1a0c" stroke-width="4.3" stroke-linecap="butt"/>
<rect x="1410.79" y="1424.52" width="61" height="4.3" fill="url(#gpr4)"/>
<rect x="1504.09" y="1415.77" width="21.8" height="21.8" rx="7.4" ry="7.4" fill="#deeeda" stroke="#0a1a0c" stroke-width="4.7"/>
<ellipse cx="1514.99" cy="1426.67" rx="5" ry="4" fill="#bfddb7" opacity="0.75"/>
<text x="0" y="0" font-size="23.5" text-anchor="start" fill="#0b0b0b" font-weight="normal" font-style="normal" transform="translate(1542.19 1436.07) scale(1.01 1)" class="h" >GND</text>
<rect x="1419.38" y="1405.27" width="17.3" height="14.7" rx="2" fill="#f1eef2" stroke="none" stroke-width="0" opacity="0.85"/>
<rect x="1422.38" y="1408.27" width="11.3" height="8.7" rx="1.2" fill="#2c439e" stroke="none" stroke-width="0" />
<text x="0" y="0" font-size="23.5" text-anchor="start" fill="#0b0b0b" font-weight="normal" font-style="normal" transform="translate(1439.38 1421.97) scale(1.01 1)" class="h" >21</text>
<rect x="1351.85" y="1417.05" width="47.43" height="21.92" rx="4" fill="#d6d6bd" filter="url(#hb2)"/>
<text x="0" y="0" font-size="23.5" text-anchor="end" fill="#0b0b0b" font-weight="normal" font-style="normal" transform="translate(1396.79 1436.47) scale(1.01 1)" class="h" >X10</text>
<line x1="1461.79" y1="1455.75" x2="1502.99" y2="1455.75" stroke="#0a1a0c" stroke-width="4.3" stroke-linecap="butt"/>
<rect x="1410.79" y="1453.6" width="61" height="4.3" fill="url(#gpr4)"/>
<rect x="1504.09" y="1444.85" width="21.8" height="21.8" rx="7.4" ry="7.4" fill="#deeeda" stroke="#0a1a0c" stroke-width="4.7"/>
<ellipse cx="1514.99" cy="1455.75" rx="5" ry="4" fill="#bfddb7" opacity="0.75"/>
<text x="0" y="0" font-size="23.5" text-anchor="start" fill="#0b0b0b" font-weight="normal" font-style="normal" transform="translate(1542.19 1465.15) scale(1.01 1)" class="h" >GND</text>
<rect x="1419.38" y="1434.35" width="17.3" height="14.7" rx="2" fill="#f1eef2" stroke="none" stroke-width="0" opacity="0.85"/>
<rect x="1422.38" y="1437.35" width="11.3" height="8.7" rx="1.2" fill="#2c439e" stroke="none" stroke-width="0" />
<text x="0" y="0" font-size="23.5" text-anchor="start" fill="#0b0b0b" font-weight="normal" font-style="normal" transform="translate(1439.38 1451.05) scale(1.01 1)" class="h" >20</text>
<rect x="1351.85" y="1446.13" width="47.43" height="21.92" rx="4" fill="#d6d6bd" filter="url(#hb2)"/>
<text x="0" y="0" font-size="23.5" text-anchor="end" fill="#0b0b0b" font-weight="normal" font-style="normal" transform="translate(1396.79 1465.55) scale(1.01 1)" class="h" >X11</text>
<line x1="1461.79" y1="1484.84" x2="1502.99" y2="1484.84" stroke="#0a1a0c" stroke-width="4.3" stroke-linecap="butt"/>
<rect x="1410.79" y="1482.69" width="61" height="4.3" fill="url(#gpr4)"/>
<rect x="1504.09" y="1473.94" width="21.8" height="21.8" rx="7.4" ry="7.4" fill="#deeeda" stroke="#0a1a0c" stroke-width="4.7"/>
<ellipse cx="1514.99" cy="1484.84" rx="5" ry="4" fill="#bfddb7" opacity="0.75"/>
<text x="0" y="0" font-size="23.5" text-anchor="start" fill="#0b0b0b" font-weight="normal" font-style="normal" transform="translate(1542.19 1494.24) scale(1.01 1)" class="h" >GND</text>
<rect x="1419.38" y="1463.44" width="17.3" height="14.7" rx="2" fill="#f1eef2" stroke="none" stroke-width="0" opacity="0.85"/>
<rect x="1422.38" y="1466.44" width="11.3" height="8.7" rx="1.2" fill="#2c439e" stroke="none" stroke-width="0" />
<text x="0" y="0" font-size="23.5" text-anchor="start" fill="#0b0b0b" font-weight="normal" font-style="normal" transform="translate(1439.38 1480.14) scale(1.01 1)" class="h" >19</text>
<rect x="1351.85" y="1475.22" width="47.43" height="21.92" rx="4" fill="#d6d6bd" filter="url(#hb2)"/>
<text x="0" y="0" font-size="23.5" text-anchor="end" fill="#0b0b0b" font-weight="normal" font-style="normal" transform="translate(1396.79 1494.64) scale(1.01 1)" class="h" >X12</text>
<line x1="1461.79" y1="1513.92" x2="1502.99" y2="1513.92" stroke="#0a1a0c" stroke-width="4.3" stroke-linecap="butt"/>
<rect x="1410.79" y="1511.77" width="61" height="4.3" fill="url(#gpr4)"/>
<rect x="1504.09" y="1503.02" width="21.8" height="21.8" rx="7.4" ry="7.4" fill="#deeeda" stroke="#0a1a0c" stroke-width="4.7"/>
<ellipse cx="1514.99" cy="1513.92" rx="5" ry="4" fill="#bfddb7" opacity="0.75"/>
<text x="0" y="0" font-size="23.5" text-anchor="start" fill="#0b0b0b" font-weight="normal" font-style="normal" transform="translate(1542.19 1523.33) scale(1.01 1)" class="h" >GND</text>
<rect x="1419.38" y="1492.52" width="17.3" height="14.7" rx="2" fill="#f1eef2" stroke="none" stroke-width="0" opacity="0.85"/>
<rect x="1422.38" y="1495.52" width="11.3" height="8.7" rx="1.2" fill="#2c439e" stroke="none" stroke-width="0" />
<text x="0" y="0" font-size="23.5" text-anchor="start" fill="#0b0b0b" font-weight="normal" font-style="normal" transform="translate(1439.38 1509.22) scale(1.01 1)" class="h" >18</text>
<rect x="1351.85" y="1504.3" width="47.43" height="21.92" rx="4" fill="#d6d6bd" filter="url(#hb2)"/>
<text x="0" y="0" font-size="23.5" text-anchor="end" fill="#0b0b0b" font-weight="normal" font-style="normal" transform="translate(1396.79 1523.72) scale(1.01 1)" class="h" >X13</text>
<line x1="1461.79" y1="1543.01" x2="1502.99" y2="1543.01" stroke="#0a1a0c" stroke-width="4.3" stroke-linecap="butt"/>
<rect x="1410.79" y="1540.86" width="61" height="4.3" fill="url(#gpr4)"/>
<rect x="1504.09" y="1532.11" width="21.8" height="21.8" rx="7.4" ry="7.4" fill="#deeeda" stroke="#0a1a0c" stroke-width="4.7"/>
<ellipse cx="1514.99" cy="1543.01" rx="5" ry="4" fill="#bfddb7" opacity="0.75"/>
<text x="0" y="0" font-size="23.5" text-anchor="start" fill="#0b0b0b" font-weight="normal" font-style="normal" transform="translate(1542.19 1552.41) scale(1.01 1)" class="h" >GND</text>
<rect x="1419.38" y="1521.61" width="17.3" height="14.7" rx="2" fill="#f1eef2" stroke="none" stroke-width="0" opacity="0.85"/>
<rect x="1422.38" y="1524.61" width="11.3" height="8.7" rx="1.2" fill="#2c439e" stroke="none" stroke-width="0" />
<text x="0" y="0" font-size="23.5" text-anchor="start" fill="#0b0b0b" font-weight="normal" font-style="normal" transform="translate(1439.38 1538.31) scale(1.01 1)" class="h" >17</text>
<rect x="1351.85" y="1533.39" width="47.43" height="21.92" rx="4" fill="#d6d6bd" filter="url(#hb2)"/>
<text x="0" y="0" font-size="23.5" text-anchor="end" fill="#0b0b0b" font-weight="normal" font-style="normal" transform="translate(1396.79 1552.81) scale(1.01 1)" class="h" >X14</text>
<line x1="1461.79" y1="1572.1" x2="1502.99" y2="1572.1" stroke="#0a1a0c" stroke-width="4.3" stroke-linecap="butt"/>
<rect x="1410.79" y="1569.94" width="61" height="4.3" fill="url(#gpr4)"/>
<rect x="1504.09" y="1561.19" width="21.8" height="21.8" rx="7.4" ry="7.4" fill="#deeeda" stroke="#0a1a0c" stroke-width="4.7"/>
<ellipse cx="1514.99" cy="1572.1" rx="5" ry="4" fill="#bfddb7" opacity="0.75"/>
<text x="0" y="0" font-size="23.5" text-anchor="start" fill="#0b0b0b" font-weight="normal" font-style="normal" transform="translate(1542.19 1581.5) scale(1.01 1)" class="h" >GND</text>
<rect x="1419.38" y="1550.69" width="17.3" height="14.7" rx="2" fill="#f1eef2" stroke="none" stroke-width="0" opacity="0.85"/>
<rect x="1422.38" y="1553.69" width="11.3" height="8.7" rx="1.2" fill="#2c439e" stroke="none" stroke-width="0" />
<text x="0" y="0" font-size="23.5" text-anchor="start" fill="#0b0b0b" font-weight="normal" font-style="normal" transform="translate(1439.38 1567.39) scale(1.01 1)" class="h" >16</text>
<rect x="1351.85" y="1562.47" width="47.43" height="21.92" rx="4" fill="#d6d6bd" filter="url(#hb2)"/>
<text x="0" y="0" font-size="23.5" text-anchor="end" fill="#0b0b0b" font-weight="normal" font-style="normal" transform="translate(1396.79 1581.89) scale(1.01 1)" class="h" >X15</text>
<line x1="1461.79" y1="1630.26" x2="1502.99" y2="1630.26" stroke="#0a1a0c" stroke-width="4.3" stroke-linecap="butt"/>
<rect x="1410.79" y="1628.11" width="61" height="4.3" fill="url(#gpr4)"/>
<rect x="1504.09" y="1619.36" width="21.8" height="21.8" rx="7.4" ry="7.4" fill="#deeeda" stroke="#0a1a0c" stroke-width="4.7"/>
<ellipse cx="1514.99" cy="1630.26" rx="5" ry="4" fill="#bfddb7" opacity="0.75"/>
<text x="0" y="0" font-size="23.5" text-anchor="start" fill="#0b0b0b" font-weight="normal" font-style="normal" transform="translate(1542.19 1639.66) scale(1.01 1)" class="h" >S0</text>
<rect x="1419.38" y="1608.86" width="17.3" height="14.7" rx="2" fill="#f1eef2" stroke="none" stroke-width="0" opacity="0.85"/>
<rect x="1422.38" y="1611.86" width="11.3" height="8.7" rx="1.2" fill="#2c439e" stroke="none" stroke-width="0" />
<text x="0" y="0" font-size="23.5" text-anchor="start" fill="#0b0b0b" font-weight="normal" font-style="normal" transform="translate(1439.38 1625.56) scale(1.01 1)" class="h" >10</text>
<rect x="1378.38" y="1620.64" width="20.91" height="21.92" rx="4" fill="#d6d6bd" filter="url(#hb2)"/>
<text x="0" y="0" font-size="23.5" text-anchor="end" fill="#0b0b0b" font-weight="normal" font-style="normal" transform="translate(1396.79 1640.06) scale(1.01 1)" class="h" >A</text>
<line x1="1461.79" y1="1659.35" x2="1502.99" y2="1659.35" stroke="#0a1a0c" stroke-width="4.3" stroke-linecap="butt"/>
<rect x="1410.79" y="1657.2" width="61" height="4.3" fill="url(#gpr4)"/>
<rect x="1504.09" y="1648.45" width="21.8" height="21.8" rx="7.4" ry="7.4" fill="#deeeda" stroke="#0a1a0c" stroke-width="4.7"/>
<ellipse cx="1514.99" cy="1659.35" rx="5" ry="4" fill="#bfddb7" opacity="0.75"/>
<text x="0" y="0" font-size="23.5" text-anchor="start" fill="#0b0b0b" font-weight="normal" font-style="normal" transform="translate(1542.19 1668.75) scale(1.01 1)" class="h" >S1</text>
<rect x="1419.38" y="1637.95" width="17.3" height="14.7" rx="2" fill="#f1eef2" stroke="none" stroke-width="0" opacity="0.85"/>
<rect x="1422.38" y="1640.95" width="11.3" height="8.7" rx="1.2" fill="#2c439e" stroke="none" stroke-width="0" />
<text x="0" y="0" font-size="23.5" text-anchor="start" fill="#0b0b0b" font-weight="normal" font-style="normal" transform="translate(1439.38 1654.65) scale(1.01 1)" class="h" >11</text>
<rect x="1378.38" y="1649.73" width="20.91" height="21.92" rx="4" fill="#d6d6bd" filter="url(#hb2)"/>
<text x="0" y="0" font-size="23.5" text-anchor="end" fill="#0b0b0b" font-weight="normal" font-style="normal" transform="translate(1396.79 1669.15) scale(1.01 1)" class="h" >B</text>
<line x1="1461.79" y1="1688.43" x2="1502.99" y2="1688.43" stroke="#0a1a0c" stroke-width="4.3" stroke-linecap="butt"/>
<rect x="1410.79" y="1686.28" width="61" height="4.3" fill="url(#gpr4)"/>
<rect x="1504.09" y="1677.53" width="21.8" height="21.8" rx="7.4" ry="7.4" fill="#deeeda" stroke="#0a1a0c" stroke-width="4.7"/>
<ellipse cx="1514.99" cy="1688.43" rx="5" ry="4" fill="#bfddb7" opacity="0.75"/>
<text x="0" y="0" font-size="23.5" text-anchor="start" fill="#0b0b0b" font-weight="normal" font-style="normal" transform="translate(1542.19 1697.84) scale(1.01 1)" class="h" >S2</text>
<rect x="1419.38" y="1667.03" width="17.3" height="14.7" rx="2" fill="#f1eef2" stroke="none" stroke-width="0" opacity="0.85"/>
<rect x="1422.38" y="1670.03" width="11.3" height="8.7" rx="1.2" fill="#2c439e" stroke="none" stroke-width="0" />
<text x="0" y="0" font-size="23.5" text-anchor="start" fill="#0b0b0b" font-weight="normal" font-style="normal" transform="translate(1439.38 1683.73) scale(1.01 1)" class="h" >14</text>
<rect x="1377.06" y="1678.81" width="22.22" height="21.92" rx="4" fill="#d6d6bd" filter="url(#hb2)"/>
<text x="0" y="0" font-size="23.5" text-anchor="end" fill="#0b0b0b" font-weight="normal" font-style="normal" transform="translate(1396.79 1698.23) scale(1.01 1)" class="h" >C</text>
<line x1="1461.79" y1="1717.52" x2="1502.99" y2="1717.52" stroke="#0a1a0c" stroke-width="4.3" stroke-linecap="butt"/>
<rect x="1410.79" y="1715.37" width="61" height="4.3" fill="url(#gpr4)"/>
<rect x="1504.09" y="1706.62" width="21.8" height="21.8" rx="7.4" ry="7.4" fill="#deeeda" stroke="#0a1a0c" stroke-width="4.7"/>
<ellipse cx="1514.99" cy="1717.52" rx="5" ry="4" fill="#bfddb7" opacity="0.75"/>
<text x="0" y="0" font-size="23.5" text-anchor="start" fill="#0b0b0b" font-weight="normal" font-style="normal" transform="translate(1542.19 1726.92) scale(1.01 1)" class="h" >S3</text>
<rect x="1419.38" y="1696.12" width="17.3" height="14.7" rx="2" fill="#f1eef2" stroke="none" stroke-width="0" opacity="0.85"/>
<rect x="1422.38" y="1699.12" width="11.3" height="8.7" rx="1.2" fill="#2c439e" stroke="none" stroke-width="0" />
<text x="0" y="0" font-size="23.5" text-anchor="start" fill="#0b0b0b" font-weight="normal" font-style="normal" transform="translate(1439.38 1712.82) scale(1.01 1)" class="h" >13</text>
<rect x="1377.06" y="1707.9" width="22.22" height="21.92" rx="4" fill="#d6d6bd" filter="url(#hb2)"/>
<text x="0" y="0" font-size="23.5" text-anchor="end" fill="#0b0b0b" font-weight="normal" font-style="normal" transform="translate(1396.79 1727.32) scale(1.01 1)" class="h" >D</text>
<line x1="1461.79" y1="1775.69" x2="1502.99" y2="1775.69" stroke="#0a1a0c" stroke-width="4.3" stroke-linecap="butt"/>
<rect x="1410.79" y="1773.54" width="61" height="4.3" fill="url(#gpr4)"/>
<rect x="1504.09" y="1764.79" width="21.8" height="21.8" rx="7.4" ry="7.4" fill="#deeeda" stroke="#0a1a0c" stroke-width="4.7"/>
<ellipse cx="1514.99" cy="1775.69" rx="5" ry="4" fill="#bfddb7" opacity="0.75"/>
<text x="0" y="0" font-size="23.5" text-anchor="start" fill="#0b0b0b" font-weight="normal" font-style="normal" transform="translate(1542.19 1785.09) scale(1.01 1)" class="h" >GND</text>
<rect x="1419.38" y="1754.29" width="17.3" height="14.7" rx="2" fill="#f1eef2" stroke="none" stroke-width="0" opacity="0.85"/>
<rect x="1422.38" y="1757.29" width="11.3" height="8.7" rx="1.2" fill="#2c439e" stroke="none" stroke-width="0" />
<text x="0" y="0" font-size="23.5" text-anchor="start" fill="#0b0b0b" font-weight="normal" font-style="normal" transform="translate(1439.38 1770.99) scale(1.01 1)" class="h" >15</text>
<rect x="1361.15" y="1766.07" width="38.13" height="21.92" rx="4" fill="#d6d6bd" filter="url(#hb2)"/>
<text x="0" y="0" font-size="23.5" text-anchor="end" fill="#0b0b0b" font-weight="normal" font-style="normal" transform="translate(1396.79 1785.49) scale(1.01 1)" class="h" >EN</text>
<line x1="1363.19" y1="1763.49" x2="1396.19" y2="1763.49" stroke="#0b0b0b" stroke-width="1.7" stroke-linecap="butt"/>
<rect x="1190.2" y="1126.2" width="20.91" height="21.92" rx="4" fill="#d6d6bd" filter="url(#hb2)"/>
<text x="0" y="0" font-size="23.5" text-anchor="start" fill="#0b0b0b" font-weight="normal" font-style="normal" transform="translate(1192.7 1145.62) scale(1.01 1)" class="h" >X</text>
<rect x="1115.11" y="1133.67" width="61" height="4.3" fill="url(#gpl)"/>
<polyline points="1119.11,1135.82 1089.9,1135.82 1089.9,1200.82" fill="none" stroke="#0a1a0c" stroke-width="4.3" stroke-linejoin="miter" stroke-linecap="butt"/>
<rect x="1079" y="1201.22" width="21.8" height="21.8" rx="7.4" ry="7.4" fill="#deeeda" stroke="#0a1a0c" stroke-width="4.7"/>
<ellipse cx="1089.9" cy="1212.12" rx="5" ry="4" fill="#bfddb7" opacity="0.75"/>
<rect x="1150.61" y="1114.12" width="17.6" height="14.9" rx="2" fill="#f1eef2" stroke="none" stroke-width="0" opacity="0.85"/>
<rect x="1153.61" y="1117.12" width="11.6" height="8.9" rx="1.2" fill="#e0553f" stroke="none" stroke-width="0" />
<text x="0" y="0" font-size="23.5" text-anchor="end" fill="#0b0b0b" font-weight="normal" font-style="normal" transform="translate(1147.61 1131.12) scale(1.01 1)" class="h" >1</text>
<text x="0" y="0" font-size="23.5" text-anchor="end" fill="#0b0b0b" font-weight="normal" font-style="normal" transform="translate(1099.5 1238.42) rotate(-90) scale(1.03 1)" class="h" >Mux_LED</text>
<text x="0" y="0" font-size="23.5" text-anchor="start" fill="#0b0b0b" font-weight="normal" font-style="normal" transform="translate(1176.51 1831.07) scale(1.01 1)" class="h" >4067</text>
</g>
<rect x="968.2" y="173.86" width="207.9" height="4.3" fill="url(#gls)"/>
<polygon points="898.2,145.01 944.2,145.01 975.4,176.01 944.2,207.51 898.2,207.51" fill="none" stroke="#eef0f4" stroke-width="5" stroke-linejoin="round"/>
<polygon points="898.2,145.01 944.2,145.01 975.4,176.01 944.2,207.51 898.2,207.51" fill="#0606cc" stroke="#0808a2" stroke-width="2" stroke-linejoin="round"/>
<text x="0" y="0" font-size="50" text-anchor="middle" fill="#dcdcf6" font-weight="bold" font-style="normal" transform="translate(931 195.61) scale(0.94 1)" font-family='"Liberation Serif", "Liberation Sans", serif'>0</text>
<circle cx="974.2" cy="148.01" r="13.4" fill="#900d0f"/>
<circle cx="974.2" cy="148.01" r="3.2" fill="#b83030"/>
<rect x="992.9" y="151.81" width="19.2" height="19.7" rx="2" fill="#f1eef2" stroke="none" stroke-width="0" opacity="0.85"/>
<rect x="995.9" y="154.81" width="13.2" height="13.7" rx="1.2" fill="#3556c6" stroke="none" stroke-width="0" />
<rect x="1666" y="173.86" width="179.06" height="4.3" fill="url(#gls)"/>
<polygon points="1596,145.01 1642,145.01 1673.2,176.01 1642,207.51 1596,207.51" fill="none" stroke="#eef0f4" stroke-width="5" stroke-linejoin="round"/>
<polygon points="1596,145.01 1642,145.01 1673.2,176.01 1642,207.51 1596,207.51" fill="#0606cc" stroke="#0808a2" stroke-width="2" stroke-linejoin="round"/>
<text x="0" y="0" font-size="50" text-anchor="middle" fill="#dcdcf6" font-weight="bold" font-style="normal" transform="translate(1628.8 195.61) scale(0.94 1)" font-family='"Liberation Serif", "Liberation Sans", serif'>0</text>
<circle cx="1672" cy="148.01" r="13.4" fill="#900d0f"/>
<circle cx="1672" cy="148.01" r="3.2" fill="#b83030"/>
<rect x="1690.7" y="151.81" width="19.2" height="19.7" rx="2" fill="#f1eef2" stroke="none" stroke-width="0" opacity="0.85"/>
<rect x="1693.7" y="154.81" width="13.2" height="13.7" rx="1.2" fill="#3556c6" stroke="none" stroke-width="0" />
<g id="pot">
<rect x="98.8" y="270" width="5" height="94" fill="url(#gv1)"/>
<polygon points="101.3,266.5 87.7,291.5 114.9,291.5" fill="#dfeee0" stroke="#0c2a14" stroke-width="5" stroke-linejoin="miter"/>
<line x1="101.3" y1="268" x2="101.3" y2="300" stroke="#0c2a14" stroke-width="5" stroke-linecap="butt"/>
<rect x="88.7" y="364.8" width="23.8" height="87" rx="0" fill="#d9d5c3" stroke="#6a1414" stroke-width="4.6" />
<text x="0" y="0" font-size="14.5" text-anchor="start" fill="#c96a48" font-weight="normal" font-style="normal" transform="translate(108.2 426.5) rotate(-90)" opacity="0.8">29%</text>
<rect x="98.8" y="454" width="5" height="77" fill="url(#gv2)"/>
<rect x="90.8" y="531.9" width="21.8" height="21.8" rx="7.4" ry="7.4" fill="#deeeda" stroke="#0a1a0c" stroke-width="4.7"/>
<ellipse cx="101.7" cy="542.8" rx="5" ry="4" fill="#bfddb7" opacity="0.75"/>
<text x="0" y="0" font-size="23.5" text-anchor="end" fill="#0b0b0b" font-weight="normal" font-style="normal" transform="translate(110.9 570.3) rotate(-90) scale(1.01 1)" class="h" >GND</text>
<polyline points="116,429.5 130.3,426.5 130.3,408.5 150,408.5" fill="none" stroke="#5e0b0b" stroke-width="5" stroke-linejoin="miter" stroke-linecap="butt"/>
<polyline points="148,408.5 187.9,408.5 187.9,445" fill="none" stroke="#0a1a0c" stroke-width="5" stroke-linejoin="miter" stroke-linecap="butt"/>
<polygon points="114.5,429.5 126,423.5 124,430 128,436" fill="#5e0b0b"/>
<rect x="177" y="445.3" width="21.8" height="21.8" rx="7.4" ry="7.4" fill="#deeeda" stroke="#0a1a0c" stroke-width="4.7"/>
<ellipse cx="187.9" cy="456.2" rx="5" ry="4" fill="#bfddb7" opacity="0.75"/>
<text x="0" y="0" font-size="23.5" text-anchor="end" fill="#0b0b0b" font-weight="normal" font-style="normal" transform="translate(197.5 485.7) rotate(-90) scale(1 1)" class="h" >S_Asiento_01</text>
<circle cx="68.3" cy="378.3" r="13.3" fill="#930e10"/>
<circle cx="68.3" cy="441" r="13.3" fill="#930e10"/>
<circle cx="68.3" cy="378.3" r="3" fill="#b83030"/>
<circle cx="68.3" cy="441" r="3" fill="#b83030"/>
<rect x="76.2" y="311.6" width="20" height="19.4" rx="2" fill="#f1eef2" stroke="none" stroke-width="0" opacity="0.85"/>
<rect x="79.2" y="314.6" width="14" height="13.4" rx="1.2" fill="#e0553f" stroke="none" stroke-width="0" />
<rect x="76.8" y="486.2" width="19.6" height="19.6" rx="2" fill="#f1eef2" stroke="none" stroke-width="0" opacity="0.85"/>
<rect x="79.8" y="489.2" width="13.6" height="13.6" rx="1.2" fill="#3556c6" stroke="none" stroke-width="0" />
<text x="103.9" y="340.5" font-size="35.6" text-anchor="start" fill="#0b0b0b" font-weight="normal" font-style="normal" >SE_01</text>
<text x="135.6" y="522.6" font-size="21.5" text-anchor="start" fill="#0b0b0b" font-weight="normal" font-style="normal" class="h" >1k</text>
</g>
<g id="probe">
<line x1="1725" y1="1135.82" x2="1790" y2="1135.82" stroke="#0a1a0c" stroke-width="4.3" stroke-linecap="butt"/>
<rect x="1775" y="1133.67" width="41" height="4.3" fill="url(#gpl2)"/>
<rect x="1702.7" y="1124.92" width="21.8" height="21.8" rx="7.4" ry="7.4" fill="#deeeda" stroke="#0a1a0c" stroke-width="4.7"/>
<ellipse cx="1713.6" cy="1135.82" rx="5" ry="4" fill="#bfddb7" opacity="0.75"/>
<text x="0" y="0" font-size="23.5" text-anchor="start" fill="#0b0b0b" font-weight="normal" font-style="normal" transform="translate(1686.2 1160) scale(1.01 1)" class="h" >asiento_01</text>
<rect x="1777.6" y="1110.6" width="19.6" height="19.6" rx="2" fill="#f1eef2" stroke="none" stroke-width="0" opacity="0.85"/>
<rect x="1780.6" y="1113.6" width="13.6" height="13.6" rx="1.2" fill="#e0553f" stroke="none" stroke-width="0" />
<rect x="1814.9" y="1104.4" width="61.9" height="61.6" rx="2" fill="#c60610" stroke="#f3dcd6" stroke-width="1.6" />
<text x="1846" y="1155.6" font-size="50" text-anchor="middle" fill="#f6cfcf" font-weight="bold" font-style="normal" >1</text>
</g>
<g id="ard">
<text x="508.6" y="1128.3" font-size="35.4" text-anchor="start" fill="#0b0b0b" font-weight="normal" font-style="normal" >ARD1</text>
<text x="0" y="0" font-size="23.5" text-anchor="start" fill="#0b0b0b" font-weight="normal" font-style="normal" transform="translate(508.2 1627.9) scale(1.01 1)" class="h" >ARD NANO</text>
<rect x="506.5" y="1163.2" width="196.8" height="440.9" rx="2" fill="none" stroke="#f2f2f4" stroke-width="3" />
<rect x="459" y="1194.1" width="49" height="30" rx="0" fill="#f6f0ec" stroke="none" stroke-width="0" opacity="0.7" filter="url(#hb)"/>
<rect x="459" y="1263.5" width="49" height="192.6" rx="0" fill="#f6f0ec" stroke="none" stroke-width="0" opacity="0.7" filter="url(#hb)"/>
<rect x="701.8" y="1194.1" width="50.2" height="262" rx="0" fill="#f6f0ec" stroke="none" stroke-width="0" opacity="0.7" filter="url(#hb)"/>
<rect x="701.8" y="1495.7" width="50.2" height="53.2" rx="0" fill="#f6f0ec" stroke="none" stroke-width="0" opacity="0.7" filter="url(#hb)"/>
<rect x="488.4" y="1195.7" width="17.4" height="17.6" rx="2" fill="#f1eef2" stroke="none" stroke-width="0" opacity="0.85"/>
<rect x="491.4" y="1198.7" width="11.4" height="11.6" rx="1.2" fill="#8d8484" stroke="none" stroke-width="0" />
<rect x="488.4" y="1265.3" width="17.4" height="17.6" rx="2" fill="#f1eef2" stroke="none" stroke-width="0" opacity="0.85"/>
<rect x="491.4" y="1268.3" width="11.4" height="11.6" rx="1.2" fill="#8d8484" stroke="none" stroke-width="0" />
<rect x="488.4" y="1288.5" width="17.4" height="17.6" rx="2" fill="#f1eef2" stroke="none" stroke-width="0" opacity="0.85"/>
<rect x="491.4" y="1291.5" width="11.4" height="11.6" rx="1.2" fill="#8d8484" stroke="none" stroke-width="0" />
<rect x="488.4" y="1311.7" width="17.4" height="17.6" rx="2" fill="#f1eef2" stroke="none" stroke-width="0" opacity="0.85"/>
<rect x="491.4" y="1314.7" width="11.4" height="11.6" rx="1.2" fill="#8d8484" stroke="none" stroke-width="0" />
<rect x="488.4" y="1334.9" width="17.4" height="17.6" rx="2" fill="#f1eef2" stroke="none" stroke-width="0" opacity="0.85"/>
<rect x="491.4" y="1337.9" width="11.4" height="11.6" rx="1.2" fill="#8d8484" stroke="none" stroke-width="0" />
<rect x="488.4" y="1358.1" width="17.4" height="17.6" rx="2" fill="#f1eef2" stroke="none" stroke-width="0" opacity="0.85"/>
<rect x="491.4" y="1361.1" width="11.4" height="11.6" rx="1.2" fill="#8d8484" stroke="none" stroke-width="0" />
<rect x="488.4" y="1381.3" width="17.4" height="17.6" rx="2" fill="#f1eef2" stroke="none" stroke-width="0" opacity="0.85"/>
<rect x="491.4" y="1384.3" width="11.4" height="11.6" rx="1.2" fill="#8d8484" stroke="none" stroke-width="0" />
<polygon points="461,1218 509,1218 509,1222.2 456.5,1222.2" fill="#470909"/>
<text x="0" y="0" font-size="22" text-anchor="end" fill="#0b0b0b" font-weight="normal" font-style="normal" transform="translate(489.4 1214.7) scale(1.08 1)" class="h" >13</text>
<polygon points="461,1264.4 509,1264.4 509,1268.6 456.5,1268.6" fill="#470909"/>
<polygon points="461,1287.6 509,1287.6 509,1291.8 456.5,1291.8" fill="#470909"/>
<text x="0" y="0" font-size="22" text-anchor="end" fill="#0b0b0b" font-weight="normal" font-style="normal" transform="translate(489.4 1284.3) scale(1.08 1)" class="h" >A0</text>
<polygon points="461,1310.8 509,1310.8 509,1315 456.5,1315" fill="#470909"/>
<text x="0" y="0" font-size="22" text-anchor="end" fill="#0b0b0b" font-weight="normal" font-style="normal" transform="translate(489.4 1307.5) scale(1.08 1)" class="h" >A1</text>
<polygon points="461,1334 509,1334 509,1338.2 456.5,1338.2" fill="#470909"/>
<text x="0" y="0" font-size="22" text-anchor="end" fill="#0b0b0b" font-weight="normal" font-style="normal" transform="translate(489.4 1330.7) scale(1.08 1)" class="h" >A2</text>
<polygon points="461,1357.2 509,1357.2 509,1361.4 456.5,1361.4" fill="#470909"/>
<text x="0" y="0" font-size="22" text-anchor="end" fill="#0b0b0b" font-weight="normal" font-style="normal" transform="translate(489.4 1353.9) scale(1.08 1)" class="h" >A3</text>
<polygon points="461,1380.4 509,1380.4 509,1384.6 456.5,1384.6" fill="#470909"/>
<text x="0" y="0" font-size="22" text-anchor="end" fill="#0b0b0b" font-weight="normal" font-style="normal" transform="translate(489.4 1377.1) scale(1.08 1)" class="h" >A4</text>
<polygon points="461,1403.6 509,1403.6 509,1407.8 456.5,1407.8" fill="#470909"/>
<text x="0" y="0" font-size="22" text-anchor="end" fill="#0b0b0b" font-weight="normal" font-style="normal" transform="translate(489.4 1400.3) scale(1.08 1)" class="h" >A5</text>
<polygon points="461,1426.8 509,1426.8 509,1431 456.5,1431" fill="#470909"/>
<text x="0" y="0" font-size="22" text-anchor="end" fill="#0b0b0b" font-weight="normal" font-style="normal" transform="translate(489.4 1423.5) scale(1.08 1)" class="h" >A6</text>
<polygon points="461,1450 509,1450 509,1454.2 456.5,1454.2" fill="#470909"/>
<text x="0" y="0" font-size="22" text-anchor="end" fill="#0b0b0b" font-weight="normal" font-style="normal" transform="translate(489.4 1446.7) scale(1.08 1)" class="h" >A7</text>
<polygon points="461,1496.4 509,1496.4 509,1500.6 456.5,1500.6" fill="#470909"/>
<rect x="478.2" y="1503.7" width="20.5" height="18.3" rx="2" fill="#f1eef2" stroke="none" stroke-width="0" opacity="0.85"/>
<rect x="481.2" y="1506.7" width="14.5" height="12.3" rx="1.2" fill="#8d8484" stroke="none" stroke-width="0" />
<rect x="703.9" y="1195.7" width="17.5" height="17.5" rx="2" fill="#f1eef2" stroke="none" stroke-width="0" opacity="0.85"/>
<rect x="706.9" y="1198.7" width="11.5" height="11.5" rx="1.2" fill="#3556c6" stroke="none" stroke-width="0" />
<text x="0" y="0" font-size="23.5" text-anchor="start" fill="#0b0b0b" font-weight="normal" font-style="normal" transform="translate(725.4 1215.1) scale(1.01 1)" class="h" >12</text>
<rect x="703.9" y="1218.9" width="17.5" height="17.5" rx="2" fill="#f1eef2" stroke="none" stroke-width="0" opacity="0.85"/>
<rect x="706.9" y="1221.9" width="11.5" height="11.5" rx="1.2" fill="#3556c6" stroke="none" stroke-width="0" />
<text x="0" y="0" font-size="23.5" text-anchor="start" fill="#0b0b0b" font-weight="normal" font-style="normal" transform="translate(725.4 1238.3) scale(1.01 1)" class="h" >11</text>
<rect x="703.9" y="1242.1" width="17.5" height="17.5" rx="2" fill="#f1eef2" stroke="none" stroke-width="0" opacity="0.85"/>
<rect x="706.9" y="1245.1" width="11.5" height="11.5" rx="1.2" fill="#3556c6" stroke="none" stroke-width="0" />
<text x="0" y="0" font-size="23.5" text-anchor="start" fill="#0b0b0b" font-weight="normal" font-style="normal" transform="translate(725.4 1261.5) scale(1.01 1)" class="h" >10</text>
<rect x="703.9" y="1265.3" width="17.5" height="17.5" rx="2" fill="#f1eef2" stroke="none" stroke-width="0" opacity="0.85"/>
<rect x="706.9" y="1268.3" width="11.5" height="11.5" rx="1.2" fill="#3556c6" stroke="none" stroke-width="0" />
<text x="0" y="0" font-size="23.5" text-anchor="start" fill="#0b0b0b" font-weight="normal" font-style="normal" transform="translate(725.4 1284.7) scale(1.01 1)" class="h" >9</text>
<rect x="703.9" y="1288.5" width="17.5" height="17.5" rx="2" fill="#f1eef2" stroke="none" stroke-width="0" opacity="0.85"/>
<rect x="706.9" y="1291.5" width="11.5" height="11.5" rx="1.2" fill="#e0553f" stroke="none" stroke-width="0" />
<text x="0" y="0" font-size="23.5" text-anchor="start" fill="#0b0b0b" font-weight="normal" font-style="normal" transform="translate(725.4 1307.9) scale(1.01 1)" class="h" >8</text>
<rect x="703.9" y="1311.7" width="17.5" height="17.5" rx="2" fill="#f1eef2" stroke="none" stroke-width="0" opacity="0.85"/>
<rect x="706.9" y="1314.7" width="11.5" height="11.5" rx="1.2" fill="#3556c6" stroke="none" stroke-width="0" />
<text x="0" y="0" font-size="23.5" text-anchor="start" fill="#0b0b0b" font-weight="normal" font-style="normal" transform="translate(725.4 1331.1) scale(1.01 1)" class="h" >7</text>
<rect x="703.9" y="1334.9" width="17.5" height="17.5" rx="2" fill="#f1eef2" stroke="none" stroke-width="0" opacity="0.85"/>
<rect x="706.9" y="1337.9" width="11.5" height="11.5" rx="1.2" fill="#3556c6" stroke="none" stroke-width="0" />
<text x="0" y="0" font-size="23.5" text-anchor="start" fill="#0b0b0b" font-weight="normal" font-style="normal" transform="translate(725.4 1354.3) scale(1.01 1)" class="h" >6</text>
<rect x="703.9" y="1358.1" width="17.5" height="17.5" rx="2" fill="#f1eef2" stroke="none" stroke-width="0" opacity="0.85"/>
<rect x="706.9" y="1361.1" width="11.5" height="11.5" rx="1.2" fill="#8d8484" stroke="none" stroke-width="0" />
<text x="0" y="0" font-size="23.5" text-anchor="start" fill="#0b0b0b" font-weight="normal" font-style="normal" transform="translate(725.4 1377.5) scale(1.01 1)" class="h" >5</text>
<rect x="703.9" y="1381.3" width="17.5" height="17.5" rx="2" fill="#f1eef2" stroke="none" stroke-width="0" opacity="0.85"/>
<rect x="706.9" y="1384.3" width="11.5" height="11.5" rx="1.2" fill="#8d8484" stroke="none" stroke-width="0" />
<text x="0" y="0" font-size="23.5" text-anchor="start" fill="#0b0b0b" font-weight="normal" font-style="normal" transform="translate(725.4 1400.7) scale(1.01 1)" class="h" >4</text>
<rect x="703.9" y="1404.5" width="17.5" height="17.5" rx="2" fill="#f1eef2" stroke="none" stroke-width="0" opacity="0.85"/>
<rect x="706.9" y="1407.5" width="11.5" height="11.5" rx="1.2" fill="#8d8484" stroke="none" stroke-width="0" />
<text x="0" y="0" font-size="23.5" text-anchor="start" fill="#0b0b0b" font-weight="normal" font-style="normal" transform="translate(725.4 1423.9) scale(1.01 1)" class="h" >3</text>
<rect x="703.9" y="1427.7" width="17.5" height="17.5" rx="2" fill="#f1eef2" stroke="none" stroke-width="0" opacity="0.85"/>
<rect x="706.9" y="1430.7" width="11.5" height="11.5" rx="1.2" fill="#3556c6" stroke="none" stroke-width="0" />
<text x="0" y="0" font-size="23.5" text-anchor="start" fill="#0b0b0b" font-weight="normal" font-style="normal" transform="translate(725.4 1447.1) scale(1.01 1)" class="h" >2</text>
<rect x="703.9" y="1497.3" width="17.5" height="17.5" rx="2" fill="#f1eef2" stroke="none" stroke-width="0" opacity="0.85"/>
<rect x="706.9" y="1500.3" width="11.5" height="11.5" rx="1.2" fill="#e0553f" stroke="none" stroke-width="0" />
<text x="0" y="0" font-size="23.5" text-anchor="start" fill="#0b0b0b" font-weight="normal" font-style="normal" transform="translate(725.4 1516.7) scale(1.01 1)" class="h" >0</text>
<rect x="703.9" y="1520.5" width="17.5" height="17.5" rx="2" fill="#f1eef2" stroke="none" stroke-width="0" opacity="0.85"/>
<rect x="706.9" y="1523.5" width="11.5" height="11.5" rx="1.2" fill="#e0553f" stroke="none" stroke-width="0" />
<text x="0" y="0" font-size="23.5" text-anchor="start" fill="#0b0b0b" font-weight="normal" font-style="normal" transform="translate(725.4 1539.9) scale(1.01 1)" class="h" >1</text>
<polygon points="700.8,1218 751,1218 755.5,1222.2 700.8,1222.2" fill="#470909"/>
<polygon points="700.8,1241.2 751,1241.2 755.5,1245.4 700.8,1245.4" fill="#470909"/>
<polygon points="700.8,1264.4 751,1264.4 755.5,1268.6 700.8,1268.6" fill="#470909"/>
<polygon points="700.8,1287.6 751,1287.6 755.5,1291.8 700.8,1291.8" fill="#470909"/>
<polygon points="700.8,1310.8 751,1310.8 755.5,1315 700.8,1315" fill="#470909"/>
<polygon points="700.8,1334 751,1334 755.5,1338.2 700.8,1338.2" fill="#470909"/>
<polygon points="700.8,1357.2 751,1357.2 755.5,1361.4 700.8,1361.4" fill="#470909"/>
<polygon points="700.8,1380.4 751,1380.4 755.5,1384.6 700.8,1384.6" fill="#470909"/>
<polygon points="700.8,1403.6 751,1403.6 755.5,1407.8 700.8,1407.8" fill="#470909"/>
<polygon points="700.8,1426.8 751,1426.8 755.5,1431 700.8,1431" fill="#470909"/>
<polygon points="700.8,1450 751,1450 755.5,1454.2 700.8,1454.2" fill="#470909"/>
<polygon points="700.8,1519.6 751,1519.6 755.5,1523.8 700.8,1523.8" fill="#470909"/>
<polygon points="700.8,1542.8 751,1542.8 755.5,1547 700.8,1547" fill="#470909"/>
<polyline points="745,1220.1 757,1220.1 829.8,1193.99 863,1193.99" fill="none" stroke="#0a1a0c" stroke-width="4.3" stroke-linejoin="round" stroke-linecap="butt"/>
<rect x="863.9" y="1183.09" width="21.8" height="21.8" rx="7.4" ry="7.4" fill="#deeeda" stroke="#0a1a0c" stroke-width="4.7"/>
<ellipse cx="874.8" cy="1193.99" rx="5" ry="4" fill="#bfddb7" opacity="0.75"/>
<text x="0" y="0" font-size="23.5" text-anchor="start" fill="#0b0b0b" font-weight="normal" font-style="normal" transform="translate(900.6 1202.89) scale(1.01 1)" class="h" >S3</text>
<polyline points="745,1243.3 757,1243.3 829.8,1223.08 863,1223.08" fill="none" stroke="#0a1a0c" stroke-width="4.3" stroke-linejoin="round" stroke-linecap="butt"/>
<rect x="863.9" y="1212.17" width="21.8" height="21.8" rx="7.4" ry="7.4" fill="#deeeda" stroke="#0a1a0c" stroke-width="4.7"/>
<ellipse cx="874.8" cy="1223.08" rx="5" ry="4" fill="#bfddb7" opacity="0.75"/>
<text x="0" y="0" font-size="23.5" text-anchor="start" fill="#0b0b0b" font-weight="normal" font-style="normal" transform="translate(900.6 1231.98) scale(1.01 1)" class="h" >S2</text>
<polyline points="745,1266.5 757,1266.5 829.8,1252.16 863,1252.16" fill="none" stroke="#0a1a0c" stroke-width="4.3" stroke-linejoin="round" stroke-linecap="butt"/>
<rect x="863.9" y="1241.26" width="21.8" height="21.8" rx="7.4" ry="7.4" fill="#deeeda" stroke="#0a1a0c" stroke-width="4.7"/>
<ellipse cx="874.8" cy="1252.16" rx="5" ry="4" fill="#bfddb7" opacity="0.75"/>
<text x="0" y="0" font-size="23.5" text-anchor="start" fill="#0b0b0b" font-weight="normal" font-style="normal" transform="translate(900.6 1261.06) scale(1.01 1)" class="h" >S1</text>
<polyline points="745,1289.7 757,1289.7 829.8,1281.24 863,1281.24" fill="none" stroke="#0a1a0c" stroke-width="4.3" stroke-linejoin="round" stroke-linecap="butt"/>
<rect x="863.9" y="1270.34" width="21.8" height="21.8" rx="7.4" ry="7.4" fill="#deeeda" stroke="#0a1a0c" stroke-width="4.7"/>
<ellipse cx="874.8" cy="1281.24" rx="5" ry="4" fill="#bfddb7" opacity="0.75"/>
<text x="0" y="0" font-size="23.5" text-anchor="start" fill="#0b0b0b" font-weight="normal" font-style="normal" transform="translate(900.6 1290.14) scale(1.01 1)" class="h" >S0</text>
<polyline points="745,1312.9 757,1312.9 829.8,1310.33 863,1310.33" fill="none" stroke="#0a1a0c" stroke-width="4.3" stroke-linejoin="round" stroke-linecap="butt"/>
<rect x="863.9" y="1299.43" width="21.8" height="21.8" rx="7.4" ry="7.4" fill="#deeeda" stroke="#0a1a0c" stroke-width="4.7"/>
<ellipse cx="874.8" cy="1310.33" rx="5" ry="4" fill="#bfddb7" opacity="0.75"/>
<text x="0" y="0" font-size="23.5" text-anchor="start" fill="#0b0b0b" font-weight="normal" font-style="normal" transform="translate(900.6 1319.23) scale(1.03 1)" class="h" >Mux_LED</text>
<polyline points="745,1336.1 757,1336.1 790,1339.41 863,1339.41" fill="none" stroke="#0a1a0c" stroke-width="4.3" stroke-linejoin="round" stroke-linecap="butt"/>
<rect x="863.9" y="1328.51" width="21.8" height="21.8" rx="7.4" ry="7.4" fill="#deeeda" stroke="#0a1a0c" stroke-width="4.7"/>
<ellipse cx="874.8" cy="1339.41" rx="5" ry="4" fill="#bfddb7" opacity="0.75"/>
<text x="0" y="0" font-size="23.5" text-anchor="start" fill="#0b0b0b" font-weight="normal" font-style="normal" transform="translate(900.6 1348.32) scale(1.03 1)" class="h" >Mux_Broche</text>
<polyline points="745,1359.3 757,1359.3 813.5,1368.5 863,1368.5" fill="none" stroke="#0a1a0c" stroke-width="4.3" stroke-linejoin="round" stroke-linecap="butt"/>
<rect x="863.9" y="1357.6" width="21.8" height="21.8" rx="7.4" ry="7.4" fill="#deeeda" stroke="#0a1a0c" stroke-width="4.7"/>
<ellipse cx="874.8" cy="1368.5" rx="5" ry="4" fill="#bfddb7" opacity="0.75"/>
<text x="0" y="0" font-size="23.5" text-anchor="start" fill="#0b0b0b" font-weight="normal" font-style="normal" transform="translate(900.6 1377.4) scale(1.03 1)" class="h" >Mux_Cinturon</text>
<polyline points="745,1521.7 776,1521.7 799.6,1513.92 834,1513.92" fill="none" stroke="#0a1a0c" stroke-width="4.3" stroke-linejoin="round" stroke-linecap="butt"/>
<polyline points="745,1544.9 796,1544.9 800,1543.01 834,1543.01" fill="none" stroke="#0a1a0c" stroke-width="4.3" stroke-linejoin="round" stroke-linecap="butt"/>
<rect x="835" y="1503.02" width="21.8" height="21.8" rx="7.4" ry="7.4" fill="#deeeda" stroke="#0a1a0c" stroke-width="4.7"/>
<ellipse cx="845.9" cy="1513.92" rx="5" ry="4" fill="#bfddb7" opacity="0.75"/>
<rect x="835" y="1532.11" width="21.8" height="21.8" rx="7.4" ry="7.4" fill="#deeeda" stroke="#0a1a0c" stroke-width="4.7"/>
<ellipse cx="845.9" cy="1543.01" rx="5" ry="4" fill="#bfddb7" opacity="0.75"/>
<text x="0" y="0" font-size="23.5" text-anchor="start" fill="#0b0b0b" font-weight="normal" font-style="normal" transform="translate(872.4 1522.83) scale(1.01 1)" class="h" >Tx</text>
<text x="0" y="0" font-size="23.5" text-anchor="start" fill="#0b0b0b" font-weight="normal" font-style="normal" transform="translate(872.4 1551.91) scale(1.01 1)" class="h" >Rx</text>
<polyline points="422,1374 422,1280.5 449.4,1280.5 459,1289.7 470,1289.7" fill="none" stroke="#0a1a0c" stroke-width="4.3" stroke-linejoin="round" stroke-linecap="butt"/>
<rect x="411.1" y="1374.9" width="21.8" height="21.8" rx="7.4" ry="7.4" fill="#deeeda" stroke="#0a1a0c" stroke-width="4.7"/>
<ellipse cx="422" cy="1385.8" rx="5" ry="4" fill="#bfddb7" opacity="0.75"/>
<text x="0" y="0" font-size="23.5" text-anchor="end" fill="#0b0b0b" font-weight="normal" font-style="normal" transform="translate(431.6 1414.1) rotate(-90) scale(1.03 1)" class="h" >Mux_Asiento</text>
<rect x="510.2" y="1166.9" width="189.4" height="433.5" rx="1.5" fill="url(#gboard)" stroke="#0b1c9c" stroke-width="4.4" />
<circle cx="528.5" cy="1189.4" r="11.4" fill="#d3d4e6" stroke="#0b1c9c" stroke-width="2.6"/>
<circle cx="528.5" cy="1189.4" r="7" fill="#c6c6d8"/>
<circle cx="684.2" cy="1189.4" r="11.4" fill="#d3d4e6" stroke="#0b1c9c" stroke-width="2.6"/>
<circle cx="684.2" cy="1189.4" r="7" fill="#c6c6d8"/>
<circle cx="528.5" cy="1577.6" r="11.4" fill="#d3d4e6" stroke="#0b1c9c" stroke-width="2.6"/>
<circle cx="528.5" cy="1577.6" r="7" fill="#c6c6d8"/>
<circle cx="684.2" cy="1577.6" r="11.4" fill="#d3d4e6" stroke="#0b1c9c" stroke-width="2.6"/>
<circle cx="684.2" cy="1577.6" r="7" fill="#c6c6d8"/>
<circle cx="559.5" cy="1184.5" r="7.8" fill="#b9c6ea" stroke="#0b1c9c" stroke-width="2.4"/>
<circle cx="656" cy="1184.5" r="7.8" fill="#b9c6ea" stroke="#0b1c9c" stroke-width="2.4"/>
<circle cx="559.5" cy="1238.6" r="7.8" fill="#b9c6ea" stroke="#0b1c9c" stroke-width="2.4"/>
<circle cx="656" cy="1238.6" r="7.8" fill="#b9c6ea" stroke="#0b1c9c" stroke-width="2.4"/>
<circle cx="526" cy="1221.3" r="6.6" fill="#d6dcee"/>
<circle cx="526" cy="1221.3" r="3.2" fill="#c3c6d6"/>
<circle cx="685.8" cy="1221.3" r="6.6" fill="#d6dcee"/>
<circle cx="685.8" cy="1221.3" r="3.2" fill="#c3c6d6"/>
<circle cx="526" cy="1244.5" r="6.6" fill="#d6dcee"/>
<circle cx="526" cy="1244.5" r="3.2" fill="#c3c6d6"/>
<circle cx="685.8" cy="1244.5" r="6.6" fill="#d6dcee"/>
<circle cx="685.8" cy="1244.5" r="3.2" fill="#c3c6d6"/>
<circle cx="526" cy="1267.7" r="6.6" fill="#d6dcee"/>
<circle cx="526" cy="1267.7" r="3.2" fill="#c3c6d6"/>
<circle cx="685.8" cy="1267.7" r="6.6" fill="#d6dcee"/>
<circle cx="685.8" cy="1267.7" r="3.2" fill="#c3c6d6"/>
<circle cx="526" cy="1290.9" r="6.6" fill="#d6dcee"/>
<circle cx="526" cy="1290.9" r="3.2" fill="#c3c6d6"/>
<circle cx="685.8" cy="1290.9" r="6.6" fill="#d6dcee"/>
<circle cx="685.8" cy="1290.9" r="3.2" fill="#c3c6d6"/>
<circle cx="526" cy="1314.1" r="6.6" fill="#d6dcee"/>
<circle cx="526" cy="1314.1" r="3.2" fill="#c3c6d6"/>
<circle cx="685.8" cy="1314.1" r="6.6" fill="#d6dcee"/>
<circle cx="685.8" cy="1314.1" r="3.2" fill="#c3c6d6"/>
<circle cx="526" cy="1337.3" r="6.6" fill="#d6dcee"/>
<circle cx="526" cy="1337.3" r="3.2" fill="#c3c6d6"/>
<circle cx="685.8" cy="1337.3" r="6.6" fill="#d6dcee"/>
<circle cx="685.8" cy="1337.3" r="3.2" fill="#c3c6d6"/>
<circle cx="526" cy="1360.5" r="6.6" fill="#d6dcee"/>
<circle cx="526" cy="1360.5" r="3.2" fill="#c3c6d6"/>
<circle cx="685.8" cy="1360.5" r="6.6" fill="#d6dcee"/>
<circle cx="685.8" cy="1360.5" r="3.2" fill="#c3c6d6"/>
<circle cx="526" cy="1383.7" r="6.6" fill="#d6dcee"/>
<circle cx="526" cy="1383.7" r="3.2" fill="#c3c6d6"/>
<circle cx="685.8" cy="1383.7" r="6.6" fill="#d6dcee"/>
<circle cx="685.8" cy="1383.7" r="3.2" fill="#c3c6d6"/>
<circle cx="526" cy="1406.9" r="6.6" fill="#d6dcee"/>
<circle cx="526" cy="1406.9" r="3.2" fill="#c3c6d6"/>
<circle cx="685.8" cy="1406.9" r="6.6" fill="#d6dcee"/>
<circle cx="685.8" cy="1406.9" r="3.2" fill="#c3c6d6"/>
<circle cx="526" cy="1430.1" r="6.6" fill="#d6dcee"/>
<circle cx="526" cy="1430.1" r="3.2" fill="#c3c6d6"/>
<circle cx="685.8" cy="1430.1" r="6.6" fill="#d6dcee"/>
<circle cx="685.8" cy="1430.1" r="3.2" fill="#c3c6d6"/>
<circle cx="526" cy="1453.3" r="6.6" fill="#d6dcee"/>
<circle cx="526" cy="1453.3" r="3.2" fill="#c3c6d6"/>
<circle cx="685.8" cy="1453.3" r="6.6" fill="#d6dcee"/>
<circle cx="685.8" cy="1453.3" r="3.2" fill="#c3c6d6"/>
<circle cx="526" cy="1476.5" r="6.6" fill="#d6dcee"/>
<circle cx="526" cy="1476.5" r="3.2" fill="#c3c6d6"/>
<circle cx="685.8" cy="1476.5" r="6.6" fill="#d6dcee"/>
<circle cx="685.8" cy="1476.5" r="3.2" fill="#c3c6d6"/>
<circle cx="526" cy="1499.7" r="6.6" fill="#d6dcee"/>
<circle cx="526" cy="1499.7" r="3.2" fill="#c3c6d6"/>
<circle cx="685.8" cy="1499.7" r="6.6" fill="#d6dcee"/>
<circle cx="685.8" cy="1499.7" r="3.2" fill="#c3c6d6"/>
<circle cx="526" cy="1522.9" r="6.6" fill="#d6dcee"/>
<circle cx="526" cy="1522.9" r="3.2" fill="#c3c6d6"/>
<circle cx="685.8" cy="1522.9" r="6.6" fill="#d6dcee"/>
<circle cx="685.8" cy="1522.9" r="3.2" fill="#c3c6d6"/>
<circle cx="526" cy="1546.1" r="6.6" fill="#d6dcee"/>
<circle cx="526" cy="1546.1" r="3.2" fill="#c3c6d6"/>
<circle cx="685.8" cy="1546.1" r="6.6" fill="#d6dcee"/>
<circle cx="685.8" cy="1546.1" r="3.2" fill="#c3c6d6"/>
<line x1="511" y1="1220.1" x2="520.5" y2="1220.1" stroke="#10207e" stroke-width="3.4" stroke-linecap="butt"/>
<line x1="511" y1="1266.5" x2="520.5" y2="1266.5" stroke="#10207e" stroke-width="3.4" stroke-linecap="butt"/>
<line x1="511" y1="1289.7" x2="520.5" y2="1289.7" stroke="#10207e" stroke-width="3.4" stroke-linecap="butt"/>
<line x1="511" y1="1312.9" x2="520.5" y2="1312.9" stroke="#10207e" stroke-width="3.4" stroke-linecap="butt"/>
<line x1="511" y1="1336.1" x2="520.5" y2="1336.1" stroke="#10207e" stroke-width="3.4" stroke-linecap="butt"/>
<line x1="511" y1="1359.3" x2="520.5" y2="1359.3" stroke="#10207e" stroke-width="3.4" stroke-linecap="butt"/>
<line x1="511" y1="1382.5" x2="520.5" y2="1382.5" stroke="#10207e" stroke-width="3.4" stroke-linecap="butt"/>
<line x1="511" y1="1405.7" x2="520.5" y2="1405.7" stroke="#10207e" stroke-width="3.4" stroke-linecap="butt"/>
<line x1="511" y1="1428.9" x2="520.5" y2="1428.9" stroke="#10207e" stroke-width="3.4" stroke-linecap="butt"/>
<line x1="511" y1="1452.1" x2="520.5" y2="1452.1" stroke="#10207e" stroke-width="3.4" stroke-linecap="butt"/>
<line x1="511" y1="1498.5" x2="520.5" y2="1498.5" stroke="#10207e" stroke-width="3.4" stroke-linecap="butt"/>
<line x1="691.5" y1="1220.1" x2="698.8" y2="1220.1" stroke="#10207e" stroke-width="3.4" stroke-linecap="butt"/>
<line x1="691.5" y1="1243.3" x2="698.8" y2="1243.3" stroke="#10207e" stroke-width="3.4" stroke-linecap="butt"/>
<line x1="691.5" y1="1266.5" x2="698.8" y2="1266.5" stroke="#10207e" stroke-width="3.4" stroke-linecap="butt"/>
<line x1="691.5" y1="1289.7" x2="698.8" y2="1289.7" stroke="#10207e" stroke-width="3.4" stroke-linecap="butt"/>
<line x1="691.5" y1="1312.9" x2="698.8" y2="1312.9" stroke="#10207e" stroke-width="3.4" stroke-linecap="butt"/>
<line x1="691.5" y1="1336.1" x2="698.8" y2="1336.1" stroke="#10207e" stroke-width="3.4" stroke-linecap="butt"/>
<line x1="691.5" y1="1359.3" x2="698.8" y2="1359.3" stroke="#10207e" stroke-width="3.4" stroke-linecap="butt"/>
<line x1="691.5" y1="1382.5" x2="698.8" y2="1382.5" stroke="#10207e" stroke-width="3.4" stroke-linecap="butt"/>
<line x1="691.5" y1="1405.7" x2="698.8" y2="1405.7" stroke="#10207e" stroke-width="3.4" stroke-linecap="butt"/>
<line x1="691.5" y1="1428.9" x2="698.8" y2="1428.9" stroke="#10207e" stroke-width="3.4" stroke-linecap="butt"/>
<line x1="691.5" y1="1452.1" x2="698.8" y2="1452.1" stroke="#10207e" stroke-width="3.4" stroke-linecap="butt"/>
<line x1="691.5" y1="1521.7" x2="698.8" y2="1521.7" stroke="#10207e" stroke-width="3.4" stroke-linecap="butt"/>
<line x1="691.5" y1="1544.9" x2="698.8" y2="1544.9" stroke="#10207e" stroke-width="3.4" stroke-linecap="butt"/>
<text x="540" y="1224.5" font-size="8.6" text-anchor="start" fill="#e4f2ff" font-weight="bold" font-style="italic" opacity="1">D13</text>
<text x="676.5" y="1224.5" font-size="8.6" text-anchor="end" fill="#e4f2ff" font-weight="bold" font-style="italic" opacity="1">D12</text>
<text x="540" y="1247.7" font-size="8.6" text-anchor="start" fill="#e4f2ff" font-weight="bold" font-style="italic" opacity="0.35">3V3</text>
<text x="676.5" y="1247.7" font-size="8.6" text-anchor="end" fill="#e4f2ff" font-weight="bold" font-style="italic" opacity="1">D11</text>
<text x="540" y="1270.9" font-size="8.6" text-anchor="start" fill="#e4f2ff" font-weight="bold" font-style="italic" opacity="1">REF</text>
<text x="676.5" y="1270.9" font-size="8.6" text-anchor="end" fill="#e4f2ff" font-weight="bold" font-style="italic" opacity="1">D10</text>
<text x="540" y="1294.1" font-size="8.6" text-anchor="start" fill="#e4f2ff" font-weight="bold" font-style="italic" opacity="1">A0</text>
<text x="676.5" y="1294.1" font-size="8.6" text-anchor="end" fill="#e4f2ff" font-weight="bold" font-style="italic" opacity="1">D9</text>
<text x="540" y="1317.3" font-size="8.6" text-anchor="start" fill="#e4f2ff" font-weight="bold" font-style="italic" opacity="1">A1</text>
<text x="676.5" y="1317.3" font-size="8.6" text-anchor="end" fill="#e4f2ff" font-weight="bold" font-style="italic" opacity="1">D8</text>
<text x="540" y="1340.5" font-size="8.6" text-anchor="start" fill="#e4f2ff" font-weight="bold" font-style="italic" opacity="1">A2</text>
<text x="676.5" y="1340.5" font-size="8.6" text-anchor="end" fill="#e4f2ff" font-weight="bold" font-style="italic" opacity="1">D7</text>
<text x="540" y="1363.7" font-size="8.6" text-anchor="start" fill="#e4f2ff" font-weight="bold" font-style="italic" opacity="1">A3</text>
<text x="676.5" y="1363.7" font-size="8.6" text-anchor="end" fill="#e4f2ff" font-weight="bold" font-style="italic" opacity="1">D6</text>
<text x="540" y="1386.9" font-size="8.6" text-anchor="start" fill="#e4f2ff" font-weight="bold" font-style="italic" opacity="1">A4</text>
<text x="676.5" y="1386.9" font-size="8.6" text-anchor="end" fill="#e4f2ff" font-weight="bold" font-style="italic" opacity="1">D5</text>
<text x="540" y="1410.1" font-size="8.6" text-anchor="start" fill="#e4f2ff" font-weight="bold" font-style="italic" opacity="1">A5</text>
<text x="676.5" y="1410.1" font-size="8.6" text-anchor="end" fill="#e4f2ff" font-weight="bold" font-style="italic" opacity="1">D4</text>
<text x="540" y="1433.3" font-size="8.6" text-anchor="start" fill="#e4f2ff" font-weight="bold" font-style="italic" opacity="1">A6</text>
<text x="676.5" y="1433.3" font-size="8.6" text-anchor="end" fill="#e4f2ff" font-weight="bold" font-style="italic" opacity="1">D3</text>
<text x="540" y="1456.5" font-size="8.6" text-anchor="start" fill="#e4f2ff" font-weight="bold" font-style="italic" opacity="1">A7</text>
<text x="676.5" y="1456.5" font-size="8.6" text-anchor="end" fill="#e4f2ff" font-weight="bold" font-style="italic" opacity="1">D2</text>
<text x="540" y="1479.7" font-size="8.6" text-anchor="start" fill="#e4f2ff" font-weight="bold" font-style="italic" opacity="1">5V</text>
<text x="676.5" y="1479.7" font-size="8.6" text-anchor="end" fill="#e4f2ff" font-weight="bold" font-style="italic" opacity="0.3">GND</text>
<text x="540" y="1502.9" font-size="8.6" text-anchor="start" fill="#e4f2ff" font-weight="bold" font-style="italic" opacity="1">RST</text>
<text x="676.5" y="1502.9" font-size="8.6" text-anchor="end" fill="#e4f2ff" font-weight="bold" font-style="italic" opacity="0.3">RST</text>
<text x="540" y="1526.1" font-size="8.6" text-anchor="start" fill="#e4f2ff" font-weight="bold" font-style="italic" opacity="1">GND</text>
<text x="676.5" y="1526.1" font-size="8.6" text-anchor="end" fill="#e4f2ff" font-weight="bold" font-style="italic" opacity="1">RX D0</text>
<text x="540" y="1549.3" font-size="8.6" text-anchor="start" fill="#e4f2ff" font-weight="bold" font-style="italic" opacity="0.35">VIN</text>
<text x="676.5" y="1549.3" font-size="8.6" text-anchor="end" fill="#e4f2ff" font-weight="bold" font-style="italic" opacity="1">TX D1</text>
<text x="546" y="1578" font-size="6.6" text-anchor="start" fill="#bfe0ff" font-weight="bold" font-style="normal" textLength="71" lengthAdjust="spacingAndGlyphs">www.arduino.cc</text>
<text x="544" y="1589.4" font-size="6.6" text-anchor="start" fill="#bfe0ff" font-weight="bold" font-style="normal" textLength="128" lengthAdjust="spacingAndGlyphs">blogembarcado.blogspot.com</text>
<polygon points="606,1270.4 656,1320.4 606,1370.4 556,1320.4" fill="#0b1460" stroke="#5aa8f0" stroke-width="1.6" stroke-linejoin="round"/>
<polygon points="606,1276.9 649.5,1320.4 606,1363.9 562.5,1320.4" fill="#2f2f2c"/>
<polygon points="606,1276.9 649.5,1320.4 606,1363.9" fill="#242422"/>
<circle cx="640.3" cy="1323.2" r="4.2" fill="#050505"/>
<text x="0" y="0" font-size="12.5" text-anchor="start" fill="#a79a2c" font-weight="bold" font-style="normal" transform="translate(594.5 1344) rotate(-90)" textLength="40" lengthAdjust="spacingAndGlyphs">ATMEL</text>
<text x="0" y="0" font-size="10" text-anchor="start" fill="#8d8328" font-weight="bold" font-style="normal" transform="translate(607.5 1356) rotate(-90)" textLength="66" lengthAdjust="spacingAndGlyphs">MEGA328P</text>
<rect x="562" y="1136.3" width="91.5" height="112.2" rx="2" fill="url(#gusb)" stroke="none" stroke-width="0" />
<rect x="576.3" y="1142.4" width="4.6" height="48.2" rx="0" fill="#8d8d8d" stroke="none" stroke-width="0" />
<rect x="582.9" y="1142.4" width="4.6" height="48.2" rx="0" fill="#8d8d8d" stroke="none" stroke-width="0" />
<path d="M597.5 1145.8V1203.3H614.5V1145.8" fill="none" stroke="#8d8d8d" stroke-width="1.6"/>
<path d="M624.5 1190.6V1149 Q629.1 1141.5 633.8 1149V1190.6" fill="none" stroke="#8d8d8d" stroke-width="1.6"/>
<path d="M579.4 1223H597.9V1212.6H612.2V1223H629.9" fill="none" stroke="#8d8d8d" stroke-width="1.5"/>
<path d="M586.3 1233.8H624.1" fill="none" stroke="#8d8d8d" stroke-width="1.2"/>
<path d="M562 1248.5L569 1239H646.5L653.5 1248.5Z" fill="#979797"/>
</g>
<g id="gnd">
<polyline points="776,1601.18 741,1601.18 741,1629" fill="none" stroke="#0a1a0c" stroke-width="4.3" stroke-linejoin="miter" stroke-linecap="butt"/>
<rect x="776.7" y="1590.28" width="21.8" height="21.8" rx="7.4" ry="7.4" fill="#deeeda" stroke="#0a1a0c" stroke-width="4.7"/>
<ellipse cx="787.6" cy="1601.18" rx="5" ry="4" fill="#bfddb7" opacity="0.75"/>
<text x="0" y="0" font-size="23.5" text-anchor="start" fill="#0b0b0b" font-weight="normal" font-style="normal" transform="translate(814.3 1610.08) scale(1.01 1)" class="h" >GND</text>
<line x1="709.9" y1="1629.3" x2="771.7" y2="1629.3" stroke="#0a1a0c" stroke-width="4.8" stroke-linecap="butt"/>
<line x1="723.6" y1="1644.6" x2="757.6" y2="1644.6" stroke="#0a1a0c" stroke-width="4.4" stroke-linecap="butt"/>
<line x1="736.2" y1="1658.6" x2="745.8" y2="1658.6" stroke="#0a1a0c" stroke-width="3.6" stroke-linecap="butt"/>
</g>
</g>
</svg>
</body>
</html>
